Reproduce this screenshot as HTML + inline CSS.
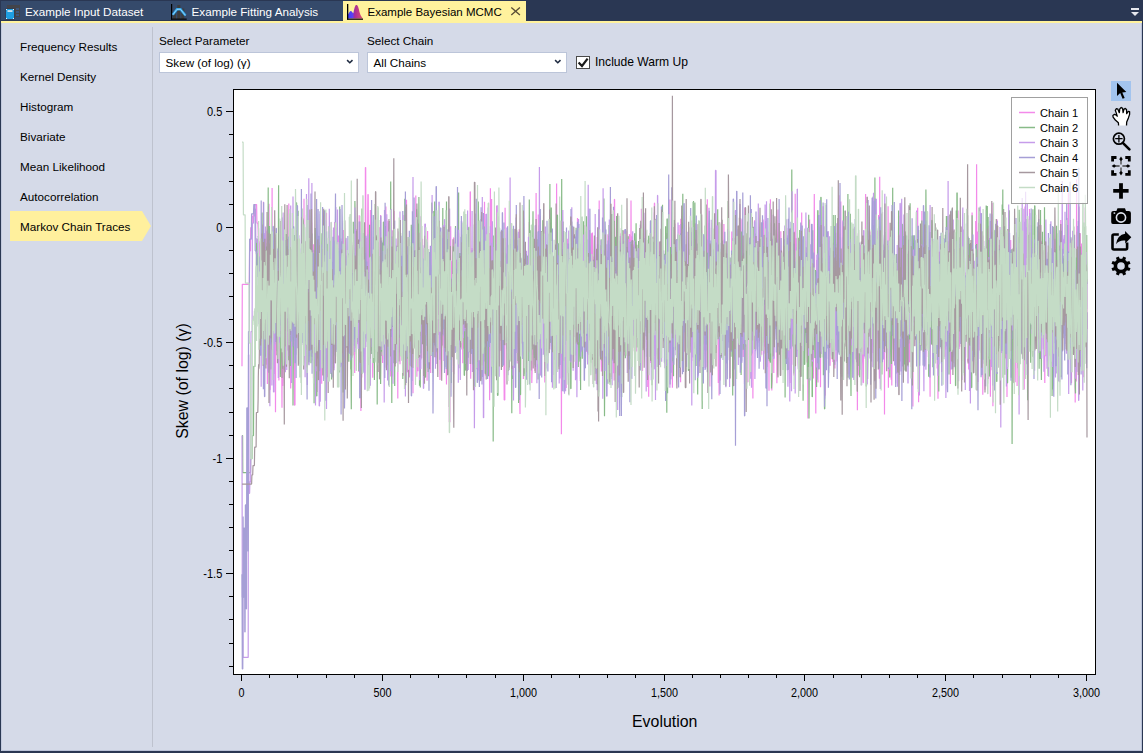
<!DOCTYPE html>
<html><head><meta charset="utf-8">
<style>
*{margin:0;padding:0;box-sizing:border-box}
html,body{width:1143px;height:753px;overflow:hidden}
body{background:#d5dae8;font-family:"Liberation Sans",sans-serif;font-size:11.5px;color:#111;position:relative}
.a{position:absolute}
.t{position:absolute;white-space:nowrap;line-height:1}
#tabbar{left:0;top:0;width:1143px;height:21px;background:#2a3753}
#tabs{left:1px;top:1px;width:342px;height:19px;background:#354a6b}
#atab{left:343px;top:1px;width:183px;height:21px;background:#fff29d}
#yl{left:1px;top:21px;width:1141px;height:2px;background:#fff29d}
.wt{color:#fff}
.nav{left:20px;color:#111}
#hl{left:10px;top:211px}
.combo{background:#fff;border:1px solid #bcc5d9;height:21px}
svg{position:absolute;left:0;top:0}
</style></head><body>
<div class="a" id="tabbar"></div>
<div class="a" id="tabs"></div>
<div class="a" id="atab"></div>
<div class="a" id="yl"></div>
<!-- window borders -->
<div class="a" style="left:0;top:0;width:1px;height:753px;background:#2a3753"></div>
<div class="a" style="left:1142px;top:0;width:1px;height:753px;background:#2a3753"></div>
<div class="a" style="left:0;top:751px;width:1143px;height:2px;background:#2a3753"></div>
<div class="a" style="left:1px;top:750px;width:1141px;height:1px;background:#b9c2d8"></div>
<div class="a" style="left:1141px;top:23px;width:1px;height:728px;background:#b9c2d8"></div>
<div class="a" style="left:1px;top:23px;width:1px;height:728px;background:#c3cade"></div>

<div class="a combo" style="left:159px;top:52px;width:200px"></div>
<div class="a combo" style="left:367px;top:52px;width:200px"></div>
<!-- tab texts -->

<svg width="1143" height="753" viewBox="0 0 1143 753">
 <!-- tab1 icon -->
 <rect x="7" y="5" width="13" height="12" fill="#43444a"/>
 <rect x="16" y="8" width="3" height="2" fill="#3d567c"/>
 <rect x="16" y="11" width="3" height="2" fill="#3d567c"/>
 <rect x="16" y="14" width="3" height="2" fill="#3d567c"/>
 <rect x="5.5" y="8.5" width="9" height="11" fill="#2a3753"/>
 <rect x="6" y="9" width="8" height="10" rx="0.8" fill="#1f9ee2"/>
 <rect x="7.5" y="10.3" width="5" height="1.5" fill="#f4f0f0"/>
 <rect x="6" y="9" width="1" height="1" fill="#e8f0f8"/><rect x="13" y="9" width="1" height="1" fill="#e8f0f8"/><rect x="6" y="18" width="1" height="1" fill="#e8f0f8"/><rect x="13" y="18" width="1" height="1" fill="#e8f0f8"/>
 <!-- tab2 icon -->
 <rect x="173" y="12" width="3" height="7" fill="#3c3c3c"/>
 <rect x="177.3" y="5" width="3" height="14" fill="#3c3c3c"/>
 <rect x="181.3" y="8.5" width="3" height="10.5" fill="#3c3c3c"/>
 <rect x="171" y="4" width="1.2" height="15.6" fill="#000"/>
 <rect x="171" y="18.6" width="15.7" height="1.1" fill="#000"/>
 <polyline points="172.8,14.8 177,9.3 180.5,9.3 185.5,15.5" fill="none" stroke="#2ba3ea" stroke-width="2.4"/>
 <polyline points="172.8,14.8 177,9.3 180.5,9.3 185.5,15.5" fill="none" stroke="#bfe4fa" stroke-width="0.7"/>
 <!-- tab3 icon -->
 <defs><linearGradient id="hg" x1="0" x2="1" y1="0" y2="0"><stop offset="0" stop-color="#3c3cff"/><stop offset="0.3" stop-color="#6040f0"/><stop offset="0.45" stop-color="#a82c98"/><stop offset="1" stop-color="#e0506a"/></linearGradient></defs>
 <path d="M348,18.6 L348,14.5 L349.5,12 L350.5,11 L351.5,11.3 L352.5,12.5 L353.3,13.2 L354,10 L354.8,7 L355.8,5 L357,5 L358,6.5 L358.8,9 L359.5,12 L360.5,15 L362,17.5 L363,18.6 Z" fill="url(#hg)"/>
 <rect x="347" y="4" width="1.3" height="15.5" fill="#000"/>
 <rect x="347" y="18.6" width="16" height="1.2" fill="#000"/>
 <!-- close X -->
 <path d="M511.3,7.4 L519.9,14.9 M519.9,7.4 L511.3,14.9" stroke="#5a4e36" stroke-width="1.35"/>
 <!-- overflow dropdown -->
 <rect x="1131" y="8" width="8" height="2" fill="#e6e8ee"/>
 <path d="M1131,12 L1139,12 L1135,16 Z" fill="#e6e8ee"/>

 <!-- nav separator -->
 <rect x="152" y="27" width="1" height="720" fill="#bec2ce"/>
 <!-- nav highlight -->
 <path d="M10,211 L142,211 L151,226 L142,241 L10,241 Z" fill="#fff09d"/>

 <!-- combo chevrons -->
 <path d="M347.1,60.1 L349.8,62.8 L352.5,60.1" fill="none" stroke="#1e2a40" stroke-width="1.5"/>
 <path d="M555.1,60.1 L557.8,62.8 L560.5,60.1" fill="none" stroke="#1e2a40" stroke-width="1.5"/>
 <!-- checkbox -->
 <rect x="576.5" y="56.5" width="13" height="12" fill="#fff" stroke="#4a4a4a" stroke-width="1"/>
 <path d="M578.6,62.4 L582,66 L587.6,58.7" fill="none" stroke="#1a1a1a" stroke-width="2.2"/>

 <!-- plot area -->
 <rect x="233.5" y="89.5" width="862" height="585" fill="#fff" stroke="none"/>
 <defs><clipPath id="pc"><rect x="234" y="90" width="861" height="584"/></clipPath></defs>
 <g fill="none" stroke-width="1.2" stroke-linejoin="bevel" clip-path="url(#pc)">
 <path d="M242.0 366.3L242.3 284.3L242.6 284.3L242.8 284.3L243.1 284.3L243.4 284.3L243.7 284.3L244.0 284.3L244.3 284.3L244.5 284.3L244.8 284.3L245.1 284.3L245.4 284.3L245.7 284.3L245.9 284.3L246.2 284.3L246.5 284.3L246.8 284.3L247.1 284.3L247.4 284.3L247.6 284.3L247.9 284.3L248.2 284.3L248.5 284.3L248.8 284.3L249.0 284.3L249.3 284.3L249.6 250.8L249.9 250.8L250.2 250.8L250.5 250.8L250.7 227.7L251.0 227.7L251.3 227.7L251.6 227.7L251.9 227.7L252.1 227.7L252.4 216.1L252.7 216.1L253.0 216.1L253.3 216.1L253.5 216.1L253.8 216.1L254.1 216.1L254.4 216.1L254.7 204.6L255.0 204.6L255.2 204.6L255.5 204.6L255.8 204.6L256.1 204.6L256.4 204.6L256.6 204.6L256.9 223.1L257.2 223.1L257.5 223.1L257.8 223.1L258.1 229.5L258.3 237.1L258.6 228.3L258.9 245.8L259.2 241.3L259.5 248.9L259.7 263.2L260.0 266.7L260.3 243.3L260.6 265.8L260.9 300.3L261.2 301.6L261.4 300.2L261.7 320.0L262.0 326.9L262.3 293.2L262.6 224.4L262.8 332.6L263.1 322.3L263.4 201.7L263.7 359.4L264.0 328.7L264.3 338.8L264.5 307.1L264.8 284.4L265.1 254.5L265.4 249.2L265.7 317.5L265.9 289.6L266.2 357.3L266.5 274.0L266.8 364.8L267.1 230.7L267.4 384.1L267.6 265.4L267.9 288.3L268.2 339.6L268.5 206.3L268.8 318.6L269.0 203.7L269.3 304.3L269.6 286.1L269.9 389.6L270.2 389.6L270.4 288.8L270.7 333.7L271.0 330.3L271.3 349.2L271.6 306.6L271.9 328.4L272.1 188.1L272.4 334.0L272.7 295.7L273.0 276.4L273.3 302.2L273.5 279.1L273.8 351.9L274.1 351.9L274.4 349.6L274.7 374.1L275.0 265.7L275.2 301.6L275.5 412.2L275.8 312.1L276.1 312.1L276.4 314.1L276.6 284.7L276.9 283.7L277.2 291.2L277.5 291.2L277.8 330.6L278.1 321.2L278.3 259.3L278.6 313.8L278.9 380.6L279.2 269.1L279.5 321.6L279.7 318.4L280.0 321.3L280.3 252.2L280.6 314.7L280.9 315.4L281.2 268.4L281.4 307.2L281.7 358.6L282.0 407.8L282.3 295.8L282.6 235.7L282.8 386.0L283.1 378.5L283.4 347.9L283.7 289.5L284.0 299.3L284.3 369.7L284.5 319.1L284.8 254.8L285.1 345.9L285.4 257.6L285.7 345.0L285.9 325.9L286.2 274.3L286.5 274.3L286.8 274.3L287.1 274.3L287.3 280.6L287.6 239.1L287.9 350.4L288.2 242.1L288.5 295.3L288.8 203.4L289.0 343.9L289.3 330.0L289.6 330.0L289.9 344.6L290.2 264.8L290.4 277.0L290.7 388.5L291.0 317.2L291.3 272.6L291.6 272.6L291.9 339.4L292.1 292.4L292.4 292.4L292.7 316.4L293.0 293.3L293.3 338.4L293.5 259.0L293.8 322.2L294.1 247.8L294.4 405.1L294.7 405.1L295.0 405.1L295.2 290.0L295.5 290.0L295.8 265.3L296.1 305.9L296.4 311.2L296.6 260.6L296.9 260.6L297.2 288.9L297.5 311.9L297.8 306.7L298.1 268.9L298.3 287.4L298.6 342.4L298.9 282.2L299.2 363.5L299.5 363.5L299.7 299.8L300.0 291.5L300.3 315.1L300.6 328.5L300.9 328.5L301.2 352.4L301.4 307.6L301.7 264.8L302.0 328.6L302.3 310.3L302.6 258.3L302.8 284.9L303.1 320.2L303.4 331.0L303.7 314.8L304.0 198.8L304.2 328.3L304.5 308.8L304.8 242.5L305.1 341.4L305.4 341.4L305.7 309.6L305.9 287.6L306.2 323.0L306.5 215.1L306.8 286.6L307.1 269.2L307.3 300.8L307.6 221.4L307.9 354.4L308.2 364.6L308.5 304.6L308.8 333.7L309.0 299.2L309.3 304.0L309.6 298.6L309.9 343.5L310.2 313.7L310.4 287.7L310.7 349.9L311.0 305.6L311.3 284.0L311.6 222.6L311.9 261.7L312.1 311.3L312.4 318.8L312.7 283.8L313.0 278.7L313.3 244.3L313.5 378.1L313.8 259.5L314.1 288.3L314.4 307.6L314.7 349.5L315.0 320.4L315.2 301.5L315.5 265.6L315.8 259.6L316.1 340.2L316.4 248.5L316.6 323.2L316.9 323.2L317.2 392.0L317.5 314.8L317.8 343.4L318.1 343.4L318.3 308.1L318.6 280.7L318.9 280.7L319.2 358.6L319.5 324.1L319.7 324.1L320.0 370.8L320.3 213.9L320.6 313.1L320.9 263.6L321.1 276.5L321.4 263.6L321.7 383.7L322.0 271.1L322.3 271.1L322.6 241.0L322.8 294.1L323.1 254.0L323.4 254.0L323.7 233.3L324.0 333.1L324.2 378.8L324.5 307.1L324.8 348.3L325.1 276.0L325.4 296.6L325.7 318.1L325.9 294.8L326.2 338.6L326.5 212.7L326.8 301.6L327.1 251.6L327.3 282.4L327.6 377.2L327.9 284.6L328.2 303.7L328.5 273.9L328.8 330.0L329.0 313.0L329.3 294.1L329.6 285.6L329.9 312.5L330.2 312.5L330.4 309.1L330.7 370.8L331.0 260.1L331.3 222.3L331.6 276.1L331.9 327.8L332.1 297.7L332.4 263.1L332.7 280.6L333.0 280.5L333.3 280.5L333.5 237.1L333.8 368.0L334.1 322.9L334.4 304.8L334.7 222.1L335.0 225.9L335.2 225.9L335.5 324.1L335.8 278.2L336.1 317.2L336.4 294.9L336.6 294.9L336.9 227.8L337.2 309.7L337.5 351.5L337.8 258.6L338.0 246.0L338.3 367.1L338.6 235.5L338.9 318.0L339.2 318.0L339.5 318.0L339.7 350.1L340.0 253.8L340.3 253.8L340.6 294.6L340.9 344.9L341.1 344.9L341.4 250.9L341.7 249.6L342.0 331.8L342.3 249.4L342.6 287.9L342.8 311.4L343.1 289.2L343.4 289.2L343.7 230.1L344.0 330.3L344.2 334.4L344.5 296.1L344.8 293.3L345.1 299.5L345.4 240.2L345.7 259.8L345.9 303.8L346.2 332.2L346.5 256.6L346.8 264.1L347.1 320.0L347.3 329.0L347.6 329.0L347.9 351.5L348.2 272.6L348.5 277.4L348.8 261.2L349.0 347.7L349.3 347.7L349.6 248.3L349.9 262.9L350.2 242.2L350.4 308.9L350.7 308.9L351.0 242.6L351.3 242.6L351.6 242.6L351.9 300.5L352.1 340.8L352.4 287.6L352.7 332.8L353.0 293.6L353.3 355.0L353.5 344.2L353.8 333.7L354.1 295.9L354.4 303.0L354.7 372.9L354.9 274.8L355.2 311.9L355.5 311.9L355.8 286.4L356.1 258.9L356.4 354.0L356.6 229.2L356.9 274.0L357.2 311.5L357.5 343.7L357.8 343.7L358.0 265.8L358.3 312.6L358.6 312.6L358.9 372.1L359.2 215.2L359.5 312.4L359.7 290.3L360.0 297.4L360.3 221.4L360.6 292.1L360.9 411.0L361.1 339.1L361.4 307.1L361.7 377.4L362.0 288.9L362.3 251.7L362.6 340.1L362.8 272.7L363.1 272.7L363.4 245.3L363.7 305.9L364.0 322.8L364.2 352.9L364.5 243.8L364.8 373.0L365.1 299.3L365.4 167.5L365.7 167.5L365.9 282.5L366.2 237.8L366.5 323.8L366.8 265.3L367.1 338.9L367.3 338.9L367.6 233.5L367.9 194.5L368.2 194.5L368.5 273.7L368.8 271.3L369.0 353.2L369.3 327.5L369.6 329.1L369.9 244.8L370.2 244.8L370.4 209.9L370.7 230.6L371.0 333.8L371.3 342.0L371.6 221.5L371.8 244.8L372.1 266.4L372.4 269.8L372.7 377.8L373.0 308.6L373.3 359.5L373.5 336.7L373.8 357.0L374.1 302.9L374.4 243.4L374.7 300.9L374.9 306.5L375.2 250.5L375.5 323.6L375.8 351.7L376.1 352.9L376.4 302.3L376.6 290.6L376.9 300.3L377.2 263.1L377.5 251.1L377.8 275.9L378.0 339.6L378.3 286.9L378.6 306.2L378.9 338.3L379.2 338.3L379.5 227.6L379.7 227.6L380.0 242.0L380.3 372.4L380.6 215.0L380.9 268.6L381.1 268.6L381.4 285.4L381.7 355.9L382.0 306.2L382.3 306.2L382.6 363.0L382.8 298.5L383.1 298.5L383.4 329.7L383.7 240.4L384.0 308.6L384.2 270.8L384.5 359.4L384.8 274.8L385.1 291.8L385.4 290.9L385.7 243.3L385.9 206.6L386.2 367.8L386.5 269.1L386.8 364.1L387.1 336.7L387.3 317.1L387.6 317.1L387.9 221.1L388.2 221.1L388.5 292.9L388.7 272.9L389.0 253.4L389.3 247.0L389.6 284.2L389.9 273.9L390.2 316.8L390.4 346.6L390.7 376.6L391.0 292.9L391.3 295.1L391.6 283.3L391.8 303.8L392.1 230.0L392.4 316.1L392.7 357.4L393.0 357.4L393.3 342.9L393.5 262.8L393.8 211.3L394.1 211.3L394.4 277.1L394.7 266.2L394.9 266.2L395.2 305.2L395.5 305.8L395.8 349.8L396.1 307.4L396.4 254.6L396.6 254.6L396.9 281.6L397.2 321.3L397.5 264.2L397.8 398.6L398.0 318.0L398.3 252.7L398.6 231.4L398.9 298.4L399.2 352.3L399.5 287.5L399.7 353.4L400.0 364.3L400.3 243.5L400.6 264.8L400.9 298.3L401.1 280.1L401.4 356.1L401.7 322.7L402.0 322.7L402.3 346.6L402.6 346.6L402.8 375.3L403.1 375.3L403.4 375.3L403.7 267.0L404.0 215.0L404.2 282.4L404.5 232.1L404.8 287.6L405.1 244.9L405.4 230.4L405.6 302.5L405.9 309.6L406.2 300.3L406.5 199.7L406.8 284.1L407.1 274.3L407.3 260.0L407.6 371.8L407.9 371.8L408.2 343.6L408.5 281.3L408.7 321.8L409.0 288.4L409.3 377.3L409.6 354.6L409.9 346.0L410.2 274.6L410.4 314.2L410.7 314.4L411.0 285.7L411.3 285.7L411.6 237.1L411.8 313.5L412.1 267.9L412.4 273.8L412.7 287.9L413.0 393.2L413.3 239.5L413.5 285.7L413.8 325.0L414.1 325.0L414.4 340.5L414.7 284.4L414.9 346.8L415.2 261.5L415.5 340.3L415.8 195.4L416.1 302.2L416.4 305.4L416.6 243.2L416.9 376.7L417.2 246.0L417.5 339.8L417.8 315.4L418.0 371.3L418.3 336.7L418.6 285.3L418.9 232.7L419.2 302.7L419.5 323.1L419.7 270.6L420.0 247.2L420.3 327.4L420.6 340.4L420.9 221.0L421.1 216.3L421.4 341.7L421.7 358.2L422.0 282.8L422.3 282.8L422.5 238.8L422.8 252.7L423.1 285.1L423.4 294.4L423.7 266.0L424.0 363.3L424.2 248.5L424.5 279.4L424.8 343.1L425.1 334.1L425.4 288.3L425.6 316.2L425.9 262.9L426.2 265.6L426.5 284.2L426.8 266.5L427.1 380.7L427.3 285.3L427.6 231.0L427.9 339.5L428.2 326.1L428.5 302.1L428.7 277.3L429.0 277.3L429.3 330.8L429.6 330.8L429.9 296.9L430.2 302.4L430.4 274.9L430.7 372.9L431.0 266.6L431.3 302.7L431.6 303.3L431.8 303.3L432.1 310.7L432.4 215.3L432.7 308.9L433.0 246.2L433.3 246.2L433.5 289.9L433.8 320.8L434.1 292.1L434.4 340.0L434.7 277.2L434.9 277.2L435.2 307.8L435.5 265.3L435.8 265.3L436.1 357.7L436.4 320.6L436.6 314.1L436.9 274.7L437.2 328.3L437.5 352.6L437.8 226.6L438.0 262.2L438.3 292.7L438.6 315.1L438.9 237.4L439.2 261.8L439.4 272.0L439.7 327.2L440.0 380.0L440.3 359.1L440.6 359.2L440.9 266.7L441.1 302.6L441.4 256.0L441.7 256.0L442.0 345.1L442.3 345.1L442.5 324.5L442.8 324.5L443.1 313.2L443.4 275.0L443.7 337.4L444.0 360.9L444.2 297.7L444.5 275.5L444.8 313.7L445.1 255.9L445.4 255.9L445.6 334.3L445.9 273.0L446.2 364.4L446.5 384.5L446.8 343.4L447.1 312.2L447.3 312.2L447.6 315.9L447.9 329.8L448.2 284.2L448.5 312.0L448.7 243.4L449.0 239.3L449.3 422.1L449.6 422.1L449.9 422.1L450.2 259.5L450.4 356.4L450.7 226.2L451.0 310.7L451.3 260.7L451.6 268.5L451.8 273.6L452.1 291.0L452.4 337.5L452.7 286.1L453.0 282.6L453.3 372.1L453.5 237.9L453.8 237.9L454.1 327.5L454.4 302.9L454.7 300.1L454.9 281.4L455.2 276.4L455.5 269.1L455.8 269.1L456.1 328.4L456.3 325.6L456.6 260.1L456.9 260.1L457.2 260.1L457.5 284.5L457.8 236.3L458.0 308.4L458.3 279.9L458.6 233.2L458.9 313.3L459.2 313.3L459.4 282.2L459.7 282.2L460.0 307.9L460.3 312.2L460.6 305.5L460.9 321.8L461.1 332.9L461.4 293.1L461.7 314.4L462.0 255.0L462.3 306.0L462.5 289.1L462.8 363.3L463.1 227.6L463.4 227.6L463.7 260.3L464.0 348.7L464.2 301.8L464.5 301.8L464.8 245.6L465.1 245.6L465.4 246.2L465.6 246.2L465.9 251.9L466.2 292.7L466.5 306.2L466.8 323.0L467.1 323.0L467.3 296.0L467.6 282.8L467.9 327.0L468.2 261.2L468.5 261.2L468.7 261.2L469.0 291.5L469.3 321.5L469.6 322.3L469.9 277.8L470.2 191.8L470.4 191.8L470.7 378.8L471.0 308.2L471.3 320.3L471.6 327.6L471.8 272.1L472.1 247.9L472.4 346.2L472.7 297.3L473.0 280.4L473.2 357.1L473.5 273.2L473.8 273.6L474.1 273.6L474.4 273.6L474.7 333.9L474.9 338.7L475.2 322.3L475.5 311.3L475.8 341.4L476.1 224.0L476.3 273.3L476.6 247.8L476.9 369.3L477.2 261.1L477.5 308.2L477.8 272.0L478.0 350.1L478.3 370.5L478.6 304.1L478.9 379.9L479.2 379.9L479.4 336.1L479.7 302.6L480.0 276.8L480.3 280.5L480.6 274.1L480.9 277.2L481.1 296.8L481.4 296.8L481.7 274.1L482.0 293.5L482.3 233.3L482.5 304.0L482.8 304.6L483.1 298.1L483.4 282.0L483.7 282.0L484.0 328.8L484.2 271.7L484.5 201.7L484.8 341.3L485.1 231.4L485.4 375.4L485.6 278.4L485.9 328.3L486.2 328.3L486.5 290.8L486.8 279.0L487.1 279.0L487.3 311.0L487.6 260.3L487.9 301.3L488.2 301.3L488.5 244.4L488.7 305.5L489.0 260.8L489.3 233.0L489.6 400.2L489.9 330.7L490.1 330.7L490.4 188.2L490.7 251.6L491.0 323.7L491.3 310.2L491.6 198.9L491.8 258.6L492.1 311.4L492.4 282.4L492.7 279.8L493.0 311.6L493.2 237.7L493.5 265.5L493.8 310.2L494.1 242.4L494.4 349.6L494.7 319.9L494.9 293.9L495.2 271.5L495.5 321.4L495.8 290.6L496.1 338.4L496.3 314.6L496.6 205.7L496.9 341.0L497.2 271.6L497.5 338.7L497.8 297.3L498.0 262.6L498.3 216.9L498.6 338.4L498.9 234.4L499.2 234.4L499.4 322.2L499.7 245.2L500.0 351.1L500.3 298.0L500.6 262.3L500.9 318.6L501.1 318.6L501.4 318.6L501.7 318.6L502.0 341.6L502.3 305.4L502.5 341.3L502.8 353.4L503.1 353.4L503.4 339.6L503.7 277.7L504.0 365.9L504.2 399.9L504.5 399.9L504.8 399.9L505.1 207.8L505.4 290.3L505.6 276.4L505.9 276.3L506.2 276.3L506.5 276.3L506.8 320.7L507.0 270.6L507.3 285.3L507.6 348.7L507.9 345.0L508.2 295.3L508.5 293.6L508.7 315.5L509.0 298.0L509.3 277.1L509.6 269.8L509.9 323.1L510.1 316.7L510.4 302.4L510.7 287.1L511.0 289.0L511.3 258.6L511.6 328.6L511.8 346.3L512.1 329.1L512.4 328.1L512.7 347.3L513.0 302.0L513.2 288.0L513.5 343.5L513.8 343.7L514.1 296.3L514.4 266.3L514.7 287.3L514.9 324.1L515.2 314.1L515.5 329.0L515.8 329.0L516.1 291.2L516.3 277.3L516.6 261.5L516.9 283.1L517.2 363.6L517.5 254.3L517.8 282.9L518.0 309.3L518.3 280.5L518.6 331.5L518.9 326.4L519.2 229.2L519.4 257.8L519.7 396.7L520.0 414.1L520.3 288.6L520.6 338.1L520.9 338.1L521.1 290.5L521.4 343.5L521.7 334.8L522.0 334.8L522.3 334.8L522.5 340.1L522.8 300.0L523.1 254.3L523.4 379.1L523.7 294.8L523.9 296.7L524.2 350.7L524.5 360.3L524.8 298.2L525.1 329.8L525.4 296.5L525.6 322.5L525.9 330.0L526.2 312.9L526.5 257.1L526.8 257.1L527.0 272.2L527.3 346.9L527.6 283.0L527.9 302.6L528.2 324.8L528.5 355.2L528.7 278.9L529.0 322.2L529.3 222.1L529.6 344.9L529.9 350.4L530.1 350.4L530.4 276.0L530.7 276.0L531.0 276.0L531.3 315.8L531.6 308.0L531.8 383.1L532.1 370.9L532.4 291.6L532.7 258.9L533.0 334.9L533.2 314.5L533.5 333.6L533.8 290.1L534.1 354.7L534.4 271.2L534.7 313.1L534.9 371.1L535.2 306.6L535.5 242.8L535.8 301.1L536.1 193.1L536.3 298.5L536.6 292.3L536.9 277.9L537.2 319.5L537.5 242.1L537.8 265.8L538.0 321.3L538.3 214.4L538.6 335.8L538.9 229.0L539.2 349.7L539.4 299.6L539.7 307.7L540.0 254.0L540.3 216.0L540.6 301.7L540.8 291.3L541.1 332.8L541.4 277.4L541.7 277.4L542.0 288.6L542.3 283.9L542.5 255.1L542.8 255.1L543.1 272.3L543.4 309.0L543.7 305.0L543.9 300.7L544.2 325.1L544.5 325.1L544.8 382.6L545.1 296.7L545.4 261.2L545.6 301.2L545.9 315.7L546.2 351.6L546.5 255.9L546.8 323.4L547.0 323.4L547.3 316.0L547.6 266.0L547.9 287.9L548.2 287.9L548.5 307.5L548.7 282.3L549.0 258.8L549.3 287.9L549.6 273.5L549.9 342.2L550.1 342.2L550.4 236.5L550.7 248.9L551.0 333.2L551.3 349.8L551.6 349.8L551.8 287.1L552.1 238.9L552.4 338.9L552.7 320.3L553.0 332.1L553.2 365.7L553.5 273.9L553.8 328.3L554.1 324.9L554.4 350.3L554.7 280.1L554.9 331.1L555.2 347.4L555.5 369.1L555.8 306.4L556.1 297.3L556.3 350.5L556.6 183.4L556.9 293.5L557.2 304.8L557.5 243.3L557.7 308.5L558.0 309.0L558.3 266.1L558.6 258.5L558.9 326.9L559.2 279.9L559.4 308.3L559.7 340.2L560.0 270.6L560.3 351.0L560.6 324.0L560.8 343.3L561.1 257.0L561.4 434.2L561.7 333.3L562.0 235.8L562.3 295.3L562.5 377.0L562.8 377.0L563.1 293.5L563.4 293.5L563.7 294.0L563.9 294.0L564.2 340.0L564.5 286.5L564.8 270.4L565.1 259.9L565.4 376.9L565.6 262.9L565.9 287.9L566.2 387.9L566.5 348.0L566.8 300.2L567.0 338.1L567.3 238.8L567.6 256.3L567.9 259.6L568.2 315.9L568.5 283.7L568.7 295.0L569.0 329.2L569.3 329.2L569.6 275.1L569.9 306.9L570.1 328.4L570.4 328.4L570.7 268.5L571.0 327.1L571.3 219.5L571.6 292.4L571.8 305.9L572.1 302.0L572.4 302.0L572.7 302.1L573.0 255.7L573.2 306.0L573.5 316.2L573.8 235.2L574.1 323.0L574.4 297.3L574.6 337.1L574.9 336.2L575.2 271.4L575.5 335.0L575.8 310.1L576.1 308.7L576.3 328.0L576.6 304.9L576.9 262.1L577.2 266.1L577.5 218.1L577.7 338.8L578.0 300.4L578.3 300.4L578.6 260.5L578.9 256.5L579.2 277.1L579.4 285.9L579.7 301.2L580.0 294.5L580.3 381.1L580.6 288.3L580.8 310.1L581.1 310.4L581.4 240.6L581.7 339.9L582.0 330.6L582.3 296.1L582.5 323.3L582.8 315.9L583.1 315.9L583.4 301.6L583.7 293.8L583.9 284.0L584.2 244.6L584.5 225.6L584.8 225.6L585.1 296.7L585.4 318.0L585.6 274.5L585.9 274.5L586.2 274.5L586.5 351.9L586.8 253.3L587.0 305.8L587.3 247.9L587.6 306.9L587.9 336.4L588.2 317.3L588.5 355.1L588.7 333.9L589.0 303.1L589.3 299.9L589.6 310.6L589.9 254.3L590.1 254.3L590.4 307.2L590.7 307.2L591.0 316.7L591.3 233.3L591.5 300.0L591.8 286.0L592.1 304.9L592.4 232.6L592.7 290.0L593.0 256.4L593.2 300.6L593.5 300.6L593.8 260.3L594.1 353.3L594.4 346.7L594.6 314.5L594.9 319.3L595.2 304.7L595.5 347.4L595.8 283.4L596.1 250.3L596.3 291.8L596.6 382.5L596.9 320.9L597.2 237.0L597.5 342.9L597.7 332.8L598.0 335.9L598.3 278.9L598.6 263.3L598.9 331.7L599.2 200.6L599.4 314.1L599.7 249.0L600.0 279.5L600.3 279.5L600.6 279.5L600.8 359.1L601.1 359.1L601.4 371.5L601.7 267.9L602.0 280.9L602.3 351.4L602.5 253.9L602.8 314.6L603.1 314.6L603.4 298.0L603.7 277.1L603.9 250.4L604.2 250.4L604.5 332.4L604.8 253.3L605.1 250.9L605.4 343.6L605.6 254.1L605.9 323.1L606.2 317.6L606.5 271.8L606.8 352.3L607.0 256.2L607.3 311.2L607.6 311.2L607.9 234.2L608.2 364.9L608.4 255.0L608.7 290.8L609.0 236.1L609.3 282.6L609.6 351.3L609.9 264.5L610.1 248.5L610.4 304.0L610.7 304.0L611.0 304.0L611.3 276.0L611.5 265.9L611.8 346.8L612.1 326.4L612.4 296.6L612.7 296.1L613.0 299.0L613.2 284.1L613.5 373.2L613.8 338.9L614.1 380.5L614.4 199.4L614.6 199.4L614.9 293.3L615.2 281.6L615.5 298.2L615.8 275.8L616.1 301.7L616.3 301.7L616.6 301.7L616.9 298.7L617.2 251.6L617.5 246.2L617.7 246.2L618.0 271.6L618.3 311.2L618.6 278.3L618.9 313.3L619.2 240.6L619.4 285.4L619.7 298.3L620.0 246.7L620.3 243.1L620.6 290.2L620.8 244.5L621.1 233.3L621.4 367.5L621.7 368.4L622.0 271.3L622.3 291.2L622.5 293.2L622.8 316.3L623.1 230.9L623.4 230.9L623.7 302.2L623.9 355.2L624.2 355.2L624.5 249.9L624.8 304.6L625.1 322.4L625.3 295.1L625.6 249.4L625.9 249.4L626.2 301.6L626.5 255.9L626.8 289.6L627.0 295.1L627.3 295.1L627.6 273.5L627.9 277.5L628.2 302.8L628.4 341.4L628.7 247.7L629.0 346.2L629.3 234.6L629.6 234.6L629.9 271.5L630.1 264.5L630.4 297.0L630.7 344.1L631.0 200.6L631.3 274.0L631.5 310.5L631.8 278.4L632.1 236.3L632.4 361.5L632.7 308.0L633.0 289.1L633.2 244.6L633.5 255.6L633.8 316.3L634.1 309.1L634.4 270.4L634.6 287.8L634.9 280.2L635.2 304.5L635.5 320.6L635.8 267.9L636.1 241.4L636.3 281.6L636.6 351.6L636.9 307.0L637.2 326.5L637.5 278.5L637.7 321.0L638.0 301.6L638.3 297.7L638.6 326.4L638.9 322.1L639.2 279.1L639.4 291.4L639.7 309.8L640.0 309.8L640.3 321.3L640.6 310.7L640.8 310.7L641.1 310.7L641.4 208.7L641.7 217.0L642.0 264.2L642.2 250.6L642.5 370.9L642.8 273.1L643.1 272.9L643.4 348.5L643.7 241.9L643.9 309.3L644.2 293.3L644.5 261.2L644.8 248.8L645.1 248.8L645.3 290.6L645.6 276.1L645.9 230.9L646.2 266.8L646.5 295.9L646.8 259.6L647.0 295.5L647.3 386.9L647.6 283.7L647.9 323.8L648.2 310.3L648.4 267.3L648.7 396.8L649.0 278.6L649.3 278.6L649.6 327.0L649.9 341.4L650.1 313.4L650.4 316.9L650.7 363.0L651.0 302.8L651.3 268.6L651.5 302.0L651.8 302.0L652.1 244.1L652.4 291.1L652.7 302.7L653.0 263.7L653.2 305.3L653.5 305.3L653.8 326.4L654.1 325.9L654.4 203.2L654.6 203.2L654.9 259.6L655.2 309.2L655.5 258.0L655.8 356.1L656.1 351.1L656.3 339.2L656.6 349.4L656.9 349.4L657.2 310.8L657.5 298.5L657.7 333.2L658.0 333.2L658.3 333.2L658.6 298.3L658.9 321.6L659.1 288.9L659.4 242.1L659.7 291.9L660.0 288.5L660.3 295.6L660.6 339.1L660.8 292.6L661.1 260.1L661.4 258.5L661.7 339.1L662.0 316.3L662.2 324.3L662.5 316.8L662.8 326.6L663.1 314.5L663.4 314.5L663.7 306.9L663.9 306.9L664.2 342.2L664.5 314.0L664.8 281.1L665.1 281.1L665.3 269.7L665.6 297.7L665.9 240.4L666.2 240.4L666.5 233.6L666.8 233.6L667.0 261.9L667.3 266.1L667.6 279.3L667.9 273.6L668.2 299.3L668.4 270.3L668.7 282.0L669.0 311.9L669.3 351.9L669.6 351.9L669.9 199.4L670.1 299.5L670.4 299.5L670.7 294.1L671.0 294.1L671.3 272.8L671.5 272.8L671.8 313.4L672.1 318.9L672.4 387.8L672.7 334.6L673.0 276.2L673.2 331.8L673.5 265.1L673.8 277.4L674.1 254.9L674.4 275.7L674.6 277.7L674.9 223.6L675.2 318.0L675.5 276.0L675.8 276.0L676.0 302.6L676.3 317.9L676.6 259.8L676.9 259.8L677.2 309.7L677.5 315.6L677.7 298.2L678.0 293.0L678.3 293.0L678.6 309.4L678.9 271.3L679.1 225.0L679.4 363.0L679.7 328.6L680.0 238.8L680.3 281.8L680.6 382.2L680.8 218.8L681.1 255.3L681.4 347.6L681.7 276.4L682.0 276.4L682.2 288.4L682.5 259.0L682.8 313.8L683.1 313.8L683.4 284.7L683.7 351.7L683.9 351.7L684.2 351.7L684.5 235.8L684.8 276.9L685.1 316.0L685.3 273.9L685.6 323.3L685.9 299.6L686.2 303.3L686.5 294.3L686.8 325.1L687.0 325.1L687.3 289.7L687.6 336.6L687.9 332.8L688.2 307.5L688.4 289.3L688.7 308.8L689.0 327.0L689.3 326.5L689.6 278.8L689.9 304.5L690.1 333.8L690.4 226.5L690.7 314.2L691.0 328.3L691.3 346.6L691.5 300.3L691.8 361.0L692.1 241.2L692.4 284.2L692.7 287.0L692.9 282.5L693.2 316.9L693.5 224.0L693.8 328.5L694.1 250.7L694.4 227.7L694.6 270.1L694.9 223.8L695.2 223.8L695.5 223.8L695.8 307.6L696.0 307.6L696.3 262.8L696.6 302.5L696.9 302.5L697.2 326.3L697.5 340.1L697.7 332.3L698.0 325.8L698.3 295.7L698.6 350.1L698.9 350.1L699.1 366.4L699.4 289.5L699.7 248.8L700.0 299.0L700.3 299.0L700.6 326.3L700.8 305.0L701.1 332.7L701.4 305.5L701.7 249.2L702.0 336.6L702.2 308.0L702.5 285.8L702.8 312.5L703.1 235.0L703.4 343.3L703.7 311.7L703.9 368.1L704.2 350.1L704.5 350.1L704.8 290.1L705.1 309.4L705.3 309.4L705.6 249.4L705.9 339.9L706.2 301.7L706.5 265.5L706.8 339.7L707.0 367.2L707.3 199.3L707.6 328.4L707.9 251.3L708.2 241.1L708.4 241.1L708.7 306.6L709.0 331.1L709.3 337.5L709.6 345.6L709.8 386.5L710.1 352.9L710.4 273.3L710.7 269.4L711.0 281.1L711.3 319.9L711.5 227.3L711.8 223.1L712.1 236.9L712.4 275.0L712.7 315.8L712.9 304.4L713.2 304.4L713.5 304.4L713.8 304.4L714.1 304.4L714.4 268.3L714.6 268.3L714.9 323.1L715.2 269.9L715.5 296.0L715.8 309.2L716.0 330.3L716.3 313.7L716.6 311.6L716.9 336.8L717.2 318.6L717.5 318.6L717.7 318.6L718.0 318.6L718.3 383.0L718.6 361.5L718.9 321.8L719.1 395.5L719.4 327.1L719.7 299.6L720.0 327.6L720.3 380.5L720.6 320.1L720.8 329.0L721.1 329.0L721.4 222.1L721.7 309.4L722.0 288.5L722.2 299.0L722.5 250.7L722.8 333.3L723.1 281.4L723.4 303.0L723.7 303.0L723.9 224.1L724.2 253.1L724.5 343.0L724.8 288.2L725.1 310.0L725.3 342.4L725.6 304.3L725.9 304.3L726.2 304.3L726.5 287.7L726.7 310.8L727.0 320.6L727.3 268.1L727.6 268.1L727.9 261.1L728.2 291.8L728.4 266.0L728.7 279.1L729.0 307.8L729.3 322.8L729.6 288.3L729.8 290.1L730.1 299.8L730.4 323.1L730.7 281.6L731.0 309.4L731.3 309.4L731.5 265.1L731.8 231.5L732.1 321.3L732.4 256.2L732.7 277.1L732.9 296.4L733.2 297.5L733.5 331.5L733.8 296.5L734.1 285.4L734.4 308.0L734.6 321.5L734.9 251.1L735.2 276.2L735.5 281.2L735.8 290.2L736.0 265.8L736.3 313.2L736.6 286.5L736.9 335.9L737.2 254.5L737.5 254.5L737.7 313.6L738.0 313.6L738.3 261.6L738.6 261.6L738.9 264.7L739.1 339.7L739.4 250.3L739.7 301.8L740.0 254.8L740.3 238.3L740.6 292.5L740.8 292.5L741.1 304.4L741.4 304.4L741.7 290.1L742.0 219.2L742.2 298.2L742.5 271.9L742.8 328.4L743.1 356.9L743.4 289.7L743.6 306.6L743.9 278.6L744.2 284.2L744.5 383.9L744.8 207.4L745.1 315.1L745.3 267.4L745.6 311.0L745.9 311.0L746.2 254.9L746.5 344.8L746.7 274.4L747.0 303.0L747.3 381.2L747.6 381.9L747.9 381.9L748.2 253.9L748.4 301.7L748.7 237.0L749.0 278.9L749.3 310.5L749.6 311.0L749.8 338.0L750.1 293.9L750.4 344.7L750.7 297.0L751.0 317.7L751.3 292.5L751.5 288.3L751.8 295.3L752.1 251.6L752.4 300.9L752.7 272.2L752.9 398.4L753.2 289.9L753.5 250.9L753.8 267.5L754.1 267.5L754.4 301.4L754.6 220.2L754.9 309.5L755.2 324.2L755.5 340.2L755.8 309.7L756.0 334.1L756.3 291.9L756.6 333.5L756.9 283.7L757.2 259.7L757.5 277.7L757.7 341.3L758.0 342.7L758.3 313.5L758.6 313.5L758.9 326.4L759.1 317.4L759.4 283.1L759.7 332.9L760.0 341.8L760.3 277.7L760.5 334.6L760.8 310.2L761.1 291.8L761.4 329.4L761.7 354.7L762.0 279.3L762.2 343.8L762.5 219.9L762.8 219.9L763.1 219.9L763.4 223.8L763.6 353.5L763.9 353.5L764.2 344.5L764.5 273.7L764.8 346.8L765.1 280.5L765.3 235.3L765.6 261.0L765.9 269.7L766.2 229.1L766.5 266.9L766.7 285.0L767.0 367.0L767.3 261.6L767.6 335.0L767.9 338.0L768.2 347.1L768.4 347.1L768.7 301.7L769.0 390.7L769.3 231.6L769.6 236.8L769.8 236.8L770.1 343.0L770.4 199.2L770.7 335.2L771.0 347.7L771.3 315.6L771.5 315.6L771.8 390.4L772.1 378.4L772.4 310.0L772.7 287.3L772.9 287.3L773.2 352.5L773.5 341.8L773.8 373.0L774.1 324.2L774.4 325.8L774.6 290.6L774.9 290.6L775.2 271.8L775.5 312.2L775.8 281.1L776.0 302.0L776.3 229.8L776.6 296.3L776.9 383.2L777.2 234.4L777.4 234.4L777.7 234.4L778.0 209.6L778.3 346.8L778.6 307.9L778.9 255.3L779.1 255.3L779.4 292.7L779.7 317.5L780.0 295.7L780.3 339.8L780.5 339.8L780.8 231.2L781.1 313.8L781.4 331.5L781.7 264.0L782.0 270.5L782.2 337.7L782.5 347.9L782.8 258.2L783.1 348.9L783.4 250.8L783.6 273.1L783.9 269.5L784.2 297.5L784.5 305.9L784.8 267.1L785.1 291.2L785.3 291.2L785.6 288.3L785.9 293.2L786.2 288.7L786.5 305.4L786.7 362.1L787.0 313.0L787.3 257.8L787.6 300.0L787.9 302.5L788.2 228.1L788.4 230.6L788.7 262.2L789.0 296.2L789.3 283.6L789.6 290.2L789.8 290.2L790.1 383.1L790.4 263.2L790.7 308.5L791.0 308.5L791.3 248.9L791.5 249.1L791.8 364.8L792.1 260.8L792.4 264.4L792.7 317.9L792.9 317.9L793.2 323.7L793.5 257.6L793.8 375.4L794.1 312.6L794.3 268.9L794.6 231.5L794.9 305.5L795.2 193.8L795.5 331.1L795.8 283.6L796.0 320.5L796.3 238.3L796.6 357.0L796.9 338.3L797.2 350.7L797.4 243.5L797.7 296.3L798.0 302.3L798.3 350.1L798.6 272.4L798.9 272.4L799.1 366.1L799.4 282.1L799.7 282.1L800.0 323.7L800.3 300.7L800.5 305.4L800.8 319.5L801.1 326.7L801.4 287.0L801.7 212.4L802.0 338.1L802.2 263.4L802.5 263.4L802.8 289.4L803.1 289.1L803.4 295.6L803.6 295.6L803.9 338.6L804.2 284.9L804.5 337.2L804.8 281.2L805.1 277.6L805.3 304.9L805.6 304.9L805.9 318.1L806.2 318.1L806.5 284.0L806.7 292.7L807.0 331.7L807.3 287.9L807.6 324.1L807.9 418.5L808.2 357.6L808.4 321.4L808.7 321.4L809.0 296.0L809.3 296.0L809.6 219.5L809.8 314.3L810.1 314.3L810.4 314.3L810.7 366.6L811.0 365.8L811.2 290.8L811.5 271.6L811.8 238.9L812.1 326.7L812.4 327.6L812.7 323.0L812.9 276.7L813.2 286.4L813.5 378.5L813.8 292.0L814.1 233.8L814.3 194.0L814.6 268.0L814.9 340.7L815.2 304.8L815.5 344.7L815.8 413.5L816.0 302.2L816.3 311.5L816.6 259.9L816.9 313.4L817.2 292.7L817.4 292.7L817.7 319.6L818.0 382.6L818.3 297.3L818.6 345.0L818.9 256.2L819.1 335.8L819.4 338.0L819.7 242.7L820.0 274.8L820.3 325.2L820.5 387.2L820.8 289.5L821.1 272.2L821.4 272.2L821.7 290.6L822.0 331.8L822.2 274.7L822.5 303.4L822.8 314.2L823.1 206.2L823.4 291.1L823.6 233.7L823.9 285.1L824.2 293.2L824.5 293.2L824.8 318.6L825.1 395.2L825.3 395.2L825.6 292.4L825.9 278.1L826.2 289.9L826.5 272.8L826.7 336.3L827.0 238.3L827.3 288.5L827.6 287.6L827.9 256.3L828.1 232.3L828.4 358.9L828.7 304.4L829.0 304.4L829.3 268.6L829.6 332.7L829.8 365.4L830.1 365.4L830.4 327.9L830.7 340.2L831.0 304.2L831.2 330.9L831.5 347.0L831.8 243.7L832.1 243.7L832.4 304.5L832.7 304.5L832.9 362.0L833.2 263.8L833.5 263.8L833.8 259.9L834.1 242.5L834.3 315.6L834.6 252.6L834.9 368.6L835.2 316.8L835.5 292.9L835.8 232.7L836.0 284.0L836.3 307.2L836.6 288.1L836.9 361.6L837.2 317.9L837.4 339.9L837.7 221.7L838.0 269.8L838.3 282.2L838.6 283.9L838.9 283.9L839.1 195.3L839.4 264.5L839.7 352.4L840.0 234.4L840.3 234.4L840.5 351.7L840.8 201.5L841.1 278.2L841.4 301.0L841.7 332.8L842.0 349.7L842.2 349.7L842.5 296.2L842.8 222.3L843.1 289.4L843.4 379.1L843.6 248.4L843.9 251.0L844.2 313.3L844.5 313.3L844.8 242.5L845.0 297.8L845.3 300.3L845.6 288.8L845.9 267.6L846.2 290.4L846.5 270.9L846.7 359.5L847.0 307.3L847.3 356.8L847.6 324.9L847.9 313.7L848.1 374.0L848.4 242.7L848.7 242.7L849.0 212.5L849.3 236.6L849.6 278.5L849.8 298.6L850.1 359.4L850.4 315.2L850.7 277.2L851.0 301.8L851.2 304.1L851.5 304.1L851.8 317.6L852.1 244.7L852.4 300.9L852.7 300.9L852.9 363.6L853.2 271.0L853.5 253.2L853.8 269.4L854.1 297.6L854.3 297.6L854.6 350.9L854.9 303.3L855.2 320.1L855.5 359.6L855.8 243.8L856.0 272.3L856.3 286.4L856.6 262.2L856.9 352.4L857.2 323.8L857.4 410.3L857.7 278.3L858.0 319.6L858.3 233.3L858.6 290.8L858.9 375.6L859.1 336.7L859.4 279.0L859.7 314.6L860.0 314.6L860.3 258.0L860.5 284.5L860.8 244.8L861.1 263.1L861.4 270.3L861.7 332.9L861.9 259.9L862.2 306.8L862.5 360.0L862.8 363.9L863.1 382.6L863.4 382.6L863.6 350.1L863.9 279.8L864.2 304.0L864.5 294.8L864.8 326.1L865.0 326.1L865.3 252.3L865.6 194.1L865.9 279.5L866.2 351.8L866.5 340.9L866.7 318.3L867.0 288.7L867.3 306.1L867.6 315.3L867.9 304.9L868.1 304.9L868.4 266.9L868.7 317.3L869.0 308.7L869.3 266.6L869.6 319.7L869.8 319.7L870.1 231.6L870.4 250.8L870.7 245.0L871.0 295.5L871.2 295.5L871.5 274.7L871.8 303.0L872.1 303.0L872.4 304.0L872.7 345.8L872.9 353.0L873.2 277.6L873.5 265.1L873.8 288.4L874.1 304.2L874.3 306.9L874.6 347.8L874.9 344.0L875.2 265.9L875.5 317.5L875.8 330.9L876.0 286.9L876.3 287.3L876.6 287.3L876.9 278.6L877.2 298.8L877.4 307.3L877.7 307.3L878.0 230.5L878.3 297.2L878.6 215.0L878.8 310.6L879.1 362.9L879.4 378.8L879.7 176.8L880.0 290.2L880.3 299.1L880.5 259.5L880.8 332.7L881.1 332.7L881.4 281.3L881.7 341.3L881.9 327.7L882.2 256.4L882.5 333.8L882.8 322.1L883.1 322.1L883.4 292.0L883.6 285.1L883.9 260.2L884.2 259.3L884.5 414.5L884.8 261.0L885.0 327.1L885.3 340.4L885.6 302.0L885.9 302.5L886.2 281.3L886.5 285.6L886.7 306.1L887.0 298.0L887.3 307.3L887.6 308.4L887.9 275.9L888.1 206.3L888.4 387.7L888.7 288.7L889.0 347.1L889.3 281.5L889.6 309.3L889.8 268.8L890.1 308.9L890.4 277.5L890.7 302.4L891.0 348.9L891.2 379.8L891.5 274.7L891.8 385.4L892.1 323.0L892.4 280.2L892.7 270.5L892.9 335.4L893.2 304.1L893.5 303.5L893.8 303.5L894.1 335.7L894.3 259.9L894.6 270.8L894.9 326.3L895.2 345.6L895.5 358.7L895.7 383.5L896.0 297.0L896.3 339.2L896.6 277.3L896.9 336.3L897.2 314.6L897.4 346.8L897.7 303.8L898.0 335.2L898.3 314.0L898.6 295.6L898.8 271.0L899.1 261.6L899.4 261.6L899.7 322.5L900.0 322.5L900.3 215.8L900.5 320.4L900.8 285.7L901.1 254.4L901.4 229.0L901.7 288.3L901.9 294.1L902.2 267.4L902.5 342.3L902.8 319.0L903.1 262.1L903.4 289.6L903.6 294.8L903.9 271.6L904.2 346.1L904.5 289.6L904.8 248.6L905.0 338.2L905.3 256.0L905.6 261.5L905.9 284.2L906.2 276.4L906.5 315.9L906.7 316.1L907.0 316.1L907.3 267.2L907.6 284.4L907.9 288.6L908.1 252.8L908.4 258.5L908.7 250.9L909.0 337.1L909.3 263.1L909.6 362.0L909.8 362.0L910.1 292.2L910.4 292.2L910.7 324.3L911.0 246.9L911.2 367.0L911.5 296.0L911.8 265.5L912.1 329.1L912.4 287.7L912.6 287.7L912.9 406.5L913.2 269.9L913.5 312.4L913.8 292.8L914.1 346.0L914.3 275.8L914.6 283.7L914.9 290.4L915.2 280.3L915.5 256.3L915.7 256.3L916.0 328.7L916.3 249.5L916.6 352.0L916.9 333.0L917.2 346.3L917.4 219.0L917.7 207.7L918.0 314.0L918.3 328.7L918.6 402.2L918.8 258.0L919.1 300.0L919.4 300.0L919.7 277.9L920.0 350.9L920.3 306.6L920.5 272.1L920.8 283.9L921.1 345.8L921.4 309.3L921.7 297.7L921.9 210.9L922.2 330.7L922.5 311.0L922.8 310.2L923.1 275.8L923.4 315.6L923.6 218.1L923.9 268.8L924.2 256.7L924.5 256.7L924.8 291.8L925.0 350.6L925.3 339.7L925.6 328.7L925.9 280.0L926.2 335.3L926.5 335.3L926.7 335.3L927.0 311.2L927.3 313.5L927.6 313.5L927.9 289.7L928.1 289.7L928.4 357.0L928.7 313.3L929.0 313.3L929.3 295.8L929.5 295.8L929.8 350.3L930.1 396.8L930.4 262.5L930.7 259.6L931.0 259.6L931.2 261.8L931.5 261.8L931.8 250.7L932.1 250.7L932.4 323.9L932.6 289.0L932.9 265.7L933.2 265.7L933.5 358.9L933.8 320.3L934.1 355.1L934.3 266.0L934.6 277.8L934.9 298.9L935.2 227.7L935.5 341.2L935.7 280.3L936.0 282.4L936.3 342.8L936.6 342.8L936.9 323.8L937.2 368.5L937.4 249.4L937.7 286.1L938.0 398.8L938.3 349.0L938.6 345.3L938.8 345.3L939.1 252.0L939.4 252.0L939.7 308.8L940.0 274.1L940.3 318.8L940.5 283.2L940.8 251.9L941.1 251.9L941.4 273.4L941.7 371.7L941.9 371.7L942.2 248.1L942.5 297.6L942.8 281.8L943.1 310.1L943.4 298.0L943.6 334.7L943.9 334.7L944.2 280.4L944.5 356.6L944.8 356.6L945.0 281.9L945.3 325.3L945.6 349.5L945.9 336.9L946.2 294.8L946.4 294.8L946.7 314.7L947.0 287.0L947.3 304.6L947.6 329.3L947.9 274.1L948.1 316.3L948.4 269.6L948.7 312.2L949.0 321.0L949.3 289.9L949.5 306.0L949.8 330.1L950.1 330.1L950.4 384.1L950.7 266.5L951.0 305.6L951.2 237.3L951.5 289.2L951.8 343.7L952.1 242.8L952.4 258.2L952.6 292.2L952.9 324.9L953.2 314.9L953.5 276.8L953.8 295.5L954.1 289.3L954.3 252.3L954.6 328.0L954.9 312.4L955.2 311.9L955.5 369.4L955.7 261.9L956.0 254.2L956.3 302.3L956.6 302.3L956.9 302.3L957.2 302.3L957.4 213.6L957.7 308.9L958.0 210.5L958.3 317.0L958.6 291.4L958.8 262.9L959.1 349.1L959.4 307.5L959.7 346.7L960.0 255.2L960.3 255.2L960.5 256.1L960.8 256.1L961.1 324.9L961.4 299.8L961.7 274.4L961.9 306.2L962.2 315.8L962.5 246.6L962.8 258.1L963.1 306.8L963.3 309.7L963.6 332.9L963.9 293.5L964.2 311.8L964.5 338.2L964.8 292.6L965.0 317.2L965.3 280.9L965.6 357.4L965.9 272.4L966.2 283.2L966.4 284.8L966.7 295.3L967.0 322.3L967.3 290.9L967.6 261.7L967.9 361.8L968.1 358.5L968.4 334.1L968.7 369.6L969.0 284.4L969.3 299.7L969.5 303.0L969.8 280.1L970.1 308.4L970.4 298.2L970.7 279.2L971.0 374.9L971.2 244.6L971.5 310.7L971.8 283.9L972.1 212.4L972.4 361.5L972.6 300.7L972.9 300.7L973.2 300.7L973.5 304.8L973.8 304.8L974.1 278.4L974.3 277.2L974.6 295.5L974.9 296.0L975.2 275.7L975.5 275.7L975.7 220.9L976.0 259.7L976.3 342.1L976.6 164.3L976.9 330.0L977.2 299.3L977.4 359.8L977.7 231.6L978.0 381.9L978.3 256.6L978.6 223.1L978.8 229.2L979.1 337.9L979.4 321.5L979.7 350.6L980.0 321.8L980.2 295.8L980.5 227.7L980.8 227.7L981.1 331.6L981.4 239.4L981.7 304.6L981.9 304.6L982.2 305.2L982.5 305.9L982.8 394.7L983.1 235.9L983.3 235.9L983.6 292.6L983.9 315.7L984.2 280.3L984.5 280.3L984.8 256.2L985.0 389.7L985.3 278.3L985.6 335.5L985.9 226.7L986.2 344.5L986.4 306.1L986.7 344.8L987.0 292.2L987.3 290.0L987.6 339.9L987.9 225.8L988.1 318.7L988.4 379.1L988.7 354.0L989.0 287.7L989.3 286.0L989.5 238.1L989.8 272.5L990.1 340.1L990.4 396.7L990.7 293.8L991.0 370.3L991.2 257.6L991.5 257.6L991.8 279.1L992.1 202.9L992.4 310.7L992.6 293.4L992.9 406.2L993.2 285.3L993.5 228.4L993.8 362.3L994.1 254.9L994.3 251.8L994.6 270.9L994.9 273.1L995.2 275.1L995.5 275.9L995.7 290.8L996.0 286.2L996.3 253.7L996.6 312.5L996.9 320.8L997.1 219.6L997.4 300.1L997.7 299.2L998.0 334.4L998.3 270.0L998.6 340.2L998.8 326.3L999.1 313.5L999.4 244.9L999.7 345.7L1000.0 324.9L1000.2 280.6L1000.5 280.6L1000.8 267.6L1001.1 263.3L1001.4 270.7L1001.7 320.4L1001.9 320.4L1002.2 238.2L1002.5 238.2L1002.8 238.2L1003.1 332.5L1003.3 253.9L1003.6 246.9L1003.9 246.9L1004.2 327.9L1004.5 329.3L1004.8 339.7L1005.0 301.4L1005.3 301.4L1005.6 358.6L1005.9 233.4L1006.2 281.7L1006.4 345.6L1006.7 302.1L1007.0 396.9L1007.3 315.5L1007.6 282.5L1007.9 311.6L1008.1 359.0L1008.4 308.5L1008.7 212.8L1009.0 242.9L1009.3 291.3L1009.5 257.9L1009.8 298.0L1010.1 336.3L1010.4 281.5L1010.7 239.9L1011.0 278.1L1011.2 312.8L1011.5 320.0L1011.8 269.5L1012.1 335.7L1012.4 305.7L1012.6 280.5L1012.9 350.2L1013.2 309.8L1013.5 309.8L1013.8 290.9L1014.0 296.8L1014.3 287.0L1014.6 272.5L1014.9 303.6L1015.2 382.2L1015.5 337.9L1015.7 260.5L1016.0 260.5L1016.3 276.1L1016.6 349.7L1016.9 326.8L1017.1 385.9L1017.4 317.2L1017.7 300.3L1018.0 327.5L1018.3 306.1L1018.6 271.9L1018.8 274.6L1019.1 274.6L1019.4 274.6L1019.7 273.0L1020.0 273.0L1020.2 269.8L1020.5 269.8L1020.8 304.0L1021.1 305.2L1021.4 326.5L1021.7 259.8L1021.9 352.5L1022.2 341.4L1022.5 342.9L1022.8 342.9L1023.1 342.9L1023.3 342.8L1023.6 316.5L1023.9 345.7L1024.2 389.4L1024.5 292.4L1024.8 298.7L1025.0 206.5L1025.3 251.2L1025.6 239.1L1025.9 298.2L1026.2 265.7L1026.4 254.2L1026.7 295.0L1027.0 231.9L1027.3 231.9L1027.6 242.4L1027.9 316.7L1028.1 299.6L1028.4 238.3L1028.7 294.7L1029.0 218.7L1029.3 259.7L1029.5 209.0L1029.8 311.7L1030.1 282.5L1030.4 247.8L1030.7 225.1L1030.9 274.3L1031.2 324.3L1031.5 324.3L1031.8 326.9L1032.1 295.0L1032.4 295.3L1032.6 329.4L1032.9 353.0L1033.2 300.0L1033.5 259.1L1033.8 292.1L1034.0 283.1L1034.3 317.3L1034.6 341.8L1034.9 322.0L1035.2 304.9L1035.5 304.9L1035.7 304.9L1036.0 255.8L1036.3 312.4L1036.6 323.5L1036.9 336.0L1037.1 305.1L1037.4 342.1L1037.7 342.1L1038.0 341.0L1038.3 329.9L1038.6 312.0L1038.8 329.8L1039.1 325.0L1039.4 284.3L1039.7 232.7L1040.0 232.7L1040.2 341.4L1040.5 281.3L1040.8 261.6L1041.1 281.2L1041.4 241.2L1041.7 274.6L1041.9 274.6L1042.2 307.7L1042.5 307.7L1042.8 331.4L1043.1 330.8L1043.3 349.3L1043.6 328.6L1043.9 252.5L1044.2 250.1L1044.5 342.9L1044.8 382.9L1045.0 303.5L1045.3 252.9L1045.6 273.4L1045.9 356.3L1046.2 321.2L1046.4 306.1L1046.7 324.5L1047.0 307.9L1047.3 272.7L1047.6 272.7L1047.8 284.4L1048.1 311.9L1048.4 311.9L1048.7 257.1L1049.0 320.2L1049.3 354.9L1049.5 354.9L1049.8 328.3L1050.1 340.6L1050.4 307.5L1050.7 277.4L1050.9 258.6L1051.2 287.0L1051.5 282.2L1051.8 276.0L1052.1 275.3L1052.4 284.7L1052.6 296.7L1052.9 296.7L1053.2 326.3L1053.5 319.9L1053.8 266.7L1054.0 316.6L1054.3 302.3L1054.6 332.8L1054.9 238.7L1055.2 334.2L1055.5 334.2L1055.7 281.6L1056.0 269.4L1056.3 281.5L1056.6 281.5L1056.9 284.1L1057.1 271.4L1057.4 313.7L1057.7 281.9L1058.0 281.9L1058.3 312.4L1058.6 314.5L1058.8 271.7L1059.1 271.7L1059.4 269.3L1059.7 362.2L1060.0 307.6L1060.2 261.9L1060.5 261.9L1060.8 219.9L1061.1 292.5L1061.4 338.9L1061.7 340.5L1061.9 339.6L1062.2 284.1L1062.5 285.7L1062.8 285.7L1063.1 309.9L1063.3 309.9L1063.6 279.2L1063.9 271.7L1064.2 285.5L1064.5 301.9L1064.7 334.7L1065.0 343.9L1065.3 275.7L1065.6 316.8L1065.9 224.2L1066.2 309.5L1066.4 309.5L1066.7 251.4L1067.0 264.4L1067.3 270.8L1067.6 284.3L1067.8 315.4L1068.1 288.9L1068.4 192.5L1068.7 284.8L1069.0 316.6L1069.3 326.1L1069.5 295.8L1069.8 319.6L1070.1 272.7L1070.4 297.2L1070.7 315.3L1070.9 238.5L1071.2 300.9L1071.5 383.3L1071.8 318.2L1072.1 308.6L1072.4 261.7L1072.6 314.6L1072.9 337.7L1073.2 337.7L1073.5 233.2L1073.8 318.5L1074.0 301.4L1074.3 292.1L1074.6 348.7L1074.9 337.3L1075.2 402.5L1075.5 334.5L1075.7 282.7L1076.0 354.1L1076.3 381.6L1076.6 179.3L1076.9 261.2L1077.1 301.1L1077.4 285.6L1077.7 275.2L1078.0 346.9L1078.3 251.9L1078.6 251.9L1078.8 257.2L1079.1 206.5L1079.4 298.0L1079.7 294.4L1080.0 294.4L1080.2 233.2L1080.5 308.1L1080.8 306.3L1081.1 306.3L1081.4 306.3L1081.6 243.6L1081.9 300.5L1082.2 320.3L1082.5 322.0L1082.8 363.7L1083.1 341.0L1083.3 325.6L1083.6 377.3L1083.9 289.8L1084.2 313.1L1084.5 242.3L1084.7 275.5L1085.0 292.8L1085.3 207.5L1085.6 289.4L1085.9 335.0L1086.2 347.9L1086.4 262.0L1086.7 307.6L1087.0 328.9" stroke="#f38aea" />
<path d="M242.0 435.6L242.3 435.6L242.6 435.6L242.8 472.6L243.1 472.6L243.4 472.6L243.7 472.6L244.0 472.6L244.3 472.6L244.5 472.6L244.8 472.6L245.1 472.6L245.4 472.6L245.7 472.6L245.9 472.6L246.2 472.6L246.5 472.6L246.8 472.6L247.1 472.6L247.4 472.6L247.6 472.6L247.9 472.6L248.2 472.6L248.5 472.6L248.8 472.6L249.0 472.6L249.3 472.6L249.6 472.6L249.9 472.6L250.2 472.6L250.5 472.6L250.7 458.7L251.0 458.7L251.3 458.7L251.6 458.7L251.9 458.7L252.1 458.7L252.4 435.6L252.7 435.6L253.0 435.6L253.3 435.6L253.5 435.6L253.8 366.3L254.1 366.3L254.4 366.3L254.7 366.3L255.0 366.3L255.2 308.5L255.5 308.5L255.8 308.5L256.1 308.5L256.4 239.2L256.6 239.2L256.9 239.2L257.2 239.2L257.5 273.9L257.8 273.9L258.1 273.9L258.3 273.9L258.6 274.1L258.9 268.5L259.2 279.2L259.5 271.5L259.7 260.3L260.0 275.6L260.3 262.0L260.6 340.2L260.9 268.8L261.2 268.7L261.4 268.1L261.7 253.3L262.0 212.5L262.3 264.7L262.6 255.0L262.8 308.1L263.1 316.8L263.4 291.9L263.7 291.9L264.0 297.0L264.3 256.9L264.5 301.4L264.8 307.1L265.1 328.9L265.4 246.0L265.7 291.0L265.9 288.3L266.2 274.3L266.5 246.5L266.8 334.1L267.1 310.9L267.4 243.1L267.6 314.0L267.9 314.0L268.2 187.4L268.5 349.0L268.8 283.5L269.0 263.7L269.3 226.1L269.6 295.2L269.9 351.4L270.2 343.5L270.4 303.9L270.7 369.1L271.0 369.1L271.3 341.3L271.6 246.1L271.9 274.5L272.1 274.5L272.4 285.2L272.7 364.7L273.0 318.5L273.3 280.2L273.5 280.2L273.8 284.3L274.1 288.5L274.4 247.3L274.7 332.4L275.0 287.9L275.2 287.9L275.5 308.9L275.8 322.6L276.1 261.6L276.4 260.0L276.6 327.7L276.9 327.7L277.2 280.2L277.5 256.3L277.8 329.0L278.1 333.3L278.3 273.4L278.6 185.2L278.9 307.4L279.2 318.4L279.5 338.4L279.7 250.5L280.0 250.5L280.3 377.0L280.6 364.8L280.9 360.2L281.2 325.8L281.4 325.8L281.7 275.1L282.0 350.3L282.3 283.0L282.6 368.7L282.8 283.5L283.1 303.8L283.4 289.3L283.7 289.3L284.0 339.5L284.3 309.5L284.5 241.0L284.8 285.8L285.1 285.8L285.4 285.8L285.7 254.8L285.9 300.6L286.2 234.1L286.5 284.7L286.8 305.2L287.1 305.2L287.3 246.3L287.6 303.7L287.9 246.2L288.2 331.4L288.5 263.2L288.8 360.3L289.0 260.2L289.3 338.4L289.6 282.8L289.9 276.9L290.2 296.4L290.4 366.1L290.7 320.1L291.0 307.7L291.3 283.4L291.6 315.4L291.9 322.5L292.1 249.3L292.4 309.0L292.7 272.8L293.0 405.4L293.3 359.0L293.5 326.2L293.8 340.9L294.1 336.1L294.4 268.2L294.7 235.1L295.0 290.5L295.2 290.5L295.5 354.5L295.8 354.5L296.1 202.8L296.4 202.8L296.6 202.8L296.9 294.5L297.2 220.8L297.5 295.0L297.8 211.1L298.1 211.1L298.3 317.1L298.6 309.5L298.9 311.2L299.2 311.2L299.5 353.5L299.7 282.4L300.0 264.9L300.3 296.6L300.6 332.0L300.9 273.7L301.2 295.7L301.4 295.7L301.7 267.4L302.0 239.6L302.3 324.2L302.6 339.7L302.8 251.4L303.1 297.2L303.4 220.2L303.7 271.6L304.0 289.3L304.2 332.1L304.5 348.6L304.8 256.3L305.1 287.7L305.4 320.6L305.7 326.0L305.9 312.8L306.2 339.4L306.5 309.1L306.8 330.6L307.1 257.5L307.3 288.5L307.6 288.5L307.9 333.0L308.2 249.3L308.5 270.0L308.8 278.4L309.0 362.3L309.3 305.3L309.6 320.2L309.9 281.9L310.2 281.9L310.4 256.0L310.7 250.3L311.0 363.2L311.3 248.3L311.6 335.1L311.9 335.1L312.1 233.4L312.4 356.8L312.7 287.5L313.0 299.2L313.3 305.3L313.5 279.5L313.8 292.3L314.1 403.3L314.4 314.2L314.7 317.3L315.0 282.6L315.2 228.0L315.5 242.0L315.8 279.2L316.1 281.8L316.4 281.8L316.6 395.9L316.9 395.9L317.2 250.1L317.5 257.5L317.8 255.3L318.1 277.5L318.3 277.5L318.6 275.9L318.9 266.5L319.2 335.6L319.5 327.9L319.7 298.2L320.0 326.9L320.3 326.9L320.6 262.7L320.9 262.7L321.1 233.2L321.4 250.6L321.7 250.6L322.0 280.9L322.3 270.1L322.6 270.1L322.8 255.4L323.1 335.1L323.4 313.4L323.7 302.5L324.0 227.4L324.2 233.9L324.5 233.3L324.8 210.6L325.1 341.3L325.4 371.0L325.7 288.5L325.9 308.8L326.2 251.7L326.5 231.4L326.8 282.1L327.1 282.1L327.3 282.1L327.6 247.3L327.9 243.9L328.2 265.7L328.5 352.4L328.8 226.5L329.0 315.3L329.3 261.6L329.6 365.7L329.9 257.1L330.2 240.8L330.4 306.9L330.7 282.8L331.0 294.4L331.3 277.9L331.6 379.6L331.9 347.9L332.1 267.0L332.4 268.3L332.7 266.2L333.0 266.2L333.3 331.1L333.5 311.9L333.8 310.3L334.1 258.1L334.4 333.7L334.7 316.8L335.0 295.1L335.2 352.0L335.5 311.5L335.8 308.5L336.1 300.3L336.4 325.5L336.6 260.3L336.9 317.6L337.2 317.6L337.5 356.8L337.8 310.1L338.0 306.6L338.3 291.9L338.6 327.3L338.9 327.3L339.2 362.1L339.5 372.4L339.7 206.6L340.0 280.6L340.3 305.8L340.6 334.1L340.9 276.5L341.1 324.7L341.4 324.7L341.7 241.3L342.0 293.9L342.3 344.3L342.6 362.2L342.8 362.2L343.1 392.5L343.4 282.5L343.7 282.5L344.0 271.0L344.2 300.4L344.5 287.6L344.8 287.6L345.1 315.3L345.4 284.4L345.7 255.5L345.9 273.8L346.2 280.2L346.5 269.7L346.8 324.7L347.1 347.7L347.3 324.4L347.6 315.0L347.9 269.9L348.2 253.4L348.5 310.5L348.8 361.7L349.0 334.0L349.3 271.4L349.6 346.5L349.9 251.4L350.2 336.9L350.4 274.1L350.7 369.3L351.0 369.3L351.3 409.2L351.6 308.6L351.9 293.1L352.1 310.1L352.4 313.0L352.7 319.9L353.0 317.0L353.3 221.7L353.5 342.3L353.8 249.7L354.1 247.7L354.4 341.8L354.7 318.3L354.9 200.9L355.2 218.9L355.5 250.5L355.8 304.7L356.1 347.9L356.4 346.8L356.6 255.1L356.9 327.7L357.2 327.7L357.5 266.4L357.8 342.2L358.0 246.1L358.3 285.5L358.6 276.4L358.9 371.1L359.2 320.1L359.5 314.8L359.7 314.9L360.0 287.0L360.3 287.0L360.6 323.6L360.9 249.3L361.1 276.0L361.4 290.5L361.7 302.9L362.0 208.4L362.3 359.8L362.6 318.4L362.8 318.4L363.1 268.4L363.4 232.9L363.7 311.0L364.0 252.4L364.2 356.9L364.5 352.6L364.8 285.0L365.1 346.5L365.4 306.0L365.7 298.8L365.9 298.8L366.2 287.0L366.5 278.4L366.8 309.5L367.1 340.4L367.3 342.3L367.6 316.1L367.9 292.3L368.2 315.0L368.5 272.0L368.8 349.7L369.0 348.3L369.3 275.3L369.6 224.8L369.9 267.0L370.2 269.3L370.4 346.2L370.7 318.7L371.0 333.4L371.3 353.9L371.6 328.7L371.8 350.9L372.1 272.3L372.4 267.9L372.7 293.2L373.0 362.5L373.3 362.5L373.5 311.0L373.8 267.4L374.1 330.6L374.4 379.9L374.7 267.3L374.9 360.7L375.2 203.9L375.5 307.9L375.8 273.3L376.1 273.3L376.4 248.8L376.6 333.5L376.9 235.3L377.2 404.6L377.5 310.3L377.8 297.5L378.0 314.9L378.3 264.6L378.6 264.6L378.9 362.8L379.2 287.7L379.5 298.2L379.7 327.1L380.0 255.9L380.3 331.5L380.6 383.9L380.9 352.2L381.1 352.2L381.4 276.5L381.7 351.6L382.0 309.2L382.3 242.6L382.6 288.9L382.8 257.6L383.1 257.6L383.4 222.0L383.7 222.0L384.0 308.0L384.2 347.6L384.5 272.3L384.8 344.2L385.1 274.2L385.4 226.1L385.7 267.4L385.9 311.0L386.2 311.0L386.5 311.0L386.8 245.5L387.1 356.8L387.3 248.2L387.6 264.0L387.9 374.4L388.2 374.4L388.5 275.6L388.7 275.6L389.0 294.1L389.3 295.3L389.6 220.9L389.9 323.4L390.2 318.7L390.4 314.3L390.7 181.5L391.0 277.8L391.3 277.8L391.6 236.6L391.8 403.0L392.1 260.6L392.4 334.0L392.7 350.0L393.0 275.2L393.3 231.1L393.5 363.2L393.8 326.6L394.1 260.7L394.4 260.7L394.7 385.9L394.9 313.9L395.2 313.9L395.5 364.0L395.8 296.8L396.1 336.7L396.4 298.7L396.6 246.0L396.9 246.0L397.2 312.2L397.5 249.9L397.8 279.3L398.0 302.3L398.3 335.3L398.6 284.6L398.9 292.7L399.2 337.7L399.5 252.0L399.7 316.1L400.0 255.6L400.3 326.8L400.6 233.0L400.9 288.4L401.1 296.2L401.4 290.4L401.7 290.4L402.0 343.2L402.3 274.1L402.6 299.8L402.8 378.9L403.1 306.1L403.4 311.3L403.7 247.4L404.0 247.4L404.2 311.3L404.5 287.9L404.8 198.7L405.1 365.3L405.4 296.3L405.6 275.5L405.9 245.3L406.2 256.1L406.5 286.4L406.8 305.2L407.1 255.8L407.3 358.7L407.6 332.5L407.9 305.6L408.2 236.9L408.5 300.0L408.7 308.3L409.0 270.7L409.3 296.3L409.6 283.3L409.9 365.4L410.2 307.3L410.4 319.4L410.7 269.2L411.0 320.1L411.3 224.8L411.6 278.7L411.8 329.9L412.1 330.5L412.4 226.8L412.7 367.9L413.0 343.9L413.3 343.9L413.5 343.9L413.8 256.2L414.1 283.0L414.4 316.7L414.7 324.4L414.9 317.0L415.2 328.7L415.5 308.9L415.8 321.0L416.1 306.3L416.4 328.1L416.6 209.3L416.9 284.5L417.2 284.5L417.5 281.6L417.8 223.4L418.0 304.7L418.3 238.7L418.6 285.8L418.9 197.0L419.2 299.5L419.5 385.8L419.7 269.6L420.0 313.0L420.3 387.6L420.6 335.7L420.9 359.6L421.1 243.3L421.4 302.7L421.7 308.1L422.0 309.6L422.3 278.2L422.5 342.9L422.8 313.9L423.1 313.9L423.4 284.6L423.7 284.6L424.0 276.4L424.2 345.5L424.5 345.5L424.8 296.7L425.1 314.7L425.4 377.2L425.6 377.2L425.9 301.8L426.2 301.8L426.5 291.6L426.8 276.6L427.1 277.5L427.3 298.0L427.6 276.2L427.9 338.7L428.2 371.9L428.5 318.5L428.7 303.6L429.0 293.8L429.3 293.8L429.6 268.1L429.9 321.1L430.2 263.7L430.4 263.3L430.7 347.4L431.0 347.4L431.3 330.6L431.6 277.9L431.8 202.5L432.1 210.0L432.4 306.8L432.7 373.1L433.0 348.8L433.3 348.8L433.5 270.4L433.8 211.1L434.1 319.5L434.4 339.6L434.7 201.5L434.9 293.0L435.2 249.3L435.5 282.3L435.8 257.1L436.1 257.9L436.4 351.8L436.6 351.8L436.9 335.7L437.2 299.6L437.5 299.6L437.8 293.0L438.0 297.1L438.3 295.7L438.6 295.7L438.9 288.6L439.2 302.8L439.4 309.6L439.7 231.8L440.0 327.3L440.3 330.1L440.6 330.1L440.9 339.7L441.1 320.6L441.4 348.4L441.7 345.5L442.0 278.5L442.3 327.2L442.5 309.7L442.8 208.1L443.1 301.5L443.4 294.3L443.7 329.0L444.0 271.3L444.2 295.8L444.5 329.7L444.8 306.7L445.1 234.1L445.4 334.7L445.6 309.2L445.9 281.4L446.2 367.0L446.5 201.6L446.8 256.8L447.1 272.7L447.3 239.0L447.6 254.3L447.9 361.9L448.2 339.5L448.5 308.4L448.7 325.9L449.0 292.6L449.3 311.1L449.6 245.9L449.9 245.9L450.2 346.6L450.4 346.0L450.7 302.6L451.0 350.9L451.3 382.9L451.6 347.5L451.8 280.0L452.1 355.2L452.4 338.5L452.7 353.0L453.0 299.5L453.3 246.8L453.5 246.8L453.8 260.2L454.1 332.0L454.4 326.7L454.7 300.2L454.9 288.3L455.2 243.5L455.5 226.1L455.8 336.2L456.1 268.5L456.3 327.4L456.6 327.4L456.9 276.5L457.2 298.5L457.5 295.6L457.8 319.8L458.0 313.2L458.3 286.0L458.6 192.4L458.9 368.3L459.2 262.8L459.4 282.9L459.7 273.8L460.0 252.9L460.3 290.2L460.6 326.4L460.9 349.4L461.1 237.1L461.4 237.1L461.7 322.9L462.0 310.6L462.3 310.6L462.5 252.7L462.8 273.8L463.1 325.6L463.4 239.2L463.7 332.4L464.0 332.4L464.2 375.3L464.5 375.3L464.8 246.0L465.1 268.9L465.4 296.7L465.6 370.1L465.9 370.1L466.2 260.7L466.5 244.1L466.8 337.9L467.1 337.9L467.3 337.9L467.6 337.9L467.9 265.8L468.2 358.1L468.5 249.1L468.7 227.4L469.0 227.4L469.3 271.2L469.6 302.0L469.9 349.0L470.2 259.9L470.4 259.9L470.7 350.5L471.0 290.1L471.3 332.1L471.6 267.9L471.8 267.1L472.1 250.1L472.4 262.1L472.7 335.2L473.0 315.9L473.2 276.7L473.5 309.9L473.8 259.4L474.1 302.5L474.4 224.4L474.7 298.2L474.9 357.2L475.2 322.6L475.5 271.3L475.8 321.3L476.1 312.8L476.3 271.6L476.6 346.0L476.9 310.4L477.2 295.1L477.5 323.8L477.8 306.3L478.0 352.6L478.3 201.5L478.6 220.5L478.9 220.5L479.2 347.8L479.4 325.0L479.7 325.0L480.0 372.8L480.3 284.3L480.6 364.3L480.9 364.3L481.1 218.9L481.4 303.3L481.7 299.8L482.0 359.1L482.3 239.0L482.5 261.6L482.8 308.0L483.1 276.2L483.4 276.2L483.7 361.4L484.0 226.4L484.2 295.8L484.5 240.5L484.8 318.6L485.1 373.4L485.4 373.4L485.6 311.1L485.9 311.1L486.2 288.4L486.5 289.9L486.8 260.0L487.1 304.4L487.3 270.7L487.6 337.6L487.9 329.1L488.2 270.8L488.5 376.3L488.7 274.6L489.0 285.8L489.3 279.8L489.6 289.7L489.9 312.7L490.1 312.7L490.4 302.1L490.7 250.2L491.0 283.4L491.3 283.4L491.6 319.6L491.8 275.8L492.1 288.6L492.4 264.0L492.7 244.5L493.0 314.5L493.2 441.5L493.5 235.6L493.8 263.4L494.1 252.2L494.4 284.2L494.7 257.5L494.9 311.7L495.2 285.1L495.5 264.8L495.8 372.9L496.1 271.4L496.3 285.4L496.6 380.3L496.9 279.8L497.2 287.5L497.5 395.3L497.8 395.3L498.0 395.3L498.3 263.3L498.6 263.3L498.9 307.1L499.2 320.3L499.4 320.3L499.7 277.2L500.0 277.2L500.3 250.3L500.6 257.9L500.9 248.9L501.1 292.0L501.4 292.0L501.7 287.7L502.0 294.6L502.3 366.9L502.5 255.0L502.8 303.8L503.1 270.3L503.4 239.2L503.7 307.5L504.0 266.4L504.2 269.7L504.5 272.3L504.8 237.9L505.1 300.1L505.4 255.8L505.6 329.2L505.9 329.2L506.2 253.6L506.5 305.8L506.8 340.7L507.0 341.4L507.3 285.1L507.6 276.7L507.9 365.1L508.2 305.3L508.5 307.1L508.7 306.9L509.0 282.2L509.3 271.2L509.6 311.7L509.9 239.4L510.1 239.4L510.4 248.9L510.7 248.9L511.0 335.3L511.3 307.4L511.6 330.8L511.8 413.2L512.1 307.1L512.4 315.2L512.7 378.3L513.0 378.3L513.2 323.2L513.5 240.1L513.8 315.6L514.1 316.1L514.4 351.7L514.7 351.7L514.9 351.7L515.2 272.2L515.5 325.3L515.8 252.1L516.1 310.3L516.3 315.7L516.6 229.9L516.9 234.1L517.2 269.4L517.5 279.2L517.8 288.2L518.0 361.1L518.3 335.0L518.6 403.1L518.9 302.9L519.2 297.5L519.4 251.7L519.7 270.5L520.0 252.9L520.3 394.6L520.6 394.6L520.9 295.1L521.1 322.4L521.4 322.4L521.7 327.1L522.0 275.5L522.3 275.5L522.5 256.9L522.8 256.9L523.1 256.9L523.4 256.9L523.7 273.0L523.9 375.7L524.2 375.7L524.5 293.0L524.8 330.5L525.1 295.2L525.4 373.8L525.6 365.8L525.9 362.4L526.2 268.8L526.5 277.3L526.8 296.9L527.0 255.7L527.3 269.3L527.6 384.6L527.9 255.4L528.2 304.5L528.5 361.0L528.7 280.6L529.0 302.3L529.3 199.6L529.6 277.9L529.9 253.6L530.1 253.6L530.4 285.6L530.7 230.7L531.0 230.7L531.3 330.9L531.6 310.1L531.8 326.7L532.1 349.4L532.4 272.0L532.7 246.0L533.0 211.3L533.2 268.5L533.5 284.5L533.8 312.2L534.1 307.4L534.4 358.0L534.7 300.5L534.9 299.5L535.2 365.2L535.5 353.8L535.8 305.8L536.1 310.0L536.3 286.0L536.6 314.2L536.9 321.4L537.2 239.3L537.5 309.2L537.8 294.7L538.0 379.5L538.3 300.7L538.6 354.2L538.9 277.5L539.2 314.1L539.4 225.5L539.7 295.1L540.0 265.4L540.3 332.1L540.6 324.0L540.8 320.2L541.1 320.2L541.4 320.2L541.7 303.5L542.0 247.1L542.3 282.2L542.5 276.9L542.8 220.6L543.1 220.6L543.4 265.0L543.7 275.9L543.9 292.0L544.2 343.6L544.5 255.3L544.8 255.3L545.1 356.1L545.4 311.9L545.6 312.6L545.9 306.0L546.2 258.1L546.5 244.2L546.8 333.2L547.0 270.8L547.3 350.2L547.6 304.9L547.9 339.2L548.2 322.1L548.5 252.6L548.7 252.6L549.0 252.6L549.3 343.8L549.6 288.3L549.9 184.0L550.1 342.5L550.4 342.5L550.7 302.4L551.0 243.4L551.3 207.5L551.6 282.4L551.8 282.4L552.1 290.3L552.4 270.5L552.7 270.5L553.0 270.5L553.2 334.3L553.5 286.3L553.8 348.8L554.1 348.8L554.4 266.6L554.7 266.6L554.9 260.5L555.2 294.3L555.5 255.1L555.8 342.5L556.1 342.5L556.3 296.6L556.6 215.2L556.9 215.2L557.2 215.2L557.5 215.2L557.7 260.9L558.0 332.7L558.3 243.2L558.6 344.0L558.9 268.9L559.2 279.6L559.4 266.4L559.7 333.4L560.0 316.2L560.3 290.1L560.6 339.1L560.8 339.1L561.1 285.4L561.4 285.4L561.7 178.9L562.0 341.4L562.3 299.2L562.5 269.2L562.8 266.2L563.1 221.5L563.4 279.8L563.7 231.0L563.9 332.9L564.2 332.9L564.5 285.4L564.8 285.4L565.1 266.6L565.4 346.8L565.6 265.7L565.9 270.8L566.2 270.8L566.5 260.4L566.8 260.4L567.0 333.1L567.3 285.2L567.6 285.2L567.9 316.4L568.2 279.8L568.5 292.7L568.7 292.7L569.0 292.7L569.3 292.1L569.6 292.1L569.9 298.6L570.1 360.1L570.4 252.4L570.7 388.6L571.0 388.6L571.3 270.8L571.6 221.7L571.8 221.7L572.1 272.4L572.4 295.5L572.7 312.9L573.0 285.8L573.2 241.3L573.5 308.0L573.8 323.7L574.1 328.5L574.4 235.9L574.6 301.8L574.9 328.7L575.2 328.7L575.5 303.9L575.8 303.9L576.1 227.8L576.3 288.5L576.6 346.4L576.9 245.7L577.2 329.5L577.5 285.9L577.7 255.4L578.0 282.5L578.3 366.9L578.6 267.4L578.9 344.7L579.2 332.6L579.4 292.3L579.7 356.0L580.0 361.6L580.3 246.5L580.6 390.0L580.8 253.1L581.1 279.4L581.4 311.8L581.7 281.1L582.0 248.0L582.3 358.8L582.5 304.9L582.8 318.2L583.1 249.8L583.4 221.2L583.7 265.3L583.9 333.5L584.2 296.7L584.5 242.3L584.8 271.9L585.1 326.7L585.4 281.5L585.6 262.5L585.9 292.4L586.2 350.7L586.5 216.2L586.8 311.3L587.0 306.3L587.3 335.4L587.6 326.6L587.9 328.6L588.2 251.5L588.5 251.5L588.7 251.5L589.0 286.4L589.3 323.5L589.6 230.1L589.9 253.1L590.1 253.1L590.4 358.2L590.7 362.5L591.0 362.5L591.3 303.8L591.5 264.6L591.8 295.6L592.1 273.5L592.4 297.8L592.7 297.8L593.0 299.3L593.2 335.6L593.5 259.8L593.8 270.9L594.1 270.3L594.4 276.7L594.6 366.6L594.9 292.3L595.2 269.9L595.5 351.1L595.8 287.7L596.1 368.9L596.3 352.0L596.6 285.1L596.9 285.1L597.2 372.6L597.5 333.5L597.7 293.5L598.0 299.4L598.3 279.5L598.6 392.3L598.9 267.5L599.2 348.6L599.4 288.7L599.7 288.7L600.0 309.7L600.3 296.9L600.6 262.1L600.8 267.4L601.1 239.3L601.4 309.4L601.7 353.4L602.0 360.1L602.3 360.1L602.5 279.8L602.8 304.4L603.1 304.4L603.4 304.4L603.7 286.6L603.9 198.6L604.2 324.2L604.5 416.3L604.8 367.6L605.1 283.7L605.4 271.4L605.6 290.0L605.9 289.5L606.2 300.7L606.5 300.7L606.8 338.2L607.0 335.5L607.3 328.5L607.6 319.4L607.9 383.8L608.2 316.5L608.4 324.8L608.7 306.0L609.0 225.1L609.3 342.1L609.6 259.9L609.9 259.9L610.1 384.8L610.4 237.6L610.7 253.5L611.0 253.5L611.3 292.3L611.5 246.3L611.8 213.9L612.1 301.3L612.4 282.9L612.7 312.0L613.0 332.0L613.2 307.8L613.5 313.0L613.8 292.0L614.1 321.9L614.4 249.9L614.6 298.5L614.9 295.2L615.2 295.2L615.5 236.7L615.8 304.9L616.1 272.5L616.3 305.2L616.6 215.9L616.9 308.4L617.2 260.6L617.5 263.2L617.7 299.1L618.0 299.1L618.3 292.9L618.6 317.1L618.9 387.7L619.2 343.5L619.4 343.5L619.7 324.6L620.0 324.6L620.3 320.7L620.6 282.4L620.8 253.1L621.1 303.4L621.4 396.9L621.7 396.9L622.0 303.6L622.3 316.0L622.5 316.0L622.8 229.9L623.1 266.9L623.4 266.9L623.7 351.9L623.9 309.2L624.2 305.8L624.5 257.7L624.8 251.1L625.1 251.1L625.3 358.2L625.6 333.6L625.9 333.6L626.2 325.0L626.5 253.2L626.8 247.1L627.0 307.6L627.3 296.5L627.6 262.1L627.9 266.3L628.2 236.2L628.4 270.0L628.7 312.4L629.0 294.9L629.3 369.4L629.6 248.4L629.9 270.6L630.1 334.9L630.4 242.0L630.7 328.5L631.0 317.0L631.3 317.0L631.5 317.0L631.8 306.3L632.1 308.2L632.4 287.1L632.7 347.7L633.0 314.2L633.2 314.2L633.5 314.2L633.8 315.5L634.1 330.4L634.4 330.4L634.6 233.2L634.9 338.1L635.2 242.1L635.5 265.5L635.8 256.6L636.1 223.3L636.3 306.4L636.6 302.6L636.9 244.8L637.2 347.5L637.5 275.7L637.7 275.3L638.0 275.3L638.3 309.8L638.6 241.1L638.9 303.5L639.2 303.6L639.4 253.8L639.7 306.7L640.0 278.1L640.3 319.5L640.6 319.5L640.8 306.8L641.1 304.8L641.4 330.7L641.7 233.4L642.0 233.4L642.2 347.5L642.5 347.5L642.8 240.9L643.1 302.7L643.4 291.2L643.7 310.5L643.9 304.8L644.2 275.6L644.5 289.3L644.8 330.7L645.1 300.6L645.3 300.6L645.6 300.6L645.9 263.1L646.2 263.1L646.5 356.7L646.8 273.4L647.0 252.4L647.3 297.2L647.6 297.2L647.9 297.2L648.2 265.1L648.4 278.4L648.7 236.0L649.0 236.0L649.3 278.8L649.6 282.2L649.9 282.5L650.1 308.7L650.4 312.0L650.7 230.8L651.0 305.2L651.3 299.8L651.5 347.4L651.8 276.3L652.1 385.2L652.4 317.3L652.7 272.4L653.0 335.0L653.2 241.7L653.5 269.4L653.8 356.1L654.1 236.6L654.4 315.7L654.6 268.0L654.9 268.0L655.2 299.5L655.5 259.5L655.8 336.4L656.1 339.7L656.3 340.4L656.6 314.9L656.9 349.2L657.2 311.4L657.5 317.8L657.7 287.9L658.0 302.2L658.3 297.8L658.6 297.8L658.9 339.5L659.1 263.7L659.4 272.4L659.7 304.0L660.0 312.9L660.3 260.9L660.6 352.2L660.8 299.1L661.1 281.0L661.4 332.0L661.7 251.9L662.0 251.9L662.2 280.9L662.5 204.8L662.8 326.1L663.1 297.8L663.4 305.2L663.7 263.3L663.9 340.8L664.2 253.7L664.5 363.2L664.8 363.2L665.1 318.9L665.3 327.7L665.6 226.3L665.9 278.3L666.2 257.2L666.5 273.9L666.8 412.7L667.0 218.9L667.3 218.9L667.6 393.2L667.9 287.2L668.2 287.2L668.4 251.1L668.7 306.5L669.0 296.9L669.3 318.1L669.6 347.6L669.9 347.6L670.1 347.6L670.4 247.1L670.7 311.8L671.0 303.0L671.3 280.2L671.5 309.3L671.8 362.8L672.1 352.4L672.4 361.1L672.7 338.0L673.0 321.7L673.2 307.5L673.5 376.3L673.8 328.5L674.1 282.8L674.4 220.1L674.6 338.3L674.9 295.5L675.2 283.2L675.5 331.6L675.8 350.2L676.0 274.4L676.3 341.3L676.6 341.3L676.9 239.1L677.2 334.5L677.5 295.1L677.7 295.1L678.0 234.5L678.3 349.6L678.6 297.9L678.9 301.1L679.1 235.0L679.4 368.1L679.7 307.5L680.0 307.5L680.3 273.4L680.6 280.8L680.8 284.0L681.1 301.3L681.4 303.0L681.7 319.4L682.0 319.4L682.2 222.4L682.5 267.7L682.8 193.8L683.1 254.2L683.4 254.2L683.7 258.2L683.9 264.2L684.2 264.2L684.5 295.6L684.8 295.6L685.1 295.6L685.3 350.9L685.6 294.6L685.9 371.7L686.2 274.4L686.5 268.6L686.8 298.7L687.0 284.3L687.3 325.3L687.6 297.9L687.9 320.4L688.2 319.2L688.4 370.5L688.7 370.5L689.0 262.0L689.3 352.9L689.6 352.5L689.9 314.5L690.1 320.2L690.4 227.6L690.7 227.6L691.0 267.1L691.3 256.3L691.5 265.3L691.8 265.3L692.1 294.5L692.4 336.8L692.7 336.3L692.9 309.0L693.2 334.3L693.5 201.1L693.8 294.4L694.1 323.9L694.4 323.9L694.6 326.0L694.9 202.4L695.2 307.1L695.5 331.4L695.8 331.4L696.0 366.0L696.3 272.5L696.6 260.1L696.9 243.4L697.2 326.0L697.5 355.3L697.7 394.4L698.0 268.5L698.3 320.9L698.6 270.9L698.9 261.6L699.1 221.0L699.4 286.1L699.7 253.2L700.0 289.5L700.3 302.7L700.6 290.3L700.8 290.3L701.1 336.9L701.4 278.7L701.7 331.0L702.0 286.3L702.2 408.9L702.5 286.1L702.8 308.3L703.1 285.7L703.4 252.4L703.7 252.4L703.9 291.9L704.2 330.1L704.5 303.9L704.8 303.9L705.1 225.8L705.3 225.8L705.6 288.0L705.9 270.7L706.2 266.1L706.5 268.0L706.8 337.5L707.0 287.0L707.3 253.2L707.6 253.2L707.9 303.0L708.2 320.2L708.4 259.3L708.7 307.7L709.0 293.9L709.3 223.1L709.6 269.0L709.8 281.4L710.1 311.8L710.4 307.1L710.7 266.8L711.0 257.2L711.3 285.9L711.5 227.8L711.8 352.8L712.1 288.4L712.4 271.2L712.7 228.5L712.9 261.7L713.2 322.0L713.5 289.2L713.8 298.9L714.1 354.9L714.4 278.9L714.6 278.9L714.9 281.3L715.2 278.1L715.5 301.0L715.8 352.9L716.0 295.9L716.3 288.2L716.6 328.1L716.9 292.0L717.2 294.9L717.5 270.5L717.7 209.3L718.0 339.2L718.3 319.1L718.6 268.4L718.9 297.2L719.1 300.6L719.4 280.3L719.7 267.0L720.0 294.8L720.3 342.2L720.6 342.2L720.8 357.8L721.1 357.8L721.4 293.1L721.7 288.9L722.0 245.3L722.2 241.2L722.5 241.2L722.8 318.2L723.1 248.0L723.4 248.0L723.7 286.7L723.9 309.2L724.2 329.2L724.5 355.4L724.8 302.7L725.1 340.9L725.3 340.9L725.6 386.0L725.9 386.0L726.2 264.2L726.5 318.8L726.7 307.3L727.0 291.3L727.3 307.7L727.6 360.3L727.9 280.8L728.2 201.0L728.4 231.9L728.7 297.1L729.0 300.6L729.3 266.0L729.6 336.6L729.8 349.9L730.1 257.6L730.4 305.5L730.7 292.6L731.0 356.7L731.3 317.3L731.5 338.4L731.8 270.1L732.1 265.5L732.4 277.4L732.7 395.6L732.9 317.4L733.2 238.2L733.5 238.2L733.8 341.6L734.1 309.0L734.4 309.0L734.6 286.7L734.9 315.4L735.2 284.6L735.5 244.0L735.8 300.4L736.0 300.4L736.3 238.5L736.6 238.5L736.9 306.1L737.2 269.4L737.5 251.9L737.7 322.7L738.0 277.6L738.3 264.9L738.6 337.6L738.9 271.8L739.1 281.3L739.4 322.4L739.7 261.0L740.0 278.9L740.3 286.0L740.6 241.0L740.8 291.9L741.1 375.1L741.4 231.4L741.7 333.6L742.0 337.3L742.2 324.4L742.5 327.6L742.8 290.3L743.1 349.7L743.4 330.8L743.6 282.9L743.9 286.4L744.2 323.7L744.5 295.3L744.8 271.8L745.1 286.0L745.3 300.7L745.6 274.0L745.9 233.3L746.2 255.6L746.5 250.8L746.7 305.6L747.0 283.9L747.3 330.9L747.6 275.9L747.9 271.0L748.2 234.4L748.4 266.9L748.7 238.5L749.0 336.6L749.3 272.2L749.6 278.5L749.8 243.6L750.1 335.7L750.4 278.0L750.7 275.8L751.0 292.4L751.3 310.2L751.5 301.8L751.8 301.8L752.1 278.6L752.4 274.3L752.7 348.3L752.9 265.8L753.2 265.8L753.5 226.7L753.8 252.8L754.1 252.8L754.4 282.6L754.6 266.3L754.9 233.6L755.2 323.9L755.5 323.9L755.8 272.6L756.0 272.6L756.3 272.6L756.6 270.1L756.9 272.1L757.2 315.3L757.5 281.1L757.7 304.4L758.0 314.3L758.3 312.6L758.6 313.3L758.9 280.2L759.1 280.2L759.4 251.7L759.7 263.1L760.0 303.6L760.3 327.6L760.5 239.1L760.8 314.4L761.1 321.9L761.4 321.9L761.7 234.8L762.0 343.0L762.2 326.9L762.5 258.6L762.8 261.7L763.1 320.8L763.4 319.4L763.6 301.6L763.9 321.1L764.2 246.3L764.5 246.3L764.8 307.3L765.1 307.3L765.3 307.3L765.6 221.3L765.9 221.3L766.2 326.2L766.5 296.1L766.7 276.4L767.0 296.2L767.3 296.2L767.6 327.6L767.9 293.0L768.2 293.0L768.4 293.0L768.7 345.0L769.0 345.0L769.3 360.8L769.6 297.9L769.8 305.7L770.1 362.2L770.4 362.2L770.7 293.0L771.0 293.0L771.3 336.9L771.5 388.5L771.8 381.5L772.1 311.3L772.4 282.8L772.7 282.8L772.9 328.2L773.2 261.6L773.5 273.6L773.8 294.9L774.1 266.4L774.4 223.2L774.6 324.9L774.9 237.7L775.2 253.6L775.5 253.6L775.8 328.9L776.0 307.1L776.3 316.5L776.6 316.5L776.9 343.2L777.2 322.5L777.4 261.5L777.7 324.4L778.0 324.4L778.3 290.9L778.6 292.6L778.9 320.8L779.1 285.6L779.4 354.7L779.7 287.9L780.0 319.7L780.3 309.2L780.5 293.4L780.8 317.6L781.1 272.7L781.4 307.7L781.7 296.5L782.0 323.9L782.2 329.1L782.5 307.8L782.8 301.0L783.1 370.0L783.4 314.7L783.6 308.3L783.9 318.9L784.2 283.0L784.5 317.4L784.8 273.4L785.1 397.6L785.3 306.4L785.6 294.5L785.9 268.4L786.2 306.6L786.5 275.6L786.7 281.1L787.0 281.1L787.3 301.2L787.6 282.1L787.9 329.2L788.2 250.3L788.4 369.3L788.7 369.3L789.0 369.3L789.3 286.1L789.6 277.3L789.8 277.3L790.1 310.1L790.4 331.5L790.7 274.0L791.0 304.4L791.3 327.9L791.5 243.3L791.8 169.5L792.1 319.6L792.4 268.3L792.7 318.8L792.9 346.5L793.2 291.2L793.5 322.7L793.8 271.5L794.1 371.0L794.3 320.4L794.6 257.4L794.9 280.9L795.2 266.2L795.5 290.5L795.8 290.5L796.0 305.5L796.3 263.8L796.6 269.5L796.9 347.1L797.2 340.9L797.4 347.0L797.7 291.1L798.0 291.1L798.3 264.8L798.6 259.5L798.9 290.3L799.1 308.3L799.4 354.4L799.7 229.9L800.0 322.1L800.3 322.1L800.5 322.1L800.8 274.4L801.1 274.4L801.4 274.4L801.7 267.2L802.0 376.5L802.2 322.0L802.5 299.2L802.8 331.2L803.1 400.8L803.4 334.3L803.6 312.4L803.9 256.3L804.2 300.7L804.5 364.4L804.8 364.4L805.1 339.7L805.3 330.7L805.6 270.9L805.9 333.0L806.2 247.2L806.5 316.3L806.7 341.2L807.0 256.4L807.3 379.3L807.6 228.0L807.9 319.2L808.2 366.4L808.4 366.4L808.7 214.8L809.0 418.5L809.3 364.5L809.6 367.6L809.8 367.6L810.1 349.4L810.4 350.3L810.7 279.7L811.0 279.7L811.2 338.5L811.5 324.0L811.8 290.3L812.1 396.7L812.4 396.7L812.7 230.3L812.9 292.2L813.2 319.9L813.5 269.3L813.8 331.8L814.1 285.3L814.3 322.4L814.6 335.8L814.9 357.7L815.2 357.7L815.5 270.0L815.8 289.9L816.0 316.4L816.3 362.8L816.6 387.0L816.9 290.9L817.2 326.9L817.4 268.3L817.7 210.6L818.0 210.6L818.3 286.6L818.6 286.6L818.9 369.5L819.1 286.7L819.4 286.7L819.7 286.7L820.0 322.2L820.3 357.4L820.5 357.4L820.8 197.3L821.1 197.3L821.4 297.2L821.7 276.9L822.0 258.0L822.2 330.7L822.5 330.7L822.8 349.8L823.1 300.6L823.4 375.3L823.6 328.5L823.9 342.5L824.2 276.8L824.5 408.8L824.8 408.8L825.1 304.3L825.3 310.8L825.6 331.9L825.9 237.7L826.2 204.8L826.5 307.1L826.7 255.7L827.0 296.4L827.3 297.7L827.6 318.4L827.9 250.6L828.1 280.8L828.4 265.3L828.7 372.7L829.0 277.4L829.3 296.0L829.6 321.9L829.8 280.7L830.1 301.7L830.4 300.8L830.7 281.1L831.0 295.4L831.2 249.1L831.5 253.7L831.8 330.1L832.1 266.8L832.4 294.6L832.7 311.8L832.9 281.9L833.2 215.0L833.5 346.2L833.8 310.2L834.1 266.9L834.3 251.4L834.6 251.4L834.9 332.8L835.2 215.1L835.5 294.2L835.8 294.2L836.0 286.6L836.3 312.3L836.6 305.8L836.9 244.2L837.2 244.2L837.4 295.4L837.7 256.3L838.0 333.7L838.3 352.5L838.6 308.9L838.9 294.8L839.1 308.5L839.4 309.2L839.7 290.3L840.0 333.1L840.3 261.7L840.5 281.8L840.8 262.9L841.1 303.5L841.4 303.5L841.7 376.8L842.0 316.9L842.2 314.8L842.5 280.4L842.8 237.2L843.1 329.0L843.4 205.4L843.6 270.9L843.9 241.1L844.2 333.6L844.5 349.0L844.8 324.2L845.0 324.2L845.3 339.7L845.6 339.7L845.9 237.1L846.2 336.7L846.5 363.1L846.7 347.8L847.0 269.1L847.3 288.1L847.6 354.4L847.9 194.1L848.1 377.7L848.4 306.7L848.7 298.5L849.0 269.9L849.3 300.4L849.6 343.8L849.8 341.2L850.1 354.7L850.4 213.8L850.7 364.1L851.0 396.0L851.2 333.7L851.5 333.7L851.8 338.3L852.1 328.9L852.4 285.1L852.7 251.0L852.9 357.1L853.2 267.8L853.5 354.9L853.8 353.5L854.1 295.6L854.3 319.6L854.6 296.3L854.9 296.3L855.2 328.8L855.5 271.2L855.8 271.2L856.0 305.5L856.3 290.7L856.6 278.8L856.9 335.0L857.2 290.6L857.4 357.1L857.7 281.6L858.0 279.3L858.3 288.9L858.6 288.9L858.9 288.9L859.1 287.3L859.4 291.6L859.7 377.3L860.0 336.5L860.3 336.5L860.5 270.8L860.8 309.3L861.1 267.8L861.4 326.5L861.7 326.5L861.9 318.9L862.2 306.2L862.5 299.6L862.8 319.0L863.1 319.0L863.4 267.3L863.6 309.3L863.9 304.8L864.2 286.4L864.5 301.9L864.8 245.8L865.0 245.8L865.3 266.4L865.6 316.8L865.9 326.5L866.2 386.2L866.5 386.2L866.7 336.7L867.0 271.5L867.3 271.5L867.6 379.0L867.9 360.7L868.1 246.7L868.4 307.0L868.7 307.0L869.0 302.9L869.3 317.1L869.6 317.1L869.8 239.7L870.1 293.3L870.4 288.9L870.7 333.5L871.0 294.0L871.2 235.4L871.5 235.4L871.8 290.0L872.1 280.2L872.4 280.2L872.7 326.8L872.9 326.8L873.2 196.4L873.5 308.6L873.8 346.7L874.1 271.4L874.3 254.0L874.6 360.2L874.9 177.4L875.2 256.2L875.5 256.2L875.8 256.3L876.0 268.2L876.3 268.2L876.6 268.2L876.9 259.1L877.2 260.1L877.4 271.0L877.7 279.7L878.0 300.6L878.3 266.5L878.6 359.5L878.8 296.9L879.1 272.1L879.4 278.0L879.7 295.2L880.0 288.3L880.3 280.7L880.5 312.2L880.8 312.2L881.1 255.0L881.4 267.5L881.7 267.5L881.9 374.6L882.2 323.9L882.5 323.9L882.8 323.9L883.1 328.8L883.4 272.1L883.6 281.8L883.9 244.5L884.2 244.5L884.5 234.8L884.8 278.2L885.0 269.9L885.3 332.8L885.6 332.8L885.9 265.2L886.2 232.0L886.5 267.9L886.7 267.9L887.0 297.9L887.3 297.9L887.6 275.5L887.9 275.5L888.1 292.9L888.4 295.3L888.7 320.3L889.0 319.7L889.3 339.7L889.6 336.1L889.8 377.6L890.1 344.6L890.4 344.6L890.7 344.6L891.0 240.5L891.2 348.7L891.5 364.1L891.8 278.1L892.1 278.1L892.4 300.2L892.7 187.7L892.9 322.1L893.2 309.1L893.5 283.6L893.8 299.0L894.1 334.5L894.3 262.4L894.6 268.2L894.9 311.1L895.2 341.0L895.5 277.5L895.7 360.6L896.0 280.6L896.3 254.0L896.6 330.0L896.9 253.9L897.2 305.0L897.4 306.3L897.7 306.3L898.0 306.3L898.3 326.9L898.6 210.4L898.8 254.2L899.1 371.3L899.4 284.9L899.7 316.4L900.0 341.6L900.3 361.4L900.5 288.3L900.8 313.1L901.1 284.5L901.4 313.4L901.7 304.9L901.9 226.2L902.2 224.4L902.5 224.4L902.8 239.7L903.1 357.0L903.4 266.9L903.6 281.7L903.9 364.5L904.2 257.0L904.5 328.4L904.8 255.6L905.0 370.6L905.3 324.9L905.6 234.4L905.9 371.1L906.2 350.9L906.5 308.0L906.7 235.5L907.0 331.8L907.3 254.0L907.6 339.9L907.9 339.9L908.1 366.8L908.4 335.8L908.7 343.6L909.0 306.9L909.3 321.8L909.6 276.9L909.8 339.4L910.1 203.2L910.4 302.2L910.7 258.4L911.0 281.1L911.2 302.4L911.5 286.9L911.8 271.0L912.1 235.8L912.4 235.8L912.6 315.3L912.9 371.9L913.2 235.3L913.5 249.2L913.8 257.5L914.1 269.4L914.3 289.1L914.6 294.0L914.9 335.6L915.2 272.2L915.5 339.8L915.7 330.1L916.0 281.6L916.3 294.4L916.6 236.1L916.9 282.6L917.2 282.6L917.4 244.0L917.7 262.2L918.0 262.2L918.3 330.8L918.6 230.0L918.8 284.8L919.1 326.9L919.4 326.9L919.7 333.3L920.0 323.7L920.3 280.3L920.5 245.5L920.8 341.2L921.1 350.6L921.4 259.9L921.7 296.2L921.9 220.6L922.2 252.4L922.5 327.8L922.8 263.3L923.1 261.1L923.4 329.8L923.6 315.4L923.9 316.2L924.2 360.0L924.5 360.0L924.8 330.2L925.0 365.5L925.3 305.5L925.6 305.5L925.9 189.4L926.2 234.5L926.5 297.0L926.7 312.2L927.0 278.2L927.3 267.9L927.6 308.1L927.9 256.1L928.1 281.8L928.4 315.5L928.7 376.8L929.0 339.9L929.3 355.5L929.5 284.5L929.8 299.0L930.1 232.1L930.4 308.2L930.7 301.6L931.0 279.9L931.2 250.3L931.5 344.5L931.8 220.4L932.1 220.4L932.4 293.4L932.6 293.4L932.9 367.3L933.2 332.2L933.5 285.0L933.8 242.6L934.1 314.4L934.3 314.4L934.6 298.6L934.9 316.0L935.2 266.5L935.5 319.8L935.7 353.5L936.0 353.5L936.3 353.5L936.6 339.5L936.9 339.5L937.2 310.5L937.4 351.4L937.7 315.1L938.0 353.6L938.3 364.1L938.6 364.1L938.8 391.6L939.1 286.9L939.4 261.2L939.7 280.4L940.0 268.8L940.3 268.8L940.5 347.3L940.8 267.3L941.1 289.7L941.4 344.1L941.7 336.5L941.9 264.7L942.2 279.6L942.5 279.6L942.8 294.9L943.1 327.9L943.4 327.9L943.6 241.9L943.9 300.4L944.2 269.4L944.5 333.5L944.8 344.2L945.0 267.9L945.3 234.7L945.6 269.8L945.9 231.7L946.2 250.5L946.4 216.1L946.7 279.1L947.0 289.1L947.3 288.7L947.6 248.4L947.9 215.9L948.1 292.2L948.4 317.9L948.7 306.8L949.0 374.6L949.3 287.6L949.5 318.1L949.8 351.8L950.1 280.7L950.4 241.5L950.7 348.9L951.0 278.3L951.2 310.8L951.5 326.0L951.8 325.3L952.1 208.5L952.4 345.8L952.6 237.9L952.9 363.3L953.2 277.9L953.5 355.0L953.8 285.5L954.1 264.6L954.3 270.3L954.6 298.1L954.9 311.6L955.2 260.1L955.5 385.6L955.7 385.6L956.0 331.5L956.3 210.5L956.6 347.5L956.9 192.9L957.2 192.9L957.4 339.4L957.7 339.2L958.0 308.1L958.3 351.9L958.6 340.5L958.8 301.9L959.1 237.3L959.4 319.0L959.7 296.7L960.0 296.7L960.3 259.4L960.5 250.0L960.8 326.2L961.1 280.6L961.4 289.6L961.7 289.6L961.9 289.6L962.2 360.5L962.5 360.5L962.8 360.5L963.1 250.1L963.3 341.4L963.6 281.9L963.9 281.9L964.2 281.9L964.5 287.5L964.8 376.6L965.0 320.7L965.3 320.9L965.6 322.1L965.9 293.5L966.2 327.6L966.4 279.0L966.7 279.0L967.0 308.3L967.3 233.3L967.6 215.3L967.9 324.1L968.1 324.1L968.4 324.1L968.7 343.3L969.0 238.0L969.3 284.5L969.5 361.3L969.8 299.6L970.1 244.1L970.4 283.2L970.7 272.0L971.0 357.4L971.2 300.6L971.5 387.6L971.8 387.6L972.1 215.3L972.4 267.1L972.6 323.9L972.9 288.4L973.2 319.3L973.5 306.6L973.8 280.5L974.1 271.6L974.3 291.5L974.6 329.2L974.9 349.7L975.2 322.0L975.5 312.6L975.7 276.5L976.0 312.0L976.3 294.4L976.6 244.0L976.9 296.6L977.2 296.6L977.4 292.7L977.7 311.3L978.0 317.7L978.3 249.5L978.6 278.2L978.8 249.2L979.1 207.5L979.4 218.2L979.7 285.3L980.0 285.3L980.2 280.8L980.5 283.7L980.8 247.2L981.1 336.4L981.4 309.8L981.7 313.8L981.9 290.7L982.2 240.0L982.5 267.0L982.8 304.5L983.1 304.5L983.3 278.1L983.6 348.5L983.9 348.5L984.2 278.9L984.5 255.0L984.8 323.0L985.0 323.6L985.3 314.6L985.6 314.6L985.9 299.8L986.2 205.4L986.4 308.5L986.7 281.0L987.0 309.0L987.3 205.9L987.6 383.8L987.9 320.5L988.1 217.1L988.4 358.4L988.7 296.0L989.0 240.0L989.3 314.4L989.5 376.4L989.8 321.2L990.1 358.4L990.4 255.8L990.7 288.0L991.0 296.5L991.2 264.2L991.5 336.1L991.8 310.6L992.1 248.1L992.4 302.3L992.6 324.9L992.9 294.3L993.2 292.1L993.5 259.3L993.8 330.3L994.1 262.3L994.3 292.7L994.6 302.0L994.9 230.4L995.2 230.4L995.5 269.2L995.7 292.7L996.0 262.7L996.3 262.7L996.6 381.4L996.9 381.4L997.1 255.9L997.4 306.3L997.7 310.8L998.0 303.6L998.3 351.4L998.6 281.3L998.8 262.9L999.1 302.4L999.4 282.9L999.7 310.4L1000.0 266.9L1000.2 348.6L1000.5 340.4L1000.8 340.4L1001.1 340.4L1001.4 233.5L1001.7 238.9L1001.9 293.9L1002.2 204.5L1002.5 276.6L1002.8 189.5L1003.1 377.8L1003.3 302.1L1003.6 209.0L1003.9 297.3L1004.2 280.5L1004.5 319.3L1004.8 374.7L1005.0 226.3L1005.3 318.1L1005.6 285.8L1005.9 285.8L1006.2 285.8L1006.4 281.7L1006.7 341.5L1007.0 277.0L1007.3 382.8L1007.6 382.8L1007.9 346.9L1008.1 319.1L1008.4 323.7L1008.7 295.6L1009.0 210.7L1009.3 210.7L1009.5 337.2L1009.8 281.4L1010.1 293.0L1010.4 288.3L1010.7 298.2L1011.0 339.7L1011.2 377.8L1011.5 312.1L1011.8 249.3L1012.1 444.0L1012.4 313.3L1012.6 318.7L1012.9 318.7L1013.2 339.8L1013.5 328.1L1013.8 328.1L1014.0 278.2L1014.3 287.8L1014.6 246.7L1014.9 330.5L1015.2 254.2L1015.5 263.9L1015.7 232.4L1016.0 285.0L1016.3 271.9L1016.6 300.9L1016.9 303.7L1017.1 307.6L1017.4 304.3L1017.7 304.3L1018.0 317.2L1018.3 368.2L1018.6 336.7L1018.8 256.5L1019.1 209.7L1019.4 234.5L1019.7 234.5L1020.0 300.5L1020.2 306.6L1020.5 288.9L1020.8 282.0L1021.1 263.2L1021.4 313.9L1021.7 294.4L1021.9 307.3L1022.2 307.3L1022.5 301.6L1022.8 302.9L1023.1 265.5L1023.3 279.0L1023.6 259.6L1023.9 331.9L1024.2 300.2L1024.5 306.0L1024.8 307.1L1025.0 297.2L1025.3 297.2L1025.6 297.2L1025.9 219.1L1026.2 292.4L1026.4 291.8L1026.7 288.7L1027.0 306.1L1027.3 308.3L1027.6 400.2L1027.9 267.5L1028.1 338.7L1028.4 320.4L1028.7 281.4L1029.0 263.6L1029.3 324.9L1029.5 321.9L1029.8 304.1L1030.1 254.9L1030.4 275.4L1030.7 362.7L1030.9 268.5L1031.2 310.5L1031.5 328.1L1031.8 293.4L1032.1 285.5L1032.4 350.0L1032.6 356.7L1032.9 209.3L1033.2 345.4L1033.5 285.2L1033.8 357.7L1034.0 342.9L1034.3 342.9L1034.6 205.8L1034.9 205.8L1035.2 225.6L1035.5 264.2L1035.7 302.0L1036.0 329.1L1036.3 311.0L1036.6 288.3L1036.9 293.2L1037.1 347.4L1037.4 226.5L1037.7 288.8L1038.0 277.1L1038.3 275.8L1038.6 293.8L1038.8 293.8L1039.1 368.7L1039.4 272.9L1039.7 354.2L1040.0 358.9L1040.2 346.3L1040.5 209.9L1040.8 308.2L1041.1 349.9L1041.4 380.0L1041.7 281.9L1041.9 330.5L1042.2 313.1L1042.5 231.8L1042.8 314.3L1043.1 314.3L1043.3 314.3L1043.6 333.3L1043.9 316.4L1044.2 313.2L1044.5 207.3L1044.8 291.9L1045.0 300.5L1045.3 278.7L1045.6 241.8L1045.9 241.8L1046.2 279.4L1046.4 271.5L1046.7 259.7L1047.0 310.3L1047.3 310.3L1047.6 298.6L1047.8 333.0L1048.1 376.1L1048.4 252.2L1048.7 297.3L1049.0 289.7L1049.3 265.7L1049.5 253.4L1049.8 253.4L1050.1 315.0L1050.4 342.1L1050.7 264.8L1050.9 317.0L1051.2 248.3L1051.5 329.5L1051.8 259.6L1052.1 395.9L1052.4 316.5L1052.6 389.6L1052.9 307.1L1053.2 226.8L1053.5 376.5L1053.8 312.2L1054.0 276.4L1054.3 262.7L1054.6 317.5L1054.9 289.6L1055.2 283.0L1055.5 281.0L1055.7 302.6L1056.0 249.2L1056.3 313.1L1056.6 225.8L1056.9 273.6L1057.1 330.0L1057.4 270.0L1057.7 304.2L1058.0 348.3L1058.3 233.2L1058.6 307.1L1058.8 272.0L1059.1 272.4L1059.4 364.1L1059.7 336.5L1060.0 339.1L1060.2 310.0L1060.5 251.7L1060.8 344.4L1061.1 377.2L1061.4 275.2L1061.7 334.3L1061.9 334.3L1062.2 292.3L1062.5 330.9L1062.8 331.8L1063.1 255.8L1063.3 281.1L1063.6 281.1L1063.9 258.3L1064.2 315.3L1064.5 272.6L1064.7 285.0L1065.0 310.2L1065.3 336.1L1065.6 290.6L1065.9 297.3L1066.2 297.3L1066.4 346.2L1066.7 346.2L1067.0 260.0L1067.3 238.2L1067.6 309.1L1067.8 318.0L1068.1 323.9L1068.4 317.6L1068.7 270.2L1069.0 265.1L1069.3 307.8L1069.5 288.2L1069.8 296.6L1070.1 289.9L1070.4 289.8L1070.7 255.6L1070.9 237.2L1071.2 348.2L1071.5 300.1L1071.8 279.8L1072.1 291.3L1072.4 308.9L1072.6 308.9L1072.9 353.9L1073.2 353.9L1073.5 238.5L1073.8 282.9L1074.0 284.0L1074.3 285.6L1074.6 305.8L1074.9 336.2L1075.2 386.7L1075.5 393.4L1075.7 273.9L1076.0 316.3L1076.3 257.5L1076.6 358.6L1076.9 249.0L1077.1 350.8L1077.4 231.4L1077.7 337.9L1078.0 300.0L1078.3 288.8L1078.6 351.3L1078.8 337.6L1079.1 269.5L1079.4 304.4L1079.7 273.7L1080.0 333.6L1080.2 274.0L1080.5 274.0L1080.8 275.1L1081.1 323.9L1081.4 280.3L1081.6 268.6L1081.9 272.7L1082.2 317.0L1082.5 270.3L1082.8 337.5L1083.1 333.8L1083.3 225.2L1083.6 234.4L1083.9 257.4L1084.2 292.9L1084.5 272.2L1084.7 226.8L1085.0 285.7L1085.3 311.4L1085.6 299.2L1085.9 314.9L1086.2 346.6L1086.4 295.2L1086.7 235.1L1087.0 284.1" stroke="#88bb88" />
<path d="M242.0 435.6L242.3 597.3L242.6 597.3L242.8 597.3L243.1 657.4L243.4 657.4L243.7 657.4L244.0 657.4L244.3 657.4L244.5 657.4L244.8 657.4L245.1 657.4L245.4 657.4L245.7 657.4L245.9 657.4L246.2 657.4L246.5 657.4L246.8 657.4L247.1 657.4L247.4 657.4L247.6 657.4L247.9 657.4L248.2 657.4L248.5 354.8L248.8 354.8L249.0 493.3L249.3 493.3L249.6 493.3L249.9 481.8L250.2 481.8L250.5 481.8L250.7 481.8L251.0 331.6L251.3 331.6L251.6 331.6L251.9 331.6L252.1 331.6L252.4 223.1L252.7 223.1L253.0 223.1L253.3 223.1L253.5 223.1L253.8 209.2L254.1 209.2L254.4 209.2L254.7 209.2L255.0 209.2L255.2 209.2L255.5 209.2L255.8 239.2L256.1 239.2L256.4 239.2L256.6 239.2L256.9 242.6L257.2 242.5L257.5 242.1L257.8 253.3L258.1 235.9L258.3 240.5L258.6 279.2L258.9 324.2L259.2 302.0L259.5 275.8L259.7 276.6L260.0 295.5L260.3 304.9L260.6 267.3L260.9 322.1L261.2 386.8L261.4 310.3L261.7 253.5L262.0 333.4L262.3 269.7L262.6 272.4L262.8 297.7L263.1 279.5L263.4 336.2L263.7 294.4L264.0 232.9L264.3 300.3L264.5 344.1L264.8 234.4L265.1 355.2L265.4 226.4L265.7 292.9L265.9 270.6L266.2 281.9L266.5 296.1L266.8 250.9L267.1 300.3L267.4 331.9L267.6 331.9L267.9 371.6L268.2 303.1L268.5 372.7L268.8 296.0L269.0 265.8L269.3 269.4L269.6 302.9L269.9 406.2L270.2 317.0L270.4 242.1L270.7 323.1L271.0 273.3L271.3 324.7L271.6 228.7L271.9 385.4L272.1 318.4L272.4 312.5L272.7 274.5L273.0 295.0L273.3 289.6L273.5 391.9L273.8 391.9L274.1 391.9L274.4 323.7L274.7 237.5L275.0 344.4L275.2 281.8L275.5 253.8L275.8 253.8L276.1 286.0L276.4 300.2L276.6 339.4L276.9 281.9L277.2 351.1L277.5 250.9L277.8 259.3L278.1 295.4L278.3 377.9L278.6 268.3L278.9 268.6L279.2 342.1L279.5 342.1L279.7 289.4L280.0 265.7L280.3 311.6L280.6 331.1L280.9 317.8L281.2 337.5L281.4 220.4L281.7 217.8L282.0 217.8L282.3 313.0L282.6 313.0L282.8 236.5L283.1 212.5L283.4 242.7L283.7 276.6L284.0 283.3L284.3 236.9L284.5 277.1L284.8 366.5L285.1 289.9L285.4 372.2L285.7 261.2L285.9 282.0L286.2 282.0L286.5 284.7L286.8 369.9L287.1 318.2L287.3 321.9L287.6 292.4L287.9 305.6L288.2 289.0L288.5 287.0L288.8 355.9L289.0 349.2L289.3 248.6L289.6 332.9L289.9 303.9L290.2 303.9L290.4 311.0L290.7 205.6L291.0 336.0L291.3 336.0L291.6 383.0L291.9 261.0L292.1 313.5L292.4 270.6L292.7 275.0L293.0 196.4L293.3 273.3L293.5 314.5L293.8 316.3L294.1 262.9L294.4 262.9L294.7 318.3L295.0 362.5L295.2 338.2L295.5 245.7L295.8 335.8L296.1 316.2L296.4 261.1L296.6 261.1L296.9 292.0L297.2 348.2L297.5 288.5L297.8 316.2L298.1 253.8L298.3 300.5L298.6 276.9L298.9 235.3L299.2 300.2L299.5 239.7L299.7 266.2L300.0 257.1L300.3 327.4L300.6 287.4L300.9 290.1L301.2 264.7L301.4 248.3L301.7 253.2L302.0 269.4L302.3 318.9L302.6 316.2L302.8 274.8L303.1 345.1L303.4 310.5L303.7 310.5L304.0 276.5L304.2 271.7L304.5 271.7L304.8 268.1L305.1 377.3L305.4 323.7L305.7 257.0L305.9 309.0L306.2 278.2L306.5 194.0L306.8 305.4L307.1 305.4L307.3 385.1L307.6 282.2L307.9 235.7L308.2 235.7L308.5 292.9L308.8 178.2L309.0 289.4L309.3 289.5L309.6 291.6L309.9 339.6L310.2 264.0L310.4 241.1L310.7 249.6L311.0 260.2L311.3 327.8L311.6 316.3L311.9 182.9L312.1 349.0L312.4 355.6L312.7 298.0L313.0 360.6L313.3 349.2L313.5 359.4L313.8 346.9L314.1 346.9L314.4 265.8L314.7 291.3L315.0 264.2L315.2 314.2L315.5 405.6L315.8 330.7L316.1 371.3L316.4 287.6L316.6 275.4L316.9 323.7L317.2 304.2L317.5 271.8L317.8 247.4L318.1 329.8L318.3 258.5L318.6 319.2L318.9 319.2L319.2 405.9L319.5 405.9L319.7 282.6L320.0 352.1L320.3 401.7L320.6 350.3L320.9 310.3L321.1 280.0L321.4 272.5L321.7 299.5L322.0 363.7L322.3 345.9L322.6 276.9L322.8 259.1L323.1 293.7L323.4 293.7L323.7 324.6L324.0 298.9L324.2 289.5L324.5 307.5L324.8 355.2L325.1 356.3L325.4 296.1L325.7 296.1L325.9 220.3L326.2 294.9L326.5 409.1L326.8 358.2L327.1 368.6L327.3 338.1L327.6 276.9L327.9 284.5L328.2 284.6L328.5 358.7L328.8 358.7L329.0 299.0L329.3 208.7L329.6 240.2L329.9 305.2L330.2 259.6L330.4 259.6L330.7 309.8L331.0 312.0L331.3 372.8L331.6 230.1L331.9 291.5L332.1 347.9L332.4 316.6L332.7 322.1L333.0 304.7L333.3 304.7L333.5 227.5L333.8 370.0L334.1 370.0L334.4 302.9L334.7 255.8L335.0 319.7L335.2 339.3L335.5 339.3L335.8 207.1L336.1 349.4L336.4 349.4L336.6 235.4L336.9 275.4L337.2 301.3L337.5 209.4L337.8 293.9L338.0 261.2L338.3 285.8L338.6 285.8L338.9 317.4L339.2 327.9L339.5 242.6L339.7 293.5L340.0 271.1L340.3 344.5L340.6 255.2L340.9 238.5L341.1 288.5L341.4 364.4L341.7 262.7L342.0 366.5L342.3 271.4L342.6 260.1L342.8 351.3L343.1 326.5L343.4 356.6L343.7 334.6L344.0 358.7L344.2 370.0L344.5 372.5L344.8 372.5L345.1 289.3L345.4 250.2L345.7 311.9L345.9 238.4L346.2 238.4L346.5 301.5L346.8 309.5L347.1 347.9L347.3 337.0L347.6 354.3L347.9 297.2L348.2 330.8L348.5 281.9L348.8 285.2L349.0 307.4L349.3 330.0L349.6 313.4L349.9 313.4L350.2 290.1L350.4 314.6L350.7 310.5L351.0 221.5L351.3 314.5L351.6 308.4L351.9 269.4L352.1 316.7L352.4 357.7L352.7 331.7L353.0 314.8L353.3 300.3L353.5 300.3L353.8 339.2L354.1 294.2L354.4 268.5L354.7 352.1L354.9 207.4L355.2 343.1L355.5 229.6L355.8 237.3L356.1 243.8L356.4 255.3L356.6 255.3L356.9 324.5L357.2 269.5L357.5 335.9L357.8 263.8L358.0 342.3L358.3 349.0L358.6 292.4L358.9 317.9L359.2 280.8L359.5 321.4L359.7 321.4L360.0 277.0L360.3 349.8L360.6 312.9L360.9 244.7L361.1 232.8L361.4 318.9L361.7 310.7L362.0 295.2L362.3 258.1L362.6 238.5L362.8 238.5L363.1 320.0L363.4 330.0L363.7 317.1L364.0 257.1L364.2 371.4L364.5 361.1L364.8 389.5L365.1 389.5L365.4 264.3L365.7 312.1L365.9 347.1L366.2 303.0L366.5 296.6L366.8 269.1L367.1 296.1L367.3 341.2L367.6 341.2L367.9 234.2L368.2 334.0L368.5 289.4L368.8 294.8L369.0 294.8L369.3 294.8L369.6 257.7L369.9 336.7L370.2 308.5L370.4 385.8L370.7 347.0L371.0 347.0L371.3 309.6L371.6 275.2L371.8 295.8L372.1 291.7L372.4 286.8L372.7 263.8L373.0 289.7L373.3 274.0L373.5 337.8L373.8 274.7L374.1 328.9L374.4 328.9L374.7 328.9L374.9 319.5L375.2 273.5L375.5 307.1L375.8 307.1L376.1 264.4L376.4 357.4L376.6 309.3L376.9 305.2L377.2 316.2L377.5 254.4L377.8 341.7L378.0 241.6L378.3 245.3L378.6 284.2L378.9 278.3L379.2 328.4L379.5 330.8L379.7 274.6L380.0 283.7L380.3 247.0L380.6 309.4L380.9 269.1L381.1 350.1L381.4 267.5L381.7 267.9L382.0 261.0L382.3 331.9L382.6 346.4L382.8 311.0L383.1 294.4L383.4 250.9L383.7 258.1L384.0 258.1L384.2 402.6L384.5 209.9L384.8 230.2L385.1 272.3L385.4 262.1L385.7 288.5L385.9 288.4L386.2 294.6L386.5 318.5L386.8 214.2L387.1 349.6L387.3 282.1L387.6 380.4L387.9 273.1L388.2 273.7L388.5 349.5L388.7 222.6L389.0 286.3L389.3 229.2L389.6 262.4L389.9 340.7L390.2 327.0L390.4 327.0L390.7 371.3L391.0 209.0L391.3 253.6L391.6 297.9L391.8 314.1L392.1 314.1L392.4 376.4L392.7 262.7L393.0 383.7L393.3 262.2L393.5 269.4L393.8 306.6L394.1 326.3L394.4 326.3L394.7 278.4L394.9 284.8L395.2 318.3L395.5 288.1L395.8 284.8L396.1 238.6L396.4 329.0L396.6 290.4L396.9 362.9L397.2 260.9L397.5 351.9L397.8 351.9L398.0 351.9L398.3 351.9L398.6 351.9L398.9 338.6L399.2 261.5L399.5 260.9L399.7 334.7L400.0 211.6L400.3 324.6L400.6 302.6L400.9 276.3L401.1 281.1L401.4 289.2L401.7 338.3L402.0 274.6L402.3 342.3L402.6 342.3L402.8 342.3L403.1 342.3L403.4 303.1L403.7 298.1L404.0 320.1L404.2 270.3L404.5 277.0L404.8 286.5L405.1 302.0L405.4 396.4L405.6 267.3L405.9 337.7L406.2 317.0L406.5 298.1L406.8 286.4L407.1 309.9L407.3 287.2L407.6 311.2L407.9 356.6L408.2 356.6L408.5 345.2L408.7 377.7L409.0 303.0L409.3 278.2L409.6 304.5L409.9 352.7L410.2 319.2L410.4 281.0L410.7 366.2L411.0 339.7L411.3 320.1L411.6 320.1L411.8 321.7L412.1 380.9L412.4 345.6L412.7 266.9L413.0 176.9L413.3 315.6L413.5 258.7L413.8 258.7L414.1 310.0L414.4 302.0L414.7 318.2L414.9 318.2L415.2 268.5L415.5 300.0L415.8 337.7L416.1 337.7L416.4 303.5L416.6 324.0L416.9 295.7L417.2 299.7L417.5 288.8L417.8 311.1L418.0 274.0L418.3 274.0L418.6 325.5L418.9 264.2L419.2 331.9L419.5 299.0L419.7 380.3L420.0 293.1L420.3 357.7L420.6 368.8L420.9 368.8L421.1 216.5L421.4 216.5L421.7 341.9L422.0 341.9L422.3 269.4L422.5 269.4L422.8 245.2L423.1 339.1L423.4 388.3L423.7 388.3L424.0 280.4L424.2 280.4L424.5 300.7L424.8 224.0L425.1 224.0L425.4 224.0L425.6 261.2L425.9 319.4L426.2 327.0L426.5 329.1L426.8 329.1L427.1 332.5L427.3 332.5L427.6 365.8L427.9 253.8L428.2 271.4L428.5 346.4L428.7 296.7L429.0 313.5L429.3 313.5L429.6 302.1L429.9 313.1L430.2 257.5L430.4 328.0L430.7 302.2L431.0 246.1L431.3 352.0L431.6 327.1L431.8 312.0L432.1 195.0L432.4 267.2L432.7 240.1L433.0 292.4L433.3 292.4L433.5 265.1L433.8 247.6L434.1 316.2L434.4 278.2L434.7 243.2L434.9 284.0L435.2 305.5L435.5 368.7L435.8 270.0L436.1 276.1L436.4 316.2L436.6 305.9L436.9 364.1L437.2 266.7L437.5 286.6L437.8 335.0L438.0 242.3L438.3 279.4L438.6 306.1L438.9 202.0L439.2 202.0L439.4 258.4L439.7 359.4L440.0 359.4L440.3 312.4L440.6 333.4L440.9 295.2L441.1 284.5L441.4 278.6L441.7 272.5L442.0 272.5L442.3 285.2L442.5 331.2L442.8 289.6L443.1 225.0L443.4 244.0L443.7 310.6L444.0 296.5L444.2 296.5L444.5 219.5L444.8 219.5L445.1 252.1L445.4 283.5L445.6 268.4L445.9 309.9L446.2 268.6L446.5 268.6L446.8 268.6L447.1 354.1L447.3 315.7L447.6 296.6L447.9 296.6L448.2 296.6L448.5 312.1L448.7 293.4L449.0 328.3L449.3 243.7L449.6 208.6L449.9 249.0L450.2 300.5L450.4 300.5L450.7 320.0L451.0 326.3L451.3 278.0L451.6 278.0L451.8 293.6L452.1 311.6L452.4 311.6L452.7 311.6L453.0 280.4L453.3 267.6L453.5 357.6L453.8 374.3L454.1 328.9L454.4 291.3L454.7 331.9L454.9 242.4L455.2 340.8L455.5 299.8L455.8 280.5L456.1 351.9L456.3 337.4L456.6 334.7L456.9 334.7L457.2 274.2L457.5 351.6L457.8 295.2L458.0 252.6L458.3 382.8L458.6 229.7L458.9 341.3L459.2 286.8L459.4 340.0L459.7 311.5L460.0 349.4L460.3 380.1L460.6 315.9L460.9 275.1L461.1 275.1L461.4 221.1L461.7 221.1L462.0 275.6L462.3 248.9L462.5 262.9L462.8 324.6L463.1 297.0L463.4 338.0L463.7 275.1L464.0 321.7L464.2 331.3L464.5 264.9L464.8 328.9L465.1 257.6L465.4 315.9L465.6 315.9L465.9 292.2L466.2 363.9L466.5 340.2L466.8 278.0L467.1 305.0L467.3 254.5L467.6 210.4L467.9 295.9L468.2 369.9L468.5 281.9L468.7 254.5L469.0 274.8L469.3 274.5L469.6 285.6L469.9 328.7L470.2 287.4L470.4 310.3L470.7 293.6L471.0 308.3L471.3 278.3L471.6 348.7L471.8 261.5L472.1 211.1L472.4 372.1L472.7 345.9L473.0 255.2L473.2 329.9L473.5 300.1L473.8 300.1L474.1 294.7L474.4 428.3L474.7 354.7L474.9 299.7L475.2 213.6L475.5 252.1L475.8 242.8L476.1 242.8L476.3 303.0L476.6 309.2L476.9 222.2L477.2 283.7L477.5 284.5L477.8 294.8L478.0 280.3L478.3 358.5L478.6 288.9L478.9 323.4L479.2 283.8L479.4 242.9L479.7 309.6L480.0 359.2L480.3 269.4L480.6 348.9L480.9 378.6L481.1 378.6L481.4 215.5L481.7 341.3L482.0 303.5L482.3 197.0L482.5 356.7L482.8 334.6L483.1 283.3L483.4 417.7L483.7 417.7L484.0 250.1L484.2 263.2L484.5 314.2L484.8 303.7L485.1 256.6L485.4 256.6L485.6 241.7L485.9 214.0L486.2 295.5L486.5 213.7L486.8 262.5L487.1 314.6L487.3 273.0L487.6 327.3L487.9 271.2L488.2 274.0L488.5 291.2L488.7 291.2L489.0 340.7L489.3 265.0L489.6 307.5L489.9 307.5L490.1 264.6L490.4 226.3L490.7 283.4L491.0 243.5L491.3 253.6L491.6 243.2L491.8 243.2L492.1 335.5L492.4 221.3L492.7 271.5L493.0 247.1L493.2 306.4L493.5 306.7L493.8 280.3L494.1 280.3L494.4 280.3L494.7 257.5L494.9 266.3L495.2 244.7L495.5 359.9L495.8 359.9L496.1 297.2L496.3 255.6L496.6 244.3L496.9 276.0L497.2 205.3L497.5 337.6L497.8 263.2L498.0 309.7L498.3 309.7L498.6 309.9L498.9 328.4L499.2 376.8L499.4 317.6L499.7 295.4L500.0 309.6L500.3 232.0L500.6 232.0L500.9 232.0L501.1 232.0L501.4 350.1L501.7 314.5L502.0 314.5L502.3 269.1L502.5 269.1L502.8 290.8L503.1 283.4L503.4 241.7L503.7 241.7L504.0 331.2L504.2 265.0L504.5 239.8L504.8 296.5L505.1 341.7L505.4 280.2L505.6 280.2L505.9 271.0L506.2 327.5L506.5 306.8L506.8 227.5L507.0 270.8L507.3 349.1L507.6 349.1L507.9 374.8L508.2 374.8L508.5 318.3L508.7 313.6L509.0 313.6L509.3 324.8L509.6 324.8L509.9 265.2L510.1 177.6L510.4 288.1L510.7 259.6L511.0 259.6L511.3 350.8L511.6 276.8L511.8 293.1L512.1 314.1L512.4 258.4L512.7 298.7L513.0 375.4L513.2 296.9L513.5 400.6L513.8 333.6L514.1 331.5L514.4 329.3L514.7 368.0L514.9 267.9L515.2 239.6L515.5 264.1L515.8 264.5L516.1 217.5L516.3 350.5L516.6 265.2L516.9 352.9L517.2 314.9L517.5 308.4L517.8 308.4L518.0 314.9L518.3 231.7L518.6 311.6L518.9 291.4L519.2 308.9L519.4 330.3L519.7 319.4L520.0 317.3L520.3 263.6L520.6 280.3L520.9 334.6L521.1 277.9L521.4 310.0L521.7 305.7L522.0 263.4L522.3 305.0L522.5 256.9L522.8 330.8L523.1 325.5L523.4 279.1L523.7 326.4L523.9 271.9L524.2 271.9L524.5 295.2L524.8 313.1L525.1 338.3L525.4 267.2L525.6 283.4L525.9 341.9L526.2 342.8L526.5 250.7L526.8 323.0L527.0 330.5L527.3 274.4L527.6 274.4L527.9 274.4L528.2 274.4L528.5 236.7L528.7 333.4L529.0 247.3L529.3 298.3L529.6 311.6L529.9 282.9L530.1 282.3L530.4 292.7L530.7 334.8L531.0 325.8L531.3 354.9L531.6 336.2L531.8 334.5L532.1 328.2L532.4 328.2L532.7 311.5L533.0 309.7L533.2 309.7L533.5 339.8L533.8 258.6L534.1 344.8L534.4 344.8L534.7 281.0L534.9 248.8L535.2 225.6L535.5 225.6L535.8 225.6L536.1 335.8L536.3 288.4L536.6 289.6L536.9 383.2L537.2 289.3L537.5 369.3L537.8 306.4L538.0 344.9L538.3 275.7L538.6 357.9L538.9 357.9L539.2 294.0L539.4 167.1L539.7 281.5L540.0 293.9L540.3 293.9L540.6 375.2L540.8 375.2L541.1 281.2L541.4 265.9L541.7 355.0L542.0 238.6L542.3 238.6L542.5 281.2L542.8 274.5L543.1 274.5L543.4 257.8L543.7 354.8L543.9 319.9L544.2 319.9L544.5 278.7L544.8 292.8L545.1 275.6L545.4 226.4L545.6 303.2L545.9 303.2L546.2 269.4L546.5 265.0L546.8 319.1L547.0 295.8L547.3 264.7L547.6 330.3L547.9 244.6L548.2 325.0L548.5 311.0L548.7 249.6L549.0 249.6L549.3 273.0L549.6 346.4L549.9 336.9L550.1 339.1L550.4 291.0L550.7 270.6L551.0 327.3L551.3 265.8L551.6 278.9L551.8 296.2L552.1 304.5L552.4 387.7L552.7 317.6L553.0 271.1L553.2 345.4L553.5 375.1L553.8 265.8L554.1 334.0L554.4 307.2L554.7 346.1L554.9 284.6L555.2 276.4L555.5 248.9L555.8 323.3L556.1 323.3L556.3 388.1L556.6 278.5L556.9 293.1L557.2 351.0L557.5 262.7L557.7 349.3L558.0 283.3L558.3 280.0L558.6 262.6L558.9 267.7L559.2 383.6L559.4 340.1L559.7 288.9L560.0 378.5L560.3 249.6L560.6 275.9L560.8 248.9L561.1 277.3L561.4 224.2L561.7 323.5L562.0 257.0L562.3 244.5L562.5 244.5L562.8 210.0L563.1 259.6L563.4 301.4L563.7 313.9L563.9 313.9L564.2 267.2L564.5 393.7L564.8 277.7L565.1 312.7L565.4 308.7L565.6 391.2L565.9 279.0L566.2 262.2L566.5 262.2L566.8 277.0L567.0 329.3L567.3 275.9L567.6 323.1L567.9 281.4L568.2 276.7L568.5 290.2L568.7 230.4L569.0 337.9L569.3 337.9L569.6 258.0L569.9 326.8L570.1 349.3L570.4 274.3L570.7 274.3L571.0 362.6L571.3 310.4L571.6 257.3L571.8 207.2L572.1 315.7L572.4 228.6L572.7 270.2L573.0 311.0L573.2 370.8L573.5 309.5L573.8 304.8L574.1 269.9L574.4 320.6L574.6 293.5L574.9 245.5L575.2 245.5L575.5 380.3L575.8 376.5L576.1 326.9L576.3 294.4L576.6 236.1L576.9 397.3L577.2 345.3L577.5 289.2L577.7 321.6L578.0 272.2L578.3 282.9L578.6 218.9L578.9 318.9L579.2 310.8L579.4 279.8L579.7 308.4L580.0 276.3L580.3 276.3L580.6 243.4L580.8 274.1L581.1 287.2L581.4 287.2L581.7 351.6L582.0 284.2L582.3 296.0L582.5 333.7L582.8 269.6L583.1 295.2L583.4 234.4L583.7 262.2L583.9 332.5L584.2 332.5L584.5 332.5L584.8 291.0L585.1 284.9L585.4 231.6L585.6 351.2L585.9 340.4L586.2 274.6L586.5 295.3L586.8 295.3L587.0 339.9L587.3 341.7L587.6 364.6L587.9 271.2L588.2 184.7L588.5 265.3L588.7 208.5L589.0 305.9L589.3 337.0L589.6 337.0L589.9 289.2L590.1 288.6L590.4 266.4L590.7 260.1L591.0 295.3L591.3 270.4L591.5 308.3L591.8 348.2L592.1 275.7L592.4 326.5L592.7 274.6L593.0 353.5L593.2 335.0L593.5 346.9L593.8 260.4L594.1 260.4L594.4 329.6L594.6 303.1L594.9 297.7L595.2 213.9L595.5 319.7L595.8 347.1L596.1 278.0L596.3 384.0L596.6 286.5L596.9 302.9L597.2 390.3L597.5 351.7L597.7 255.3L598.0 257.1L598.3 257.1L598.6 342.1L598.9 303.4L599.2 356.4L599.4 257.1L599.7 354.5L600.0 293.1L600.3 267.4L600.6 240.3L600.8 280.7L601.1 249.1L601.4 255.6L601.7 255.6L602.0 344.2L602.3 342.6L602.5 291.6L602.8 398.8L603.1 188.3L603.4 268.9L603.7 276.7L603.9 307.9L604.2 291.2L604.5 257.8L604.8 302.2L605.1 336.4L605.4 235.3L605.6 315.1L605.9 266.9L606.2 295.9L606.5 322.4L606.8 396.7L607.0 244.2L607.3 345.9L607.6 279.4L607.9 326.1L608.2 250.7L608.4 284.7L608.7 352.8L609.0 308.7L609.3 219.5L609.6 276.5L609.9 231.0L610.1 231.0L610.4 231.0L610.7 337.5L611.0 337.5L611.3 289.4L611.5 303.4L611.8 303.4L612.1 385.2L612.4 281.5L612.7 284.0L613.0 361.0L613.2 316.5L613.5 295.8L613.8 278.3L614.1 278.3L614.4 316.4L614.6 283.6L614.9 296.6L615.2 350.0L615.5 271.2L615.8 317.3L616.1 317.3L616.3 279.0L616.6 270.5L616.9 327.1L617.2 302.9L617.5 302.9L617.7 410.0L618.0 327.5L618.3 382.1L618.6 309.4L618.9 308.3L619.2 271.4L619.4 241.3L619.7 309.8L620.0 236.1L620.3 342.0L620.6 342.0L620.8 264.1L621.1 247.0L621.4 392.6L621.7 235.7L622.0 235.7L622.3 332.2L622.5 322.1L622.8 342.9L623.1 346.7L623.4 252.5L623.7 343.8L623.9 343.8L624.2 278.3L624.5 278.3L624.8 229.9L625.1 229.9L625.3 261.8L625.6 261.8L625.9 230.7L626.2 273.4L626.5 247.4L626.8 300.8L627.0 310.0L627.3 373.0L627.6 258.2L627.9 320.3L628.2 297.6L628.4 238.9L628.7 313.4L629.0 321.3L629.3 340.7L629.6 242.5L629.9 242.5L630.1 242.3L630.4 310.5L630.7 327.2L631.0 255.7L631.3 310.6L631.5 378.1L631.8 271.6L632.1 296.8L632.4 284.5L632.7 231.3L633.0 289.5L633.2 335.8L633.5 328.7L633.8 334.2L634.1 282.7L634.4 240.4L634.6 276.9L634.9 359.3L635.2 321.7L635.5 338.3L635.8 300.5L636.1 322.2L636.3 304.4L636.6 304.1L636.9 304.1L637.2 304.1L637.5 274.7L637.7 296.7L638.0 296.7L638.3 248.2L638.6 295.2L638.9 349.3L639.2 296.3L639.4 332.8L639.7 298.5L640.0 328.1L640.3 224.5L640.6 311.9L640.8 271.1L641.1 271.1L641.4 291.4L641.7 238.0L642.0 238.0L642.2 238.0L642.5 267.6L642.8 288.0L643.1 256.3L643.4 246.6L643.7 308.2L643.9 212.8L644.2 234.2L644.5 270.1L644.8 270.1L645.1 248.1L645.3 302.2L645.6 281.2L645.9 301.1L646.2 391.4L646.5 262.8L646.8 348.0L647.0 309.5L647.3 312.3L647.6 271.4L647.9 324.9L648.2 309.7L648.4 266.2L648.7 298.1L649.0 340.1L649.3 356.5L649.6 356.5L649.9 269.1L650.1 312.8L650.4 341.0L650.7 326.1L651.0 253.8L651.3 380.3L651.5 341.9L651.8 365.8L652.1 321.4L652.4 297.5L652.7 313.7L653.0 314.2L653.2 369.0L653.5 369.0L653.8 369.0L654.1 369.0L654.4 212.5L654.6 293.5L654.9 287.4L655.2 259.6L655.5 400.1L655.8 270.4L656.1 265.3L656.3 354.2L656.6 259.4L656.9 250.6L657.2 317.4L657.5 195.4L657.7 195.4L658.0 274.2L658.3 329.2L658.6 283.0L658.9 273.0L659.1 278.3L659.4 364.9L659.7 314.1L660.0 282.2L660.3 323.9L660.6 306.6L660.8 279.8L661.1 303.7L661.4 336.0L661.7 361.7L662.0 228.3L662.2 268.3L662.5 261.3L662.8 261.3L663.1 294.6L663.4 251.8L663.7 250.5L663.9 316.9L664.2 336.1L664.5 260.5L664.8 368.2L665.1 265.0L665.3 336.9L665.6 343.2L665.9 298.9L666.2 366.0L666.5 314.8L666.8 314.8L667.0 262.6L667.3 286.7L667.6 339.8L667.9 339.8L668.2 290.3L668.4 339.7L668.7 327.1L669.0 282.9L669.3 307.4L669.6 278.1L669.9 387.8L670.1 348.3L670.4 291.0L670.7 294.8L671.0 379.5L671.3 287.8L671.5 367.6L671.8 372.8L672.1 266.5L672.4 266.5L672.7 271.0L673.0 312.5L673.2 312.5L673.5 264.8L673.8 329.6L674.1 280.3L674.4 280.3L674.6 265.4L674.9 346.4L675.2 318.7L675.5 239.9L675.8 272.6L676.0 355.3L676.3 249.5L676.6 249.5L676.9 265.6L677.2 240.5L677.5 284.5L677.7 305.7L678.0 222.4L678.3 273.0L678.6 273.0L678.9 341.7L679.1 353.1L679.4 313.4L679.7 329.0L680.0 297.2L680.3 297.2L680.6 262.2L680.8 224.0L681.1 297.8L681.4 346.6L681.7 260.4L682.0 233.2L682.2 300.4L682.5 321.7L682.8 328.8L683.1 358.5L683.4 296.9L683.7 246.3L683.9 296.6L684.2 331.1L684.5 322.3L684.8 285.4L685.1 295.2L685.3 299.8L685.6 336.3L685.9 312.3L686.2 324.4L686.5 346.9L686.8 277.1L687.0 304.8L687.3 295.6L687.6 313.9L687.9 231.8L688.2 348.2L688.4 348.2L688.7 291.1L689.0 291.1L689.3 264.6L689.6 271.4L689.9 271.4L690.1 299.4L690.4 243.4L690.7 243.4L691.0 270.9L691.3 350.3L691.5 330.1L691.8 405.4L692.1 232.0L692.4 288.9L692.7 274.4L692.9 226.9L693.2 357.5L693.5 298.4L693.8 288.0L694.1 317.6L694.4 268.3L694.6 348.6L694.9 292.5L695.2 307.4L695.5 278.1L695.8 348.3L696.0 310.5L696.3 307.7L696.6 276.7L696.9 325.2L697.2 307.8L697.5 277.9L697.7 275.1L698.0 375.8L698.3 375.8L698.6 315.6L698.9 313.1L699.1 313.9L699.4 355.3L699.7 296.9L700.0 259.2L700.3 324.0L700.6 359.8L700.8 245.9L701.1 245.9L701.4 300.6L701.7 314.6L702.0 273.7L702.2 310.5L702.5 304.2L702.8 290.6L703.1 290.6L703.4 329.3L703.7 344.4L703.9 276.9L704.2 307.2L704.5 300.0L704.8 289.9L705.1 302.9L705.3 236.7L705.6 368.8L705.9 313.9L706.2 350.4L706.5 299.2L706.8 294.1L707.0 309.1L707.3 297.3L707.6 366.6L707.9 304.8L708.2 289.2L708.4 290.6L708.7 235.2L709.0 207.7L709.3 270.1L709.6 312.6L709.8 312.6L710.1 297.4L710.4 274.7L710.7 259.4L711.0 335.2L711.3 219.7L711.5 330.8L711.8 271.4L712.1 329.5L712.4 333.1L712.7 307.1L712.9 285.4L713.2 315.5L713.5 351.7L713.8 358.3L714.1 262.7L714.4 319.5L714.6 319.5L714.9 215.6L715.2 265.9L715.5 170.4L715.8 170.4L716.0 170.4L716.3 316.7L716.6 313.4L716.9 313.4L717.2 225.8L717.5 225.8L717.7 305.6L718.0 305.6L718.3 249.2L718.6 272.7L718.9 288.4L719.1 306.6L719.4 297.5L719.7 359.4L720.0 359.4L720.3 295.0L720.6 295.8L720.8 243.3L721.1 243.3L721.4 296.2L721.7 251.4L722.0 245.7L722.2 274.4L722.5 340.9L722.8 268.3L723.1 292.2L723.4 292.8L723.7 352.3L723.9 307.3L724.2 239.8L724.5 296.6L724.8 272.7L725.1 314.6L725.3 260.6L725.6 260.6L725.9 387.2L726.2 283.7L726.5 307.2L726.7 307.2L727.0 362.3L727.3 349.5L727.6 270.4L727.9 229.3L728.2 342.3L728.4 308.6L728.7 326.9L729.0 259.9L729.3 267.4L729.6 387.1L729.8 332.6L730.1 264.6L730.4 309.7L730.7 297.2L731.0 261.8L731.3 310.9L731.5 254.7L731.8 309.1L732.1 277.0L732.4 260.8L732.7 271.6L732.9 294.3L733.2 288.1L733.5 312.5L733.8 270.1L734.1 323.0L734.4 237.8L734.6 359.7L734.9 311.8L735.2 210.7L735.5 210.7L735.8 210.7L736.0 210.7L736.3 328.8L736.6 298.0L736.9 316.6L737.2 317.0L737.5 317.0L737.7 328.8L738.0 229.3L738.3 365.0L738.6 295.0L738.9 274.9L739.1 315.1L739.4 303.3L739.7 279.5L740.0 204.0L740.3 332.1L740.6 218.1L740.8 356.4L741.1 356.4L741.4 285.1L741.7 350.6L742.0 301.6L742.2 332.9L742.5 301.3L742.8 301.3L743.1 280.9L743.4 280.9L743.6 344.1L743.9 284.3L744.2 312.2L744.5 230.5L744.8 249.0L745.1 329.4L745.3 321.4L745.6 293.2L745.9 271.7L746.2 271.7L746.5 308.0L746.7 302.3L747.0 368.3L747.3 328.8L747.6 269.0L747.9 222.1L748.2 272.0L748.4 272.0L748.7 324.0L749.0 298.2L749.3 274.0L749.6 246.1L749.8 246.1L750.1 277.0L750.4 378.8L750.7 228.6L751.0 327.5L751.3 327.5L751.5 387.8L751.8 311.5L752.1 297.3L752.4 353.4L752.7 258.0L752.9 317.3L753.2 269.3L753.5 237.7L753.8 287.9L754.1 260.2L754.4 221.8L754.6 221.4L754.9 378.9L755.2 351.0L755.5 351.0L755.8 239.9L756.0 340.4L756.3 340.4L756.6 248.1L756.9 284.5L757.2 300.1L757.5 313.5L757.7 346.7L758.0 268.5L758.3 203.6L758.6 310.4L758.9 310.4L759.1 263.5L759.4 272.8L759.7 308.4L760.0 253.1L760.3 361.7L760.5 356.2L760.8 324.3L761.1 324.3L761.4 277.5L761.7 315.8L762.0 315.8L762.2 308.0L762.5 295.9L762.8 321.4L763.1 307.6L763.4 307.6L763.6 369.5L763.9 312.0L764.2 338.1L764.5 269.8L764.8 269.8L765.1 204.6L765.3 264.0L765.6 314.3L765.9 263.0L766.2 334.9L766.5 201.2L766.7 251.5L767.0 279.1L767.3 279.1L767.6 254.3L767.9 315.3L768.2 281.2L768.4 289.8L768.7 260.1L769.0 319.4L769.3 304.5L769.6 204.1L769.8 255.3L770.1 244.0L770.4 305.9L770.7 248.1L771.0 294.8L771.3 301.4L771.5 301.4L771.8 317.9L772.1 290.8L772.4 239.2L772.7 239.2L772.9 358.9L773.2 214.9L773.5 214.9L773.8 358.3L774.1 358.3L774.4 265.8L774.6 247.4L774.9 271.0L775.2 242.5L775.5 294.7L775.8 288.6L776.0 265.3L776.3 289.6L776.6 220.0L776.9 306.2L777.2 252.7L777.4 239.4L777.7 264.9L778.0 264.9L778.3 330.9L778.6 311.0L778.9 300.5L779.1 335.4L779.4 257.8L779.7 319.9L780.0 319.9L780.3 309.5L780.5 352.2L780.8 271.6L781.1 301.1L781.4 274.3L781.7 317.5L782.0 299.7L782.2 292.7L782.5 292.7L782.8 299.3L783.1 297.5L783.4 313.3L783.6 313.3L783.9 272.5L784.2 332.7L784.5 275.7L784.8 225.6L785.1 277.5L785.3 229.7L785.6 344.7L785.9 241.2L786.2 312.2L786.5 314.7L786.7 219.3L787.0 345.8L787.3 235.2L787.6 331.7L787.9 386.8L788.2 357.5L788.4 357.5L788.7 288.1L789.0 306.1L789.3 346.3L789.6 346.3L789.8 401.5L790.1 306.0L790.4 305.6L790.7 321.5L791.0 228.5L791.3 254.8L791.5 391.2L791.8 231.1L792.1 191.2L792.4 295.2L792.7 295.2L792.9 334.5L793.2 265.2L793.5 293.4L793.8 332.6L794.1 285.9L794.3 353.8L794.6 274.0L794.9 267.8L795.2 393.6L795.5 302.9L795.8 313.7L796.0 271.9L796.3 264.1L796.6 247.0L796.9 348.6L797.2 189.2L797.4 189.2L797.7 309.9L798.0 363.2L798.3 369.1L798.6 262.6L798.9 319.0L799.1 319.0L799.4 371.7L799.7 249.3L800.0 257.3L800.3 281.1L800.5 281.1L800.8 244.3L801.1 244.3L801.4 277.4L801.7 311.6L802.0 348.3L802.2 366.0L802.5 366.0L802.8 272.9L803.1 272.9L803.4 350.9L803.6 347.1L803.9 309.5L804.2 261.8L804.5 249.5L804.8 287.5L805.1 307.3L805.3 307.3L805.6 301.6L805.9 212.4L806.2 248.9L806.5 267.8L806.7 267.8L807.0 336.4L807.3 336.3L807.6 287.4L807.9 300.1L808.2 341.7L808.4 355.8L808.7 316.1L809.0 277.0L809.3 293.2L809.6 293.2L809.8 277.8L810.1 380.4L810.4 316.9L810.7 244.3L811.0 318.9L811.2 350.1L811.5 350.1L811.8 325.1L812.1 325.1L812.4 361.1L812.7 361.1L812.9 361.1L813.2 308.5L813.5 269.3L813.8 269.3L814.1 337.0L814.3 294.5L814.6 276.4L814.9 326.1L815.2 309.2L815.5 313.9L815.8 301.9L816.0 284.3L816.3 367.6L816.6 338.1L816.9 254.7L817.2 306.2L817.4 379.7L817.7 331.7L818.0 253.6L818.3 253.6L818.6 314.7L818.9 295.6L819.1 327.0L819.4 256.3L819.7 227.4L820.0 227.4L820.3 351.2L820.5 351.2L820.8 296.6L821.1 319.8L821.4 354.1L821.7 287.6L822.0 274.8L822.2 266.5L822.5 322.3L822.8 322.3L823.1 257.4L823.4 306.1L823.6 266.2L823.9 328.5L824.2 279.3L824.5 226.2L824.8 398.4L825.1 311.1L825.3 322.1L825.6 253.6L825.9 305.4L826.2 312.8L826.5 271.2L826.7 299.3L827.0 310.2L827.3 268.8L827.6 268.8L827.9 298.0L828.1 231.1L828.4 296.3L828.7 331.6L829.0 255.5L829.3 291.8L829.6 291.8L829.8 289.2L830.1 287.4L830.4 338.4L830.7 271.6L831.0 292.7L831.2 289.1L831.5 257.9L831.8 284.0L832.1 336.2L832.4 297.5L832.7 316.4L832.9 291.3L833.2 308.9L833.5 346.4L833.8 279.2L834.1 313.6L834.3 244.8L834.6 364.6L834.9 364.6L835.2 255.1L835.5 331.5L835.8 284.8L836.0 340.5L836.3 350.5L836.6 278.2L836.9 223.2L837.2 262.4L837.4 262.4L837.7 295.3L838.0 280.2L838.3 278.0L838.6 275.9L838.9 249.3L839.1 249.3L839.4 317.3L839.7 257.0L840.0 257.0L840.3 350.6L840.5 237.5L840.8 273.2L841.1 273.2L841.4 315.2L841.7 325.2L842.0 275.7L842.2 275.7L842.5 340.4L842.8 220.5L843.1 281.2L843.4 359.7L843.6 264.0L843.9 264.0L844.2 272.3L844.5 320.4L844.8 283.8L845.0 266.9L845.3 232.8L845.6 289.1L845.9 335.0L846.2 276.2L846.5 275.2L846.7 299.8L847.0 315.8L847.3 331.8L847.6 349.3L847.9 347.6L848.1 216.6L848.4 283.7L848.7 273.7L849.0 376.3L849.3 290.3L849.6 336.1L849.8 336.1L850.1 248.2L850.4 337.8L850.7 242.5L851.0 333.0L851.2 342.4L851.5 345.4L851.8 265.1L852.1 265.1L852.4 335.6L852.7 298.2L852.9 288.8L853.2 346.9L853.5 346.9L853.8 379.9L854.1 280.8L854.3 280.8L854.6 330.9L854.9 226.8L855.2 257.1L855.5 358.2L855.8 275.6L856.0 253.6L856.3 324.4L856.6 362.2L856.9 241.1L857.2 352.0L857.4 237.9L857.7 345.3L858.0 278.4L858.3 265.4L858.6 325.7L858.9 325.7L859.1 335.8L859.4 285.7L859.7 315.2L860.0 292.4L860.3 292.4L860.5 369.8L860.8 271.2L861.1 295.2L861.4 385.0L861.7 385.0L861.9 245.3L862.2 301.6L862.5 255.8L862.8 281.1L863.1 278.8L863.4 276.8L863.6 230.6L863.9 230.6L864.2 355.8L864.5 355.8L864.8 355.8L865.0 355.8L865.3 358.7L865.6 306.9L865.9 287.4L866.2 275.3L866.5 303.5L866.7 335.9L867.0 379.4L867.3 384.4L867.6 253.6L867.9 292.2L868.1 254.5L868.4 314.0L868.7 257.3L869.0 230.7L869.3 282.5L869.6 287.1L869.8 307.7L870.1 358.5L870.4 299.6L870.7 316.1L871.0 246.3L871.2 300.1L871.5 263.8L871.8 293.6L872.1 280.5L872.4 280.5L872.7 315.6L872.9 367.3L873.2 248.1L873.5 192.7L873.8 291.9L874.1 302.3L874.3 314.9L874.6 381.0L874.9 381.0L875.2 343.1L875.5 343.1L875.8 304.0L876.0 304.0L876.3 198.7L876.6 298.7L876.9 313.6L877.2 314.3L877.4 314.3L877.7 314.3L878.0 361.6L878.3 252.9L878.6 252.9L878.8 316.6L879.1 253.7L879.4 281.1L879.7 252.4L880.0 363.3L880.3 389.1L880.5 334.0L880.8 334.0L881.1 352.5L881.4 330.5L881.7 314.0L881.9 304.0L882.2 287.2L882.5 212.0L882.8 286.0L883.1 336.1L883.4 276.0L883.6 359.6L883.9 326.6L884.2 248.0L884.5 233.0L884.8 193.8L885.0 281.3L885.3 278.5L885.6 313.1L885.9 265.1L886.2 352.4L886.5 352.4L886.7 268.2L887.0 346.4L887.3 346.4L887.6 345.0L887.9 307.5L888.1 245.5L888.4 279.2L888.7 282.4L889.0 312.9L889.3 326.8L889.6 369.8L889.8 288.0L890.1 261.5L890.4 261.5L890.7 239.8L891.0 256.2L891.2 235.4L891.5 235.4L891.8 295.7L892.1 305.1L892.4 260.3L892.7 291.6L892.9 266.9L893.2 262.8L893.5 322.3L893.8 270.2L894.1 310.6L894.3 293.2L894.6 365.6L894.9 296.2L895.2 290.2L895.5 279.4L895.7 302.6L896.0 302.6L896.3 311.2L896.6 373.5L896.9 355.5L897.2 244.9L897.4 386.8L897.7 318.7L898.0 318.7L898.3 350.7L898.6 251.6L898.8 342.1L899.1 315.3L899.4 331.2L899.7 374.9L900.0 203.4L900.3 203.4L900.5 235.2L900.8 307.1L901.1 371.5L901.4 215.4L901.7 198.8L901.9 333.9L902.2 314.7L902.5 249.4L902.8 249.4L903.1 315.4L903.4 249.6L903.6 275.6L903.9 214.5L904.2 265.5L904.5 235.8L904.8 301.8L905.0 301.8L905.3 272.1L905.6 249.9L905.9 249.9L906.2 325.1L906.5 316.6L906.7 307.9L907.0 284.7L907.3 284.7L907.6 304.7L907.9 383.1L908.1 383.1L908.4 335.4L908.7 302.0L909.0 282.7L909.3 334.8L909.6 329.8L909.8 261.2L910.1 241.2L910.4 311.7L910.7 284.5L911.0 282.7L911.2 335.2L911.5 293.2L911.8 293.2L912.1 349.0L912.4 349.0L912.6 297.8L912.9 297.8L913.2 325.7L913.5 249.9L913.8 249.9L914.1 320.4L914.3 320.4L914.6 307.3L914.9 305.6L915.2 298.0L915.5 320.8L915.7 320.6L916.0 287.7L916.3 225.3L916.6 210.6L916.9 292.2L917.2 276.3L917.4 276.3L917.7 274.2L918.0 296.9L918.3 388.9L918.6 321.5L918.8 272.3L919.1 292.6L919.4 395.5L919.7 345.0L920.0 304.0L920.3 307.8L920.5 339.8L920.8 252.4L921.1 304.9L921.4 301.6L921.7 244.8L921.9 244.8L922.2 316.8L922.5 306.8L922.8 305.8L923.1 310.9L923.4 268.3L923.6 351.8L923.9 391.3L924.2 311.9L924.5 294.8L924.8 299.8L925.0 256.4L925.3 311.8L925.6 355.6L925.9 369.8L926.2 344.1L926.5 227.9L926.7 289.4L927.0 304.7L927.3 232.5L927.6 278.7L927.9 292.9L928.1 297.8L928.4 344.9L928.7 285.2L929.0 250.8L929.3 327.0L929.5 287.1L929.8 244.7L930.1 204.9L930.4 305.1L930.7 305.1L931.0 303.2L931.2 251.4L931.5 251.4L931.8 271.9L932.1 307.9L932.4 307.9L932.6 307.9L932.9 357.6L933.2 357.6L933.5 303.3L933.8 316.1L934.1 332.7L934.3 323.1L934.6 301.0L934.9 329.5L935.2 259.7L935.5 242.3L935.7 302.8L936.0 353.2L936.3 250.8L936.6 272.3L936.9 338.8L937.2 340.0L937.4 320.0L937.7 273.0L938.0 375.8L938.3 323.3L938.6 288.1L938.8 364.5L939.1 312.5L939.4 335.3L939.7 348.9L940.0 313.7L940.3 254.9L940.5 260.3L940.8 319.7L941.1 319.7L941.4 259.3L941.7 332.2L941.9 304.9L942.2 278.8L942.5 262.4L942.8 295.4L943.1 295.4L943.4 249.5L943.6 265.5L943.9 282.3L944.2 331.2L944.5 309.7L944.8 296.8L945.0 346.9L945.3 271.5L945.6 275.4L945.9 398.1L946.2 299.5L946.4 239.0L946.7 285.6L947.0 316.2L947.3 346.3L947.6 346.3L947.9 333.0L948.1 181.0L948.4 334.9L948.7 280.1L949.0 308.5L949.3 332.0L949.5 307.1L949.8 332.9L950.1 309.5L950.4 347.5L950.7 328.6L951.0 345.7L951.2 229.0L951.5 283.4L951.8 331.1L952.1 274.8L952.4 324.1L952.6 369.0L952.9 265.3L953.2 219.6L953.5 357.1L953.8 262.1L954.1 249.7L954.3 249.7L954.6 249.7L954.9 310.9L955.2 302.4L955.5 341.0L955.7 341.0L956.0 334.3L956.3 270.9L956.6 289.6L956.9 272.8L957.2 322.8L957.4 279.1L957.7 305.2L958.0 288.7L958.3 302.9L958.6 381.2L958.8 301.6L959.1 238.0L959.4 248.5L959.7 306.4L960.0 313.7L960.3 313.7L960.5 297.5L960.8 270.2L961.1 251.1L961.4 276.2L961.7 335.2L961.9 380.1L962.2 240.7L962.5 228.5L962.8 207.6L963.1 308.7L963.3 308.5L963.6 308.5L963.9 229.4L964.2 319.7L964.5 258.3L964.8 275.6L965.0 275.6L965.3 390.0L965.6 283.2L965.9 335.5L966.2 335.5L966.4 321.3L966.7 310.1L967.0 299.5L967.3 248.3L967.6 290.1L967.9 308.0L968.1 308.0L968.4 295.2L968.7 330.1L969.0 295.8L969.3 295.8L969.5 391.0L969.8 289.6L970.1 305.8L970.4 403.5L970.7 264.5L971.0 304.5L971.2 302.7L971.5 348.7L971.8 348.7L972.1 248.1L972.4 248.1L972.6 248.1L972.9 281.0L973.2 346.0L973.5 372.3L973.8 304.6L974.1 316.5L974.3 260.7L974.6 318.8L974.9 318.8L975.2 318.8L975.5 372.9L975.7 295.4L976.0 276.1L976.3 276.1L976.6 349.4L976.9 329.8L977.2 346.9L977.4 303.9L977.7 292.2L978.0 282.5L978.3 298.5L978.6 298.5L978.8 232.0L979.1 262.1L979.4 297.2L979.7 308.9L980.0 291.0L980.2 206.5L980.5 338.7L980.8 338.7L981.1 308.8L981.4 212.9L981.7 276.2L981.9 329.0L982.2 351.1L982.5 351.1L982.8 351.1L983.1 295.8L983.3 300.7L983.6 255.5L983.9 280.8L984.2 280.8L984.5 279.1L984.8 279.1L985.0 331.7L985.3 241.0L985.6 273.2L985.9 289.8L986.2 332.4L986.4 362.4L986.7 302.5L987.0 310.4L987.3 322.7L987.6 270.8L987.9 356.6L988.1 316.5L988.4 276.8L988.7 285.1L989.0 257.0L989.3 266.3L989.5 319.2L989.8 285.3L990.1 312.0L990.4 220.9L990.7 301.4L991.0 298.6L991.2 308.9L991.5 367.1L991.8 303.7L992.1 270.8L992.4 214.2L992.6 330.4L992.9 330.4L993.2 259.4L993.5 259.4L993.8 292.7L994.1 265.1L994.3 347.9L994.6 382.5L994.9 359.4L995.2 301.6L995.5 367.2L995.7 306.6L996.0 287.7L996.3 259.4L996.6 270.6L996.9 280.6L997.1 297.9L997.4 220.9L997.7 308.7L998.0 320.2L998.3 330.7L998.6 299.0L998.8 330.6L999.1 281.3L999.4 281.3L999.7 341.9L1000.0 226.9L1000.2 251.5L1000.5 251.5L1000.8 427.4L1001.1 294.0L1001.4 351.3L1001.7 353.1L1001.9 334.2L1002.2 334.2L1002.5 312.2L1002.8 256.8L1003.1 316.2L1003.3 327.4L1003.6 282.6L1003.9 291.0L1004.2 254.8L1004.5 325.8L1004.8 239.2L1005.0 286.3L1005.3 306.1L1005.6 231.9L1005.9 258.7L1006.2 297.5L1006.4 386.5L1006.7 312.4L1007.0 309.9L1007.3 369.0L1007.6 361.9L1007.9 245.3L1008.1 309.0L1008.4 328.8L1008.7 204.4L1009.0 300.0L1009.3 281.8L1009.5 232.6L1009.8 273.6L1010.1 246.9L1010.4 351.5L1010.7 267.2L1011.0 310.0L1011.2 334.6L1011.5 311.3L1011.8 286.3L1012.1 308.7L1012.4 330.5L1012.6 288.1L1012.9 287.1L1013.2 274.3L1013.5 304.3L1013.8 288.1L1014.0 268.3L1014.3 347.0L1014.6 271.3L1014.9 295.7L1015.2 237.7L1015.5 347.3L1015.7 338.0L1016.0 297.4L1016.3 351.8L1016.6 312.1L1016.9 312.1L1017.1 247.8L1017.4 254.2L1017.7 275.7L1018.0 290.3L1018.3 316.7L1018.6 296.1L1018.8 242.7L1019.1 414.6L1019.4 279.2L1019.7 279.2L1020.0 279.2L1020.2 320.2L1020.5 352.4L1020.8 292.5L1021.1 324.4L1021.4 256.0L1021.7 266.8L1021.9 276.3L1022.2 198.0L1022.5 306.6L1022.8 290.8L1023.1 295.4L1023.3 328.4L1023.6 268.5L1023.9 208.7L1024.2 352.7L1024.5 308.4L1024.8 221.7L1025.0 310.6L1025.3 311.9L1025.6 191.8L1025.9 363.5L1026.2 274.7L1026.4 227.2L1026.7 364.2L1027.0 296.6L1027.3 203.1L1027.6 245.2L1027.9 336.5L1028.1 336.5L1028.4 267.6L1028.7 299.0L1029.0 300.9L1029.3 300.9L1029.5 300.9L1029.8 213.1L1030.1 258.3L1030.4 298.9L1030.7 299.8L1030.9 299.8L1031.2 264.1L1031.5 333.7L1031.8 255.7L1032.1 294.6L1032.4 306.1L1032.6 319.1L1032.9 323.0L1033.2 248.1L1033.5 348.2L1033.8 348.2L1034.0 307.5L1034.3 307.5L1034.6 370.8L1034.9 263.7L1035.2 309.0L1035.5 282.3L1035.7 340.9L1036.0 323.5L1036.3 283.2L1036.6 333.4L1036.9 308.9L1037.1 269.2L1037.4 334.7L1037.7 333.8L1038.0 258.9L1038.3 301.6L1038.6 317.1L1038.8 353.1L1039.1 254.7L1039.4 324.7L1039.7 270.8L1040.0 270.8L1040.2 270.8L1040.5 287.8L1040.8 270.4L1041.1 338.5L1041.4 330.0L1041.7 358.5L1041.9 343.8L1042.2 308.6L1042.5 296.1L1042.8 296.1L1043.1 294.3L1043.3 301.8L1043.6 301.8L1043.9 371.7L1044.2 309.6L1044.5 344.7L1044.8 258.8L1045.0 254.1L1045.3 263.2L1045.6 292.4L1045.9 219.6L1046.2 276.3L1046.4 334.1L1046.7 345.2L1047.0 368.7L1047.3 293.2L1047.6 350.0L1047.8 301.2L1048.1 361.3L1048.4 324.6L1048.7 376.7L1049.0 325.0L1049.3 351.2L1049.5 310.6L1049.8 310.6L1050.1 277.9L1050.4 305.6L1050.7 227.3L1050.9 221.2L1051.2 341.5L1051.5 269.6L1051.8 341.7L1052.1 341.7L1052.4 341.7L1052.6 367.0L1052.9 240.5L1053.2 240.5L1053.5 298.0L1053.8 323.4L1054.0 342.6L1054.3 342.6L1054.6 324.3L1054.9 334.5L1055.2 329.8L1055.5 377.5L1055.7 323.8L1056.0 334.1L1056.3 306.8L1056.6 287.8L1056.9 287.8L1057.1 306.1L1057.4 306.1L1057.7 286.3L1058.0 286.3L1058.3 286.3L1058.6 381.4L1058.8 306.8L1059.1 281.2L1059.4 259.0L1059.7 382.2L1060.0 261.0L1060.2 319.9L1060.5 244.2L1060.8 274.9L1061.1 325.6L1061.4 287.9L1061.7 273.0L1061.9 297.2L1062.2 181.1L1062.5 259.8L1062.8 239.2L1063.1 242.6L1063.3 253.2L1063.6 253.2L1063.9 238.5L1064.2 235.0L1064.5 298.5L1064.7 338.2L1065.0 211.7L1065.3 266.9L1065.6 266.9L1065.9 297.9L1066.2 330.9L1066.4 353.8L1066.7 326.7L1067.0 218.0L1067.3 294.8L1067.6 312.4L1067.8 288.8L1068.1 262.0L1068.4 329.2L1068.7 393.9L1069.0 319.4L1069.3 286.3L1069.5 294.2L1069.8 331.6L1070.1 274.9L1070.4 332.2L1070.7 311.7L1070.9 311.7L1071.2 307.8L1071.5 314.4L1071.8 285.8L1072.1 344.4L1072.4 263.2L1072.6 230.7L1072.9 248.4L1073.2 303.5L1073.5 306.1L1073.8 306.6L1074.0 347.7L1074.3 326.1L1074.6 266.3L1074.9 315.4L1075.2 325.2L1075.5 378.8L1075.7 269.8L1076.0 347.1L1076.3 347.1L1076.6 347.1L1076.9 371.9L1077.1 303.6L1077.4 348.7L1077.7 226.0L1078.0 268.9L1078.3 233.5L1078.6 400.5L1078.8 400.5L1079.1 381.3L1079.4 292.5L1079.7 368.7L1080.0 319.1L1080.2 260.5L1080.5 340.4L1080.8 366.7L1081.1 267.5L1081.4 301.7L1081.6 272.1L1081.9 346.5L1082.2 308.6L1082.5 308.6L1082.8 390.4L1083.1 283.7L1083.3 286.6L1083.6 294.0L1083.9 256.5L1084.2 298.8L1084.5 358.0L1084.7 255.9L1085.0 244.0L1085.3 273.2L1085.6 255.7L1085.9 264.3L1086.2 284.3L1086.4 251.9L1086.7 309.2L1087.0 281.7" stroke="#c69cea" />
<path d="M242.0 574.2L242.3 668.9L242.6 668.9L242.8 668.9L243.1 516.5L243.4 597.3L243.7 597.3L244.0 528.0L244.3 528.0L244.5 528.0L244.8 632.0L245.1 632.0L245.4 504.9L245.7 504.9L245.9 504.9L246.2 608.8L246.5 608.8L246.8 407.9L247.1 407.9L247.4 407.9L247.6 407.9L247.9 551.1L248.2 551.1L248.5 331.6L248.8 331.6L249.0 331.6L249.3 331.6L249.6 239.2L249.9 239.2L250.2 239.2L250.5 239.2L250.7 239.2L251.0 239.2L251.3 239.2L251.6 213.8L251.9 213.8L252.1 213.8L252.4 213.8L252.7 213.8L253.0 213.8L253.3 213.8L253.5 213.8L253.8 204.6L254.1 204.6L254.4 204.6L254.7 204.6L255.0 204.6L255.2 250.8L255.5 250.8L255.8 250.8L256.1 250.8L256.4 254.2L256.6 252.3L256.9 265.5L257.2 269.0L257.5 276.9L257.8 275.6L258.1 273.2L258.3 290.1L258.6 286.4L258.9 258.3L259.2 259.1L259.5 307.8L259.7 256.4L260.0 300.9L260.3 281.4L260.6 355.3L260.9 355.3L261.2 200.6L261.4 269.1L261.7 294.7L262.0 284.2L262.3 341.6L262.6 335.1L262.8 335.1L263.1 265.9L263.4 389.3L263.7 202.3L264.0 331.7L264.3 313.9L264.5 396.6L264.8 396.6L265.1 296.6L265.4 279.6L265.7 356.0L265.9 356.0L266.2 347.4L266.5 347.4L266.8 324.0L267.1 258.1L267.4 288.6L267.6 229.6L267.9 271.5L268.2 320.5L268.5 333.9L268.8 251.5L269.0 286.7L269.3 278.8L269.6 240.3L269.9 287.0L270.2 267.6L270.4 323.2L270.7 344.4L271.0 343.2L271.3 322.6L271.6 237.1L271.9 283.5L272.1 301.2L272.4 339.1L272.7 299.7L273.0 226.4L273.3 226.4L273.5 288.2L273.8 299.4L274.1 263.6L274.4 292.4L274.7 255.1L275.0 256.1L275.2 256.1L275.5 320.2L275.8 342.1L276.1 228.4L276.4 228.4L276.6 334.8L276.9 301.8L277.2 274.7L277.5 301.1L277.8 248.5L278.1 348.6L278.3 348.4L278.6 325.5L278.9 325.5L279.2 275.7L279.5 313.9L279.7 263.6L280.0 263.6L280.3 305.0L280.6 325.4L280.9 282.6L281.2 319.8L281.4 295.0L281.7 333.3L282.0 314.9L282.3 299.9L282.6 313.7L282.8 275.5L283.1 288.4L283.4 301.1L283.7 259.3L284.0 348.4L284.3 242.6L284.5 362.1L284.8 246.8L285.1 240.6L285.4 240.6L285.7 240.6L285.9 259.5L286.2 256.9L286.5 285.3L286.8 279.0L287.1 256.5L287.3 280.7L287.6 296.4L287.9 283.6L288.2 286.6L288.5 236.4L288.8 327.8L289.0 320.5L289.3 263.7L289.6 315.3L289.9 333.4L290.2 333.4L290.4 270.6L290.7 250.2L291.0 341.4L291.3 317.7L291.6 293.8L291.9 286.7L292.1 273.0L292.4 284.2L292.7 306.2L293.0 346.5L293.3 310.8L293.5 226.7L293.8 226.7L294.1 273.4L294.4 337.3L294.7 315.1L295.0 315.1L295.2 363.3L295.5 335.6L295.8 280.9L296.1 377.9L296.4 268.8L296.6 319.1L296.9 205.7L297.2 205.7L297.5 205.7L297.8 277.3L298.1 225.5L298.3 300.9L298.6 275.0L298.9 318.6L299.2 363.9L299.5 298.4L299.7 292.4L300.0 324.7L300.3 334.5L300.6 285.3L300.9 291.5L301.2 307.2L301.4 188.9L301.7 299.7L302.0 246.9L302.3 342.9L302.6 228.3L302.8 310.9L303.1 325.2L303.4 318.4L303.7 306.3L304.0 327.6L304.2 345.7L304.5 310.9L304.8 344.9L305.1 315.1L305.4 315.1L305.7 341.1L305.9 295.8L306.2 307.9L306.5 313.9L306.8 345.4L307.1 399.4L307.3 204.9L307.6 282.3L307.9 316.1L308.2 281.6L308.5 298.8L308.8 305.1L309.0 365.3L309.3 356.2L309.6 356.2L309.9 252.2L310.2 242.5L310.4 350.5L310.7 260.5L311.0 193.5L311.3 267.5L311.6 267.5L311.9 274.0L312.1 373.8L312.4 256.7L312.7 253.5L313.0 253.5L313.3 326.4L313.5 312.2L313.8 281.6L314.1 249.7L314.4 292.0L314.7 281.8L315.0 292.9L315.2 321.5L315.5 334.1L315.8 286.7L316.1 304.4L316.4 289.4L316.6 198.9L316.9 261.6L317.2 349.9L317.5 270.2L317.8 286.7L318.1 209.1L318.3 268.8L318.6 236.3L318.9 236.3L319.2 270.2L319.5 371.3L319.7 246.7L320.0 211.2L320.3 310.0L320.6 310.0L320.9 348.8L321.1 284.5L321.4 277.8L321.7 244.5L322.0 251.7L322.3 313.8L322.6 207.0L322.8 350.2L323.1 320.5L323.4 320.5L323.7 380.9L324.0 340.2L324.2 289.1L324.5 210.4L324.8 230.5L325.1 293.7L325.4 269.5L325.7 400.7L325.9 284.1L326.2 232.1L326.5 335.9L326.8 251.6L327.1 251.6L327.3 296.0L327.6 293.5L327.9 276.8L328.2 275.1L328.5 231.3L328.8 260.9L329.0 297.2L329.3 297.2L329.6 339.3L329.9 317.7L330.2 374.0L330.4 371.7L330.7 268.4L331.0 270.9L331.3 268.0L331.6 321.9L331.9 279.6L332.1 377.6L332.4 261.9L332.7 267.6L333.0 237.1L333.3 237.1L333.5 290.5L333.8 355.5L334.1 240.4L334.4 291.4L334.7 291.4L335.0 281.1L335.2 228.4L335.5 193.5L335.8 294.1L336.1 352.0L336.4 304.5L336.6 287.3L336.9 296.3L337.2 267.1L337.5 295.0L337.8 295.0L338.0 248.1L338.3 356.6L338.6 280.5L338.9 251.1L339.2 308.8L339.5 308.8L339.7 259.2L340.0 209.0L340.3 367.3L340.6 267.5L340.9 286.9L341.1 414.6L341.4 281.3L341.7 342.3L342.0 204.9L342.3 223.8L342.6 358.5L342.8 265.6L343.1 340.0L343.4 309.9L343.7 260.6L344.0 298.1L344.2 298.2L344.5 408.4L344.8 387.1L345.1 368.3L345.4 285.1L345.7 271.1L345.9 293.0L346.2 286.7L346.5 336.7L346.8 267.8L347.1 255.6L347.3 320.7L347.6 292.7L347.9 236.0L348.2 346.9L348.5 329.3L348.8 289.2L349.0 311.2L349.3 353.7L349.6 307.5L349.9 309.7L350.2 274.4L350.4 249.2L350.7 360.2L351.0 343.7L351.3 241.8L351.6 303.6L351.9 316.5L352.1 316.5L352.4 273.0L352.7 336.0L353.0 275.1L353.3 315.8L353.5 310.7L353.8 345.8L354.1 253.5L354.4 253.5L354.7 339.3L354.9 281.0L355.2 281.0L355.5 337.5L355.8 323.9L356.1 271.7L356.4 355.3L356.6 277.5L356.9 250.7L357.2 258.6L357.5 258.6L357.8 289.6L358.0 297.7L358.3 285.2L358.6 303.0L358.9 313.8L359.2 221.5L359.5 295.3L359.7 397.8L360.0 397.8L360.3 397.8L360.6 250.9L360.9 250.9L361.1 334.6L361.4 302.9L361.7 264.2L362.0 280.8L362.3 329.9L362.6 274.2L362.8 329.5L363.1 372.8L363.4 349.7L363.7 292.2L364.0 292.2L364.2 276.9L364.5 318.6L364.8 298.7L365.1 338.4L365.4 252.9L365.7 292.0L365.9 235.8L366.2 260.4L366.5 302.6L366.8 261.6L367.1 323.7L367.3 309.2L367.6 314.5L367.9 362.2L368.2 351.8L368.5 351.8L368.8 315.3L369.0 282.5L369.3 349.6L369.6 286.5L369.9 286.5L370.2 315.3L370.4 315.3L370.7 287.8L371.0 292.7L371.3 331.6L371.6 199.9L371.8 316.0L372.1 270.0L372.4 310.7L372.7 310.7L373.0 295.4L373.3 215.1L373.5 323.6L373.8 236.8L374.1 275.4L374.4 312.8L374.7 274.1L374.9 297.8L375.2 297.1L375.5 281.4L375.8 279.8L376.1 330.5L376.4 264.4L376.6 275.7L376.9 255.3L377.2 313.2L377.5 260.2L377.8 329.5L378.0 261.2L378.3 318.3L378.6 270.0L378.9 284.7L379.2 352.5L379.5 270.4L379.7 358.7L380.0 329.8L380.3 264.9L380.6 263.6L380.9 215.7L381.1 297.8L381.4 249.9L381.7 240.4L382.0 335.0L382.3 273.2L382.6 276.4L382.8 298.2L383.1 298.2L383.4 250.7L383.7 280.8L384.0 273.0L384.2 277.3L384.5 358.4L384.8 378.1L385.1 202.7L385.4 324.1L385.7 280.4L385.9 289.4L386.2 289.4L386.5 337.1L386.8 364.8L387.1 364.8L387.3 309.3L387.6 298.5L387.9 342.5L388.2 250.4L388.5 285.9L388.7 385.4L389.0 282.7L389.3 293.4L389.6 300.0L389.9 295.1L390.2 243.4L390.4 290.7L390.7 279.6L391.0 279.5L391.3 336.9L391.6 264.1L391.8 301.9L392.1 283.8L392.4 270.2L392.7 327.1L393.0 300.4L393.3 248.5L393.5 327.2L393.8 303.4L394.1 256.5L394.4 320.9L394.7 220.5L394.9 350.2L395.2 335.6L395.5 263.7L395.8 264.3L396.1 264.3L396.4 289.2L396.6 254.8L396.9 282.1L397.2 264.3L397.5 263.2L397.8 293.4L398.0 247.4L398.3 298.5L398.6 256.1L398.9 309.2L399.2 290.1L399.5 250.8L399.7 323.7L400.0 311.7L400.3 314.0L400.6 257.0L400.9 235.8L401.1 277.2L401.4 263.9L401.7 255.8L402.0 323.3L402.3 320.9L402.6 320.9L402.8 210.9L403.1 289.7L403.4 331.2L403.7 359.4L404.0 244.1L404.2 244.1L404.5 309.9L404.8 331.2L405.1 300.6L405.4 191.4L405.6 253.3L405.9 355.4L406.2 382.9L406.5 309.0L406.8 325.8L407.1 268.4L407.3 254.8L407.6 284.2L407.9 246.3L408.2 260.6L408.5 297.1L408.7 280.8L409.0 350.9L409.3 230.8L409.6 256.2L409.9 339.2L410.2 339.2L410.4 316.0L410.7 283.9L411.0 366.9L411.3 395.8L411.6 395.8L411.8 335.8L412.1 342.3L412.4 211.3L412.7 230.1L413.0 266.9L413.3 266.9L413.5 310.6L413.8 268.3L414.1 197.6L414.4 339.6L414.7 309.5L414.9 302.0L415.2 250.4L415.5 267.2L415.8 310.2L416.1 271.2L416.4 274.8L416.6 291.5L416.9 268.1L417.2 281.9L417.5 327.5L417.8 277.2L418.0 314.9L418.3 260.9L418.6 318.6L418.9 292.7L419.2 321.2L419.5 313.9L419.7 276.2L420.0 344.6L420.3 352.8L420.6 352.8L420.9 242.1L421.1 291.0L421.4 318.7L421.7 318.7L422.0 319.6L422.3 273.8L422.5 273.8L422.8 285.5L423.1 306.2L423.4 258.5L423.7 325.2L424.0 358.1L424.2 341.6L424.5 363.7L424.8 363.7L425.1 301.1L425.4 304.0L425.6 335.2L425.9 256.8L426.2 311.1L426.5 295.2L426.8 304.0L427.1 345.7L427.3 241.9L427.6 349.5L427.9 368.0L428.2 321.1L428.5 315.8L428.7 335.0L429.0 390.8L429.3 267.7L429.6 251.9L429.9 328.8L430.2 319.3L430.4 245.7L430.7 265.6L431.0 347.2L431.3 356.1L431.6 318.1L431.8 319.2L432.1 270.9L432.4 264.7L432.7 329.8L433.0 413.6L433.3 370.0L433.5 263.5L433.8 216.5L434.1 216.5L434.4 306.3L434.7 344.9L434.9 308.3L435.2 346.1L435.5 346.1L435.8 287.2L436.1 186.6L436.4 186.6L436.6 351.1L436.9 351.1L437.2 345.8L437.5 295.6L437.8 284.7L438.0 279.2L438.3 288.2L438.6 288.2L438.9 302.2L439.2 297.0L439.4 297.0L439.7 321.0L440.0 270.2L440.3 270.2L440.6 227.9L440.9 227.9L441.1 304.7L441.4 335.3L441.7 306.9L442.0 328.7L442.3 328.7L442.5 238.0L442.8 335.5L443.1 275.2L443.4 264.4L443.7 256.1L444.0 315.3L444.2 315.3L444.5 373.0L444.8 293.7L445.1 312.3L445.4 328.3L445.6 225.1L445.9 244.0L446.2 368.7L446.5 368.7L446.8 252.2L447.1 283.3L447.3 295.9L447.6 357.6L447.9 229.7L448.2 229.7L448.5 374.8L448.7 277.7L449.0 310.7L449.3 343.8L449.6 266.5L449.9 317.2L450.2 273.6L450.4 260.8L450.7 317.2L451.0 396.8L451.3 357.8L451.6 338.3L451.8 287.8L452.1 284.8L452.4 284.8L452.7 311.8L453.0 296.7L453.3 314.4L453.5 251.4L453.8 271.0L454.1 271.0L454.4 309.3L454.7 336.9L454.9 303.7L455.2 353.0L455.5 227.8L455.8 271.6L456.1 302.2L456.3 305.1L456.6 287.9L456.9 287.9L457.2 321.3L457.5 187.0L457.8 293.3L458.0 293.3L458.3 340.3L458.6 344.7L458.9 290.1L459.2 324.3L459.4 281.2L459.7 272.9L460.0 272.9L460.3 301.0L460.6 301.0L460.9 307.9L461.1 305.7L461.4 216.1L461.7 288.3L462.0 270.9L462.3 254.7L462.5 295.2L462.8 317.6L463.1 286.7L463.4 287.6L463.7 287.6L464.0 302.7L464.2 301.7L464.5 304.4L464.8 324.3L465.1 305.7L465.4 296.7L465.6 224.7L465.9 252.9L466.2 288.2L466.5 314.6L466.8 242.8L467.1 234.0L467.3 371.0L467.6 278.5L467.9 357.3L468.2 264.1L468.5 276.7L468.7 299.0L469.0 263.9L469.3 263.9L469.6 352.2L469.9 294.3L470.2 293.3L470.4 255.2L470.7 282.3L471.0 353.3L471.3 353.7L471.6 263.7L471.8 260.8L472.1 310.1L472.4 364.0L472.7 364.0L473.0 279.6L473.2 299.5L473.5 271.3L473.8 321.8L474.1 286.7L474.4 305.9L474.7 313.2L474.9 385.9L475.2 287.2L475.5 315.7L475.8 307.9L476.1 347.7L476.3 198.8L476.6 356.1L476.9 279.8L477.2 382.5L477.5 382.5L477.8 286.3L478.0 307.4L478.3 318.0L478.6 301.3L478.9 267.1L479.2 375.3L479.4 387.1L479.7 319.7L480.0 310.5L480.3 305.2L480.6 280.5L480.9 294.6L481.1 207.2L481.4 322.0L481.7 256.5L482.0 384.5L482.3 313.2L482.5 376.9L482.8 347.5L483.1 347.5L483.4 212.9L483.7 324.6L484.0 274.3L484.2 228.3L484.5 311.5L484.8 311.5L485.1 250.6L485.4 310.5L485.6 297.3L485.9 346.2L486.2 346.2L486.5 329.6L486.8 281.5L487.1 279.7L487.3 329.3L487.6 378.9L487.9 265.2L488.2 207.4L488.5 250.0L488.7 250.0L489.0 280.5L489.3 346.9L489.6 304.0L489.9 343.0L490.1 325.1L490.4 325.1L490.7 300.9L491.0 303.8L491.3 392.8L491.6 325.2L491.8 307.1L492.1 313.4L492.4 266.8L492.7 266.8L493.0 270.1L493.2 335.7L493.5 365.9L493.8 291.9L494.1 332.2L494.4 297.2L494.7 297.5L494.9 275.5L495.2 301.2L495.5 292.0L495.8 358.8L496.1 315.9L496.3 315.9L496.6 277.6L496.9 316.4L497.2 309.2L497.5 346.6L497.8 252.1L498.0 351.2L498.3 288.5L498.6 305.8L498.9 245.9L499.2 327.5L499.4 331.6L499.7 317.2L500.0 286.3L500.3 317.6L500.6 317.6L500.9 305.7L501.1 300.7L501.4 229.7L501.7 281.4L502.0 366.6L502.3 212.7L502.5 212.7L502.8 259.2L503.1 276.8L503.4 365.1L503.7 365.1L504.0 222.6L504.2 345.0L504.5 277.3L504.8 247.5L505.1 271.2L505.4 269.9L505.6 294.4L505.9 294.4L506.2 337.7L506.5 340.8L506.8 319.4L507.0 309.2L507.3 298.7L507.6 226.3L507.9 304.4L508.2 348.8L508.5 328.2L508.7 295.0L509.0 369.9L509.3 310.2L509.6 288.8L509.9 265.2L510.1 295.1L510.4 244.1L510.7 263.6L511.0 338.0L511.3 355.5L511.6 236.8L511.8 271.2L512.1 360.6L512.4 351.5L512.7 278.8L513.0 326.0L513.2 269.3L513.5 225.8L513.8 303.7L514.1 335.8L514.4 256.3L514.7 303.6L514.9 365.2L515.2 294.4L515.5 387.5L515.8 387.5L516.1 287.4L516.3 204.9L516.6 252.8L516.9 252.8L517.2 277.9L517.5 277.9L517.8 245.5L518.0 269.4L518.3 240.1L518.6 320.2L518.9 314.8L519.2 400.0L519.4 257.1L519.7 302.9L520.0 340.7L520.3 326.1L520.6 277.8L520.9 274.6L521.1 270.0L521.4 288.2L521.7 258.3L522.0 334.4L522.3 339.9L522.5 325.3L522.8 359.1L523.1 327.2L523.4 351.6L523.7 266.3L523.9 196.1L524.2 232.4L524.5 344.6L524.8 296.1L525.1 296.1L525.4 289.5L525.6 254.3L525.9 284.3L526.2 254.0L526.5 379.7L526.8 328.8L527.0 326.7L527.3 358.4L527.6 349.4L527.9 319.8L528.2 319.8L528.5 279.8L528.7 324.8L529.0 268.8L529.3 277.7L529.6 384.4L529.9 342.2L530.1 370.1L530.4 321.5L530.7 297.1L531.0 304.5L531.3 311.2L531.6 260.0L531.8 326.2L532.1 299.2L532.4 249.5L532.7 281.0L533.0 332.3L533.2 273.2L533.5 277.8L533.8 265.9L534.1 265.9L534.4 342.2L534.7 288.5L534.9 277.3L535.2 298.4L535.5 367.0L535.8 319.8L536.1 265.2L536.3 294.2L536.6 296.0L536.9 327.3L537.2 344.1L537.5 294.0L537.8 246.3L538.0 231.6L538.3 341.1L538.6 230.9L538.9 261.1L539.2 398.9L539.4 316.9L539.7 316.9L540.0 279.9L540.3 209.0L540.6 243.8L540.8 331.5L541.1 331.5L541.4 345.0L541.7 377.4L542.0 253.0L542.3 253.0L542.5 235.9L542.8 315.0L543.1 269.7L543.4 260.8L543.7 298.1L543.9 294.2L544.2 302.2L544.5 356.8L544.8 293.8L545.1 261.2L545.4 371.5L545.6 368.4L545.9 368.4L546.2 315.5L546.5 249.9L546.8 316.6L547.0 220.7L547.3 270.5L547.6 315.8L547.9 371.4L548.2 319.9L548.5 265.1L548.7 233.8L549.0 292.6L549.3 330.0L549.6 349.1L549.9 278.3L550.1 278.3L550.4 253.2L550.7 265.1L551.0 295.5L551.3 257.6L551.6 382.2L551.8 333.9L552.1 262.8L552.4 228.4L552.7 306.6L553.0 307.2L553.2 290.5L553.5 289.2L553.8 256.2L554.1 256.2L554.4 286.9L554.7 289.8L554.9 289.8L555.2 329.7L555.5 271.1L555.8 280.7L556.1 280.7L556.3 291.6L556.6 275.6L556.9 286.0L557.2 243.4L557.5 315.2L557.7 334.4L558.0 259.4L558.3 255.3L558.6 366.7L558.9 351.8L559.2 273.4L559.4 300.2L559.7 254.3L560.0 365.1L560.3 309.7L560.6 285.2L560.8 285.2L561.1 234.5L561.4 347.7L561.7 330.0L562.0 248.9L562.3 391.2L562.5 304.7L562.8 304.7L563.1 324.2L563.4 310.7L563.7 295.8L563.9 391.6L564.2 301.9L564.5 301.9L564.8 344.9L565.1 315.7L565.4 315.7L565.6 289.4L565.9 324.4L566.2 252.6L566.5 227.5L566.8 324.0L567.0 325.9L567.3 325.9L567.6 325.9L567.9 302.4L568.2 243.5L568.5 259.3L568.7 318.4L569.0 280.5L569.3 326.1L569.6 266.6L569.9 361.1L570.1 341.5L570.4 304.2L570.7 360.6L571.0 208.9L571.3 292.7L571.6 292.7L571.8 269.3L572.1 305.6L572.4 305.6L572.7 225.8L573.0 271.9L573.2 282.1L573.5 320.0L573.8 304.8L574.1 280.0L574.4 274.7L574.6 270.5L574.9 277.6L575.2 236.6L575.5 355.6L575.8 239.8L576.1 247.6L576.3 230.2L576.6 281.4L576.9 255.5L577.2 279.5L577.5 221.7L577.7 328.0L578.0 301.4L578.3 342.2L578.6 291.9L578.9 223.9L579.2 313.6L579.4 286.8L579.7 266.3L580.0 245.0L580.3 245.0L580.6 356.7L580.8 351.5L581.1 351.5L581.4 338.9L581.7 271.4L582.0 245.1L582.3 350.0L582.5 287.3L582.8 312.0L583.1 301.7L583.4 267.9L583.7 286.7L583.9 286.7L584.2 380.3L584.5 380.3L584.8 329.9L585.1 367.8L585.4 367.8L585.6 351.8L585.9 298.6L586.2 335.4L586.5 335.4L586.8 262.2L587.0 300.7L587.3 325.7L587.6 239.5L587.9 353.4L588.2 260.5L588.5 320.2L588.7 327.0L589.0 303.5L589.3 285.2L589.6 285.2L589.9 208.7L590.1 244.8L590.4 261.1L590.7 261.1L591.0 317.4L591.3 269.2L591.5 263.0L591.8 311.1L592.1 277.9L592.4 277.9L592.7 279.0L593.0 323.0L593.2 305.8L593.5 354.2L593.8 287.3L594.1 259.9L594.4 281.5L594.6 306.8L594.9 289.4L595.2 328.7L595.5 331.2L595.8 296.9L596.1 373.7L596.3 299.9L596.6 343.3L596.9 343.3L597.2 283.4L597.5 244.2L597.7 336.5L598.0 313.3L598.3 256.8L598.6 290.0L598.9 209.3L599.2 326.9L599.4 326.9L599.7 266.5L600.0 338.6L600.3 312.1L600.6 357.0L600.8 303.6L601.1 306.1L601.4 324.8L601.7 356.9L602.0 356.9L602.3 322.3L602.5 217.6L602.8 280.1L603.1 286.2L603.4 266.3L603.7 264.1L603.9 321.4L604.2 265.1L604.5 370.7L604.8 370.7L605.1 221.4L605.4 235.0L605.6 307.8L605.9 229.4L606.2 307.5L606.5 309.9L606.8 396.0L607.0 333.8L607.3 283.9L607.6 257.2L607.9 270.9L608.2 240.6L608.4 273.1L608.7 324.5L609.0 362.5L609.3 362.5L609.6 295.5L609.9 244.6L610.1 274.3L610.4 187.0L610.7 329.5L611.0 331.3L611.3 303.9L611.5 378.9L611.8 257.4L612.1 300.2L612.4 257.5L612.7 285.8L613.0 310.1L613.2 319.8L613.5 206.7L613.8 306.3L614.1 289.0L614.4 294.5L614.6 308.4L614.9 266.8L615.2 266.8L615.5 266.8L615.8 246.3L616.1 246.3L616.3 246.3L616.6 313.9L616.9 274.3L617.2 254.7L617.5 292.6L617.7 331.6L618.0 305.7L618.3 288.3L618.6 382.3L618.9 344.0L619.2 304.4L619.4 357.1L619.7 415.9L620.0 315.8L620.3 322.6L620.6 272.5L620.8 314.3L621.1 297.4L621.4 416.0L621.7 321.9L622.0 296.0L622.3 243.6L622.5 246.4L622.8 315.8L623.1 310.6L623.4 277.3L623.7 273.1L623.9 270.0L624.2 241.0L624.5 335.3L624.8 273.2L625.1 229.6L625.3 229.6L625.6 229.6L625.9 299.8L626.2 299.8L626.5 299.8L626.8 289.2L627.0 281.5L627.3 268.5L627.6 255.8L627.9 255.8L628.2 251.4L628.4 308.0L628.7 298.8L629.0 336.5L629.3 265.4L629.6 262.4L629.9 402.3L630.1 318.3L630.4 358.8L630.7 279.1L631.0 311.2L631.3 240.6L631.5 290.4L631.8 379.1L632.1 323.5L632.4 347.1L632.7 247.2L633.0 247.2L633.2 247.2L633.5 266.1L633.8 282.8L634.1 282.8L634.4 294.7L634.6 322.2L634.9 322.2L635.2 337.0L635.5 301.2L635.8 301.2L636.1 334.4L636.3 334.4L636.6 250.4L636.9 337.2L637.2 267.0L637.5 331.8L637.7 282.7L638.0 317.3L638.3 321.4L638.6 329.7L638.9 256.9L639.2 255.7L639.4 248.2L639.7 276.2L640.0 303.1L640.3 370.5L640.6 330.5L640.8 280.4L641.1 320.9L641.4 330.3L641.7 273.7L642.0 312.2L642.2 276.2L642.5 298.2L642.8 342.1L643.1 306.5L643.4 306.5L643.7 311.0L643.9 282.5L644.2 267.3L644.5 285.8L644.8 327.4L645.1 238.0L645.3 262.5L645.6 305.2L645.9 305.1L646.2 336.3L646.5 303.0L646.8 306.1L647.0 293.8L647.3 313.5L647.6 339.6L647.9 306.2L648.2 278.0L648.4 320.6L648.7 296.1L649.0 304.7L649.3 250.1L649.6 250.1L649.9 240.8L650.1 260.7L650.4 220.9L650.7 220.9L651.0 220.9L651.3 315.9L651.5 332.5L651.8 285.7L652.1 277.0L652.4 341.0L652.7 333.1L653.0 342.0L653.2 254.9L653.5 337.6L653.8 305.0L654.1 266.9L654.4 269.5L654.6 264.6L654.9 264.6L655.2 306.1L655.5 306.1L655.8 293.7L656.1 228.7L656.3 244.4L656.6 215.0L656.9 296.0L657.2 366.9L657.5 346.2L657.7 346.2L658.0 346.2L658.3 281.9L658.6 275.6L658.9 292.8L659.1 267.6L659.4 274.2L659.7 264.8L660.0 323.2L660.3 251.0L660.6 336.3L660.8 345.4L661.1 345.4L661.4 206.8L661.7 206.8L662.0 307.9L662.2 289.7L662.5 275.3L662.8 275.3L663.1 330.0L663.4 309.1L663.7 287.5L663.9 322.0L664.2 262.3L664.5 361.7L664.8 258.0L665.1 296.2L665.3 254.8L665.6 401.0L665.9 279.2L666.2 255.1L666.5 292.3L666.8 292.3L667.0 292.1L667.3 238.4L667.6 296.8L667.9 289.4L668.2 301.8L668.4 276.9L668.7 174.5L669.0 326.9L669.3 343.9L669.6 270.8L669.9 320.1L670.1 384.6L670.4 327.9L670.7 312.6L671.0 303.7L671.3 263.3L671.5 307.9L671.8 187.3L672.1 301.5L672.4 255.4L672.7 356.8L673.0 356.8L673.2 297.4L673.5 313.9L673.8 364.8L674.1 297.0L674.4 318.8L674.6 301.1L674.9 275.3L675.2 297.0L675.5 319.6L675.8 299.6L676.0 239.4L676.3 278.1L676.6 249.2L676.9 305.4L677.2 263.9L677.5 263.3L677.7 263.3L678.0 358.1L678.3 271.0L678.6 387.5L678.9 313.2L679.1 302.9L679.4 330.9L679.7 267.5L680.0 300.2L680.3 300.2L680.6 233.4L680.8 264.6L681.1 294.3L681.4 283.8L681.7 291.0L682.0 228.8L682.2 235.7L682.5 374.3L682.8 269.5L683.1 300.9L683.4 372.1L683.7 267.0L683.9 203.5L684.2 203.5L684.5 239.6L684.8 332.5L685.1 276.5L685.3 312.2L685.6 354.5L685.9 304.7L686.2 244.3L686.5 367.0L686.8 311.2L687.0 311.2L687.3 311.2L687.6 311.2L687.9 322.9L688.2 315.5L688.4 284.9L688.7 284.9L689.0 322.8L689.3 254.8L689.6 312.3L689.9 295.9L690.1 295.9L690.4 297.6L690.7 207.9L691.0 281.4L691.3 281.4L691.5 284.0L691.8 337.4L692.1 302.6L692.4 302.6L692.7 283.2L692.9 318.3L693.2 271.9L693.5 259.1L693.8 293.9L694.1 304.1L694.4 318.1L694.6 287.2L694.9 262.0L695.2 380.3L695.5 303.3L695.8 317.5L696.0 354.0L696.3 215.4L696.6 282.0L696.9 257.6L697.2 287.2L697.5 317.0L697.7 378.1L698.0 277.8L698.3 374.3L698.6 293.9L698.9 344.9L699.1 361.2L699.4 305.5L699.7 345.7L700.0 345.7L700.3 285.1L700.6 292.1L700.8 274.1L701.1 248.4L701.4 272.7L701.7 306.6L702.0 261.9L702.2 261.9L702.5 261.9L702.8 286.5L703.1 383.1L703.4 383.1L703.7 234.5L703.9 234.5L704.2 320.9L704.5 294.0L704.8 288.9L705.1 369.9L705.3 235.8L705.6 304.5L705.9 344.6L706.2 249.7L706.5 264.9L706.8 239.5L707.0 303.9L707.3 372.3L707.6 340.9L707.9 301.0L708.2 307.1L708.4 290.3L708.7 314.1L709.0 226.5L709.3 210.8L709.6 265.1L709.8 287.9L710.1 291.1L710.4 330.3L710.7 280.6L711.0 240.6L711.3 320.6L711.5 363.1L711.8 399.3L712.1 308.9L712.4 285.8L712.7 264.0L712.9 249.5L713.2 322.5L713.5 278.5L713.8 273.9L714.1 297.9L714.4 322.2L714.6 330.0L714.9 272.9L715.2 286.5L715.5 300.6L715.8 300.6L716.0 330.1L716.3 242.6L716.6 344.8L716.9 311.0L717.2 287.8L717.5 314.2L717.7 318.1L718.0 290.4L718.3 244.6L718.6 324.4L718.9 297.6L719.1 268.3L719.4 294.4L719.7 294.4L720.0 394.0L720.3 248.7L720.6 328.2L720.8 318.7L721.1 318.7L721.4 289.3L721.7 280.2L722.0 293.8L722.2 293.8L722.5 309.1L722.8 256.5L723.1 360.1L723.4 340.5L723.7 304.2L723.9 334.5L724.2 253.9L724.5 262.9L724.8 231.8L725.1 269.4L725.3 309.6L725.6 309.6L725.9 309.6L726.2 269.7L726.5 363.4L726.7 339.0L727.0 253.6L727.3 379.3L727.6 339.5L727.9 319.9L728.2 294.5L728.4 313.1L728.7 313.1L729.0 347.7L729.3 257.5L729.6 321.1L729.8 276.1L730.1 264.1L730.4 303.6L730.7 296.9L731.0 347.4L731.3 351.9L731.5 250.4L731.8 305.4L732.1 305.4L732.4 305.4L732.7 340.4L732.9 340.4L733.2 199.0L733.5 199.0L733.8 283.8L734.1 341.0L734.4 320.8L734.6 320.8L734.9 369.6L735.2 317.8L735.5 445.8L735.8 285.4L736.0 285.4L736.3 277.2L736.6 191.3L736.9 191.3L737.2 323.7L737.5 323.7L737.7 282.1L738.0 282.1L738.3 254.3L738.6 292.8L738.9 292.8L739.1 294.3L739.4 279.2L739.7 247.6L740.0 246.3L740.3 372.8L740.6 292.4L740.8 369.8L741.1 322.8L741.4 329.6L741.7 362.8L742.0 360.5L742.2 288.7L742.5 259.2L742.8 192.4L743.1 285.7L743.4 326.8L743.6 253.8L743.9 253.8L744.2 253.8L744.5 415.8L744.8 415.8L745.1 325.4L745.3 336.7L745.6 317.1L745.9 264.1L746.2 287.4L746.5 347.3L746.7 334.6L747.0 334.6L747.3 334.6L747.6 278.2L747.9 264.3L748.2 266.9L748.4 266.9L748.7 283.5L749.0 258.4L749.3 276.7L749.6 270.5L749.8 237.8L750.1 271.5L750.4 195.3L750.7 262.7L751.0 298.7L751.3 209.0L751.5 229.6L751.8 318.8L752.1 285.1L752.4 290.5L752.7 278.7L752.9 235.3L753.2 303.2L753.5 240.0L753.8 333.9L754.1 246.6L754.4 246.6L754.6 293.9L754.9 256.6L755.2 260.9L755.5 292.1L755.8 294.2L756.0 211.4L756.3 335.4L756.6 335.4L756.9 349.5L757.2 349.5L757.5 358.0L757.7 282.6L758.0 282.6L758.3 315.6L758.6 284.3L758.9 280.0L759.1 368.7L759.4 338.5L759.7 338.5L760.0 329.9L760.3 283.8L760.5 329.1L760.8 323.0L761.1 297.2L761.4 222.3L761.7 265.3L762.0 235.1L762.2 314.3L762.5 215.2L762.8 345.4L763.1 271.3L763.4 299.6L763.6 272.5L763.9 267.0L764.2 304.7L764.5 296.0L764.8 296.0L765.1 234.4L765.3 242.5L765.6 333.0L765.9 388.1L766.2 388.1L766.5 342.2L766.7 246.5L767.0 406.2L767.3 301.9L767.6 353.0L767.9 218.1L768.2 338.4L768.4 279.1L768.7 315.7L769.0 357.8L769.3 290.7L769.6 291.9L769.8 337.3L770.1 233.1L770.4 290.8L770.7 302.4L771.0 309.2L771.3 297.9L771.5 236.4L771.8 344.1L772.1 278.0L772.4 278.0L772.7 257.8L772.9 328.6L773.2 279.9L773.5 259.1L773.8 259.1L774.1 226.6L774.4 339.8L774.6 339.8L774.9 327.0L775.2 245.9L775.5 285.2L775.8 242.2L776.0 282.2L776.3 352.6L776.6 276.0L776.9 301.2L777.2 311.9L777.4 330.2L777.7 330.2L778.0 283.0L778.3 281.1L778.6 281.1L778.9 332.0L779.1 199.0L779.4 264.7L779.7 281.9L780.0 351.7L780.3 312.4L780.5 267.2L780.8 267.2L781.1 238.0L781.4 276.8L781.7 303.3L782.0 313.8L782.2 268.7L782.5 305.7L782.8 262.6L783.1 257.2L783.4 297.9L783.6 314.7L783.9 309.7L784.2 239.3L784.5 295.1L784.8 314.0L785.1 302.9L785.3 317.5L785.6 327.1L785.9 243.3L786.2 364.1L786.5 326.1L786.7 327.3L787.0 237.7L787.3 370.2L787.6 267.3L787.9 333.2L788.2 345.4L788.4 218.8L788.7 270.8L789.0 207.4L789.3 299.0L789.6 255.0L789.8 317.3L790.1 228.4L790.4 348.8L790.7 285.9L791.0 221.7L791.3 305.0L791.5 290.8L791.8 307.7L792.1 312.8L792.4 257.2L792.7 273.5L792.9 273.5L793.2 222.9L793.5 347.7L793.8 309.5L794.1 371.8L794.3 243.8L794.6 274.1L794.9 281.9L795.2 318.3L795.5 329.6L795.8 317.7L796.0 261.5L796.3 270.2L796.6 356.7L796.9 306.6L797.2 279.4L797.4 279.4L797.7 322.3L798.0 284.0L798.3 276.0L798.6 276.0L798.9 276.0L799.1 330.9L799.4 319.8L799.7 319.1L800.0 241.0L800.3 313.6L800.5 240.9L800.8 222.4L801.1 331.7L801.4 323.4L801.7 297.5L802.0 328.0L802.2 225.6L802.5 305.7L802.8 321.7L803.1 294.0L803.4 242.8L803.6 236.2L803.9 281.5L804.2 322.6L804.5 240.7L804.8 328.7L805.1 328.7L805.3 328.7L805.6 295.9L805.9 295.9L806.2 277.0L806.5 343.0L806.7 253.0L807.0 253.0L807.3 327.7L807.6 227.8L807.9 326.9L808.2 272.4L808.4 248.4L808.7 301.6L809.0 333.9L809.3 305.3L809.6 327.0L809.8 292.5L810.1 292.5L810.4 315.1L810.7 324.2L811.0 309.5L811.2 309.5L811.5 224.3L811.8 224.3L812.1 224.3L812.4 249.5L812.7 310.2L812.9 303.5L813.2 345.9L813.5 273.0L813.8 252.6L814.1 267.1L814.3 325.9L814.6 317.0L814.9 317.0L815.2 318.5L815.5 318.5L815.8 301.6L816.0 290.3L816.3 271.2L816.6 331.4L816.9 316.8L817.2 316.8L817.4 318.3L817.7 363.3L818.0 327.9L818.3 294.3L818.6 215.0L818.9 369.0L819.1 316.0L819.4 280.8L819.7 290.2L820.0 200.6L820.3 200.6L820.5 231.3L820.8 274.2L821.1 334.7L821.4 284.9L821.7 302.6L822.0 346.7L822.2 275.7L822.5 303.7L822.8 305.1L823.1 202.5L823.4 252.4L823.6 320.6L823.9 303.0L824.2 353.3L824.5 406.8L824.8 376.9L825.1 269.0L825.3 358.3L825.6 258.4L825.9 341.4L826.2 266.7L826.5 370.3L826.7 199.3L827.0 348.6L827.3 271.8L827.6 231.5L827.9 313.2L828.1 271.2L828.4 387.7L828.7 370.3L829.0 333.1L829.3 274.4L829.6 328.1L829.8 236.2L830.1 334.5L830.4 247.8L830.7 301.4L831.0 270.9L831.2 327.0L831.5 355.6L831.8 254.7L832.1 292.2L832.4 309.1L832.7 291.9L832.9 291.9L833.2 307.0L833.5 330.8L833.8 330.8L834.1 330.8L834.3 298.3L834.6 225.9L834.9 276.7L835.2 303.7L835.5 303.7L835.8 277.2L836.0 277.2L836.3 283.7L836.6 335.2L836.9 254.5L837.2 379.1L837.4 339.6L837.7 339.6L838.0 228.4L838.3 283.5L838.6 257.9L838.9 349.9L839.1 354.3L839.4 354.3L839.7 333.1L840.0 183.0L840.3 243.9L840.5 302.6L840.8 302.6L841.1 283.9L841.4 361.0L841.7 271.4L842.0 346.9L842.2 315.7L842.5 277.8L842.8 284.3L843.1 260.3L843.4 303.5L843.6 317.4L843.9 296.8L844.2 353.5L844.5 292.2L844.8 247.1L845.0 285.8L845.3 285.8L845.6 328.0L845.9 327.8L846.2 296.6L846.5 263.5L846.7 302.5L847.0 341.1L847.3 255.1L847.6 295.9L847.9 295.9L848.1 267.4L848.4 335.5L848.7 212.0L849.0 212.0L849.3 379.4L849.6 359.9L849.8 340.4L850.1 238.9L850.4 323.4L850.7 323.4L851.0 339.3L851.2 314.7L851.5 312.7L851.8 309.9L852.1 264.0L852.4 274.2L852.7 377.7L852.9 265.0L853.2 259.4L853.5 308.6L853.8 322.2L854.1 291.2L854.3 246.2L854.6 246.2L854.9 324.7L855.2 219.0L855.5 259.7L855.8 281.9L856.0 313.5L856.3 325.3L856.6 291.1L856.9 252.8L857.2 275.7L857.4 347.0L857.7 288.1L858.0 311.1L858.3 241.8L858.6 311.5L858.9 311.5L859.1 335.4L859.4 270.0L859.7 242.5L860.0 289.8L860.3 292.2L860.5 293.6L860.8 293.6L861.1 267.9L861.4 302.7L861.7 331.5L861.9 310.3L862.2 264.2L862.5 264.2L862.8 298.3L863.1 271.7L863.4 271.7L863.6 329.6L863.9 318.1L864.2 304.7L864.5 297.7L864.8 295.1L865.0 303.6L865.3 256.5L865.6 281.8L865.9 301.2L866.2 301.2L866.5 324.5L866.7 313.2L867.0 331.8L867.3 331.8L867.6 346.5L867.9 233.0L868.1 199.9L868.4 313.0L868.7 313.0L869.0 303.7L869.3 297.4L869.6 290.3L869.8 315.6L870.1 324.9L870.4 323.2L870.7 384.7L871.0 265.4L871.2 234.7L871.5 361.6L871.8 234.4L872.1 197.9L872.4 197.9L872.7 325.6L872.9 225.3L873.2 231.2L873.5 336.4L873.8 314.0L874.1 201.3L874.3 201.3L874.6 201.3L874.9 233.1L875.2 198.4L875.5 306.2L875.8 398.4L876.0 231.4L876.3 307.2L876.6 304.6L876.9 256.7L877.2 322.4L877.4 267.4L877.7 247.6L878.0 257.3L878.3 228.3L878.6 282.7L878.8 255.5L879.1 368.8L879.4 216.4L879.7 251.7L880.0 250.5L880.3 362.7L880.5 309.0L880.8 207.2L881.1 229.2L881.4 300.5L881.7 312.4L881.9 304.2L882.2 299.0L882.5 362.3L882.8 270.8L883.1 270.8L883.4 279.4L883.6 329.1L883.9 348.9L884.2 278.0L884.5 320.4L884.8 301.7L885.0 246.8L885.3 317.0L885.6 346.2L885.9 321.0L886.2 316.8L886.5 336.5L886.7 326.4L887.0 304.7L887.3 284.4L887.6 278.7L887.9 240.5L888.1 297.1L888.4 368.8L888.7 276.4L889.0 303.2L889.3 303.2L889.6 303.2L889.8 294.6L890.1 291.8L890.4 292.3L890.7 317.1L891.0 274.9L891.2 262.7L891.5 320.5L891.8 281.4L892.1 204.9L892.4 334.7L892.7 335.5L892.9 335.5L893.2 331.1L893.5 350.3L893.8 300.9L894.1 303.4L894.3 202.1L894.6 304.0L894.9 309.2L895.2 322.2L895.5 322.2L895.7 387.1L896.0 287.8L896.3 286.6L896.6 274.7L896.9 283.9L897.2 319.1L897.4 319.1L897.7 319.1L898.0 319.1L898.3 309.7L898.6 236.1L898.8 268.2L899.1 365.4L899.4 279.9L899.7 347.3L900.0 347.3L900.3 313.3L900.5 284.6L900.8 272.1L901.1 288.2L901.4 335.1L901.7 282.1L901.9 400.9L902.2 277.6L902.5 314.5L902.8 315.0L903.1 366.5L903.4 236.0L903.6 282.4L903.9 295.3L904.2 347.0L904.5 270.8L904.8 320.1L905.0 320.1L905.3 271.4L905.6 338.3L905.9 251.7L906.2 320.2L906.5 290.3L906.7 326.0L907.0 283.0L907.3 283.0L907.6 292.8L907.9 266.1L908.1 343.7L908.4 302.7L908.7 291.8L909.0 239.6L909.3 282.7L909.6 287.9L909.8 295.6L910.1 296.1L910.4 296.1L910.7 296.1L911.0 320.3L911.2 320.3L911.5 304.4L911.8 409.2L912.1 218.3L912.4 344.5L912.6 267.8L912.9 265.9L913.2 265.9L913.5 256.4L913.8 310.8L914.1 310.8L914.3 276.3L914.6 235.2L914.9 291.0L915.2 295.9L915.5 240.2L915.7 311.5L916.0 282.1L916.3 327.8L916.6 366.5L916.9 310.3L917.2 267.8L917.4 259.5L917.7 280.6L918.0 226.2L918.3 226.2L918.6 318.3L918.8 270.7L919.1 270.7L919.4 264.9L919.7 365.8L920.0 342.1L920.3 280.1L920.5 258.3L920.8 343.3L921.1 249.6L921.4 312.9L921.7 312.9L921.9 313.2L922.2 307.1L922.5 307.1L922.8 307.1L923.1 365.4L923.4 205.5L923.6 205.5L923.9 263.0L924.2 327.9L924.5 366.5L924.8 211.4L925.0 332.8L925.3 320.9L925.6 309.9L925.9 341.2L926.2 295.4L926.5 266.7L926.7 292.8L927.0 220.6L927.3 305.6L927.6 334.4L927.9 334.4L928.1 324.0L928.4 247.0L928.7 288.3L929.0 225.3L929.3 239.0L929.5 239.6L929.8 377.4L930.1 335.4L930.4 279.1L930.7 310.2L931.0 248.8L931.2 245.3L931.5 245.3L931.8 241.6L932.1 321.0L932.4 321.0L932.6 328.7L932.9 325.9L933.2 325.9L933.5 375.6L933.8 265.4L934.1 238.8L934.3 374.4L934.6 303.7L934.9 233.4L935.2 261.4L935.5 284.7L935.7 285.3L936.0 328.3L936.3 348.6L936.6 306.6L936.9 246.4L937.2 327.7L937.4 360.0L937.7 324.2L938.0 324.2L938.3 326.7L938.6 267.1L938.8 292.7L939.1 331.0L939.4 318.8L939.7 327.4L940.0 236.1L940.3 292.2L940.5 271.3L940.8 239.2L941.1 232.8L941.4 363.5L941.7 275.2L941.9 385.8L942.2 267.8L942.5 317.7L942.8 288.3L943.1 291.8L943.4 315.4L943.6 270.4L943.9 266.5L944.2 238.4L944.5 280.2L944.8 301.1L945.0 312.5L945.3 298.9L945.6 278.5L945.9 298.6L946.2 227.1L946.4 333.0L946.7 300.8L947.0 300.8L947.3 387.6L947.6 392.3L947.9 336.9L948.1 300.7L948.4 293.0L948.7 305.5L949.0 305.9L949.3 320.5L949.5 320.5L949.8 232.6L950.1 291.4L950.4 290.8L950.7 281.0L951.0 210.6L951.2 369.5L951.5 276.1L951.8 276.1L952.1 253.7L952.4 274.9L952.6 296.3L952.9 231.0L953.2 276.5L953.5 249.1L953.8 249.1L954.1 367.3L954.3 253.4L954.6 298.3L954.9 318.0L955.2 293.6L955.5 287.7L955.7 340.2L956.0 290.2L956.3 291.6L956.6 266.2L956.9 240.8L957.2 276.4L957.4 332.9L957.7 264.6L958.0 251.7L958.3 327.9L958.6 321.9L958.8 321.9L959.1 321.9L959.4 276.9L959.7 327.6L960.0 244.0L960.3 278.8L960.5 322.5L960.8 344.1L961.1 245.1L961.4 319.2L961.7 347.6L961.9 295.8L962.2 261.2L962.5 314.9L962.8 286.8L963.1 286.8L963.3 265.7L963.6 283.9L963.9 311.7L964.2 286.3L964.5 288.1L964.8 275.7L965.0 275.7L965.3 275.5L965.6 287.0L965.9 329.3L966.2 297.5L966.4 223.7L966.7 223.7L967.0 288.1L967.3 302.4L967.6 266.0L967.9 236.9L968.1 236.9L968.4 326.6L968.7 258.2L969.0 258.2L969.3 309.0L969.5 314.4L969.8 304.5L970.1 306.6L970.4 345.5L970.7 345.5L971.0 269.3L971.2 301.2L971.5 251.2L971.8 279.7L972.1 336.7L972.4 344.2L972.6 360.8L972.9 234.6L973.2 289.9L973.5 299.2L973.8 275.9L974.1 357.0L974.3 319.6L974.6 334.0L974.9 335.7L975.2 354.8L975.5 345.7L975.7 244.9L976.0 314.1L976.3 301.6L976.6 332.7L976.9 257.3L977.2 346.5L977.4 346.5L977.7 339.4L978.0 410.3L978.3 328.5L978.6 275.6L978.8 335.5L979.1 335.7L979.4 326.1L979.7 284.4L980.0 302.7L980.2 317.1L980.5 352.7L980.8 284.4L981.1 377.3L981.4 213.5L981.7 348.1L981.9 374.7L982.2 374.7L982.5 320.7L982.8 317.9L983.1 312.9L983.3 359.8L983.6 262.7L983.9 292.7L984.2 283.3L984.5 248.5L984.8 334.6L985.0 291.3L985.3 386.2L985.6 299.8L985.9 239.2L986.2 266.4L986.4 323.1L986.7 308.5L987.0 282.2L987.3 386.5L987.6 330.2L987.9 330.2L988.1 299.1L988.4 322.8L988.7 321.7L989.0 321.7L989.3 282.9L989.5 328.7L989.8 337.6L990.1 213.5L990.4 305.5L990.7 305.5L991.0 305.5L991.2 284.9L991.5 284.9L991.8 337.9L992.1 232.3L992.4 285.2L992.6 286.7L992.9 385.5L993.2 304.8L993.5 374.6L993.8 324.6L994.1 281.7L994.3 266.0L994.6 390.5L994.9 259.7L995.2 288.9L995.5 369.6L995.7 223.8L996.0 373.5L996.3 324.3L996.6 310.7L996.9 297.5L997.1 374.0L997.4 313.9L997.7 313.9L998.0 270.7L998.3 272.1L998.6 335.6L998.8 302.7L999.1 271.7L999.4 249.3L999.7 281.4L1000.0 325.3L1000.2 331.1L1000.5 286.8L1000.8 334.4L1001.1 270.4L1001.4 308.8L1001.7 296.7L1001.9 351.1L1002.2 326.7L1002.5 225.2L1002.8 226.8L1003.1 245.0L1003.3 296.6L1003.6 300.9L1003.9 301.9L1004.2 327.0L1004.5 325.9L1004.8 325.9L1005.0 325.9L1005.3 324.2L1005.6 337.9L1005.9 353.7L1006.2 353.7L1006.4 285.6L1006.7 291.7L1007.0 291.7L1007.3 278.7L1007.6 312.5L1007.9 307.4L1008.1 290.0L1008.4 315.3L1008.7 252.1L1009.0 252.4L1009.3 314.3L1009.5 232.8L1009.8 297.7L1010.1 279.2L1010.4 315.2L1010.7 249.7L1011.0 380.8L1011.2 304.9L1011.5 339.0L1011.8 339.0L1012.1 306.0L1012.4 320.3L1012.6 310.1L1012.9 285.0L1013.2 278.9L1013.5 253.8L1013.8 319.4L1014.0 328.0L1014.3 312.6L1014.6 332.0L1014.9 305.0L1015.2 305.0L1015.5 311.6L1015.7 308.8L1016.0 218.1L1016.3 360.0L1016.6 277.2L1016.9 292.9L1017.1 317.0L1017.4 305.0L1017.7 298.3L1018.0 301.5L1018.3 326.5L1018.6 294.1L1018.8 290.9L1019.1 300.1L1019.4 264.9L1019.7 283.3L1020.0 276.6L1020.2 316.6L1020.5 322.0L1020.8 322.0L1021.1 317.1L1021.4 258.0L1021.7 353.8L1021.9 321.5L1022.2 315.4L1022.5 358.5L1022.8 358.5L1023.1 261.4L1023.3 265.2L1023.6 264.7L1023.9 282.5L1024.2 295.8L1024.5 311.6L1024.8 311.6L1025.0 311.6L1025.3 323.8L1025.6 298.2L1025.9 334.6L1026.2 276.3L1026.4 291.0L1026.7 291.0L1027.0 297.2L1027.3 375.1L1027.6 286.7L1027.9 327.9L1028.1 294.2L1028.4 274.2L1028.7 337.2L1029.0 337.2L1029.3 279.2L1029.5 334.0L1029.8 261.3L1030.1 255.4L1030.4 261.4L1030.7 306.5L1030.9 300.0L1031.2 208.5L1031.5 297.3L1031.8 327.1L1032.1 292.6L1032.4 286.7L1032.6 326.1L1032.9 267.3L1033.2 315.9L1033.5 322.2L1033.8 244.3L1034.0 378.9L1034.3 263.4L1034.6 239.4L1034.9 299.2L1035.2 299.2L1035.5 296.3L1035.7 314.1L1036.0 269.2L1036.3 269.2L1036.6 311.7L1036.9 312.7L1037.1 323.5L1037.4 322.1L1037.7 277.2L1038.0 222.5L1038.3 222.5L1038.6 290.4L1038.8 219.1L1039.1 329.5L1039.4 330.8L1039.7 289.9L1040.0 332.9L1040.2 331.6L1040.5 317.2L1040.8 318.9L1041.1 335.7L1041.4 315.9L1041.7 260.4L1041.9 285.0L1042.2 324.0L1042.5 292.1L1042.8 300.8L1043.1 285.4L1043.3 266.6L1043.6 266.0L1043.9 266.0L1044.2 313.2L1044.5 313.2L1044.8 313.2L1045.0 325.1L1045.3 252.2L1045.6 295.3L1045.9 322.7L1046.2 284.9L1046.4 280.0L1046.7 280.0L1047.0 258.8L1047.3 314.3L1047.6 282.1L1047.8 339.1L1048.1 275.1L1048.4 232.9L1048.7 318.7L1049.0 338.6L1049.3 317.7L1049.5 317.7L1049.8 302.3L1050.1 282.6L1050.4 224.0L1050.7 315.0L1050.9 260.5L1051.2 283.9L1051.5 324.2L1051.8 263.2L1052.1 282.2L1052.4 318.1L1052.6 226.1L1052.9 271.3L1053.2 271.1L1053.5 377.1L1053.8 396.7L1054.0 323.8L1054.3 323.8L1054.6 258.8L1054.9 297.9L1055.2 297.9L1055.5 316.1L1055.7 366.2L1056.0 311.3L1056.3 306.1L1056.6 304.8L1056.9 373.6L1057.1 312.5L1057.4 275.9L1057.7 296.2L1058.0 296.2L1058.3 313.1L1058.6 287.5L1058.8 327.2L1059.1 230.2L1059.4 351.9L1059.7 328.2L1060.0 370.6L1060.2 268.5L1060.5 262.7L1060.8 237.4L1061.1 277.4L1061.4 230.8L1061.7 301.9L1061.9 379.6L1062.2 282.6L1062.5 351.6L1062.8 248.8L1063.1 338.3L1063.3 274.8L1063.6 282.6L1063.9 318.6L1064.2 333.5L1064.5 333.5L1064.7 360.6L1065.0 256.0L1065.3 322.2L1065.6 268.3L1065.9 294.5L1066.2 304.3L1066.4 349.2L1066.7 204.0L1067.0 254.6L1067.3 309.2L1067.6 225.0L1067.8 374.4L1068.1 324.4L1068.4 251.6L1068.7 264.9L1069.0 343.6L1069.3 337.3L1069.5 283.2L1069.8 324.1L1070.1 181.7L1070.4 293.3L1070.7 283.9L1070.9 385.3L1071.2 332.4L1071.5 286.2L1071.8 332.4L1072.1 299.4L1072.4 344.3L1072.6 287.4L1072.9 327.7L1073.2 323.7L1073.5 323.7L1073.8 267.4L1074.0 307.8L1074.3 284.4L1074.6 234.8L1074.9 284.3L1075.2 325.5L1075.5 298.2L1075.7 327.5L1076.0 334.5L1076.3 305.6L1076.6 296.5L1076.9 293.2L1077.1 298.0L1077.4 318.1L1077.7 297.4L1078.0 297.4L1078.3 220.9L1078.6 283.1L1078.8 167.8L1079.1 303.2L1079.4 349.3L1079.7 339.9L1080.0 277.4L1080.2 310.7L1080.5 253.0L1080.8 253.0L1081.1 374.6L1081.4 356.6L1081.6 294.0L1081.9 329.5L1082.2 335.0L1082.5 256.2L1082.8 315.3L1083.1 315.3L1083.3 272.6L1083.6 272.6L1083.9 251.6L1084.2 235.1L1084.5 235.1L1084.7 253.5L1085.0 339.1L1085.3 252.3L1085.6 327.0L1085.9 319.1L1086.2 286.3L1086.4 306.9L1086.7 368.3L1087.0 312.3" stroke="#a69fd6" />
<path d="M242.0 484.1L242.3 484.1L242.6 484.1L242.8 484.1L243.1 484.1L243.4 484.1L243.7 484.1L244.0 484.1L244.3 484.1L244.5 484.1L244.8 484.1L245.1 484.1L245.4 484.1L245.7 484.1L245.9 484.1L246.2 484.1L246.5 484.1L246.8 484.1L247.1 484.1L247.4 484.1L247.6 484.1L247.9 484.1L248.2 484.1L248.5 484.1L248.8 484.1L249.0 484.1L249.3 484.1L249.6 484.1L249.9 484.1L250.2 484.1L250.5 484.1L250.7 484.1L251.0 484.1L251.3 484.1L251.6 484.1L251.9 474.9L252.1 474.9L252.4 474.9L252.7 474.9L253.0 465.6L253.3 465.6L253.5 465.6L253.8 465.6L254.1 465.6L254.4 465.6L254.7 447.1L255.0 447.1L255.2 447.1L255.5 447.1L255.8 447.1L256.1 447.1L256.4 412.5L256.6 412.5L256.9 412.5L257.2 412.5L257.5 412.5L257.8 412.5L258.1 400.3L258.3 377.5L258.6 364.3L258.9 368.6L259.2 364.8L259.5 341.0L259.7 345.5L260.0 325.2L260.3 306.1L260.6 345.6L260.9 304.5L261.2 263.0L261.4 338.8L261.7 249.6L262.0 233.6L262.3 310.0L262.6 267.0L262.8 285.5L263.1 365.8L263.4 241.9L263.7 251.9L264.0 330.9L264.3 330.9L264.5 317.2L264.8 238.7L265.1 304.3L265.4 250.7L265.7 250.7L265.9 368.4L266.2 254.1L266.5 307.7L266.8 263.7L267.1 212.1L267.4 268.5L267.6 305.9L267.9 287.2L268.2 311.8L268.5 248.8L268.8 233.1L269.0 402.9L269.3 322.3L269.6 311.7L269.9 243.5L270.2 294.1L270.4 234.3L270.7 234.3L271.0 338.2L271.3 298.5L271.6 286.3L271.9 342.0L272.1 342.0L272.4 350.2L272.7 281.8L273.0 281.8L273.3 254.4L273.5 249.3L273.8 249.3L274.1 261.2L274.4 303.1L274.7 210.2L275.0 246.9L275.2 286.9L275.5 286.9L275.8 296.7L276.1 319.5L276.4 234.4L276.6 297.6L276.9 355.3L277.2 337.7L277.5 363.2L277.8 308.7L278.1 271.0L278.3 271.4L278.6 292.8L278.9 274.4L279.2 226.4L279.5 262.7L279.7 289.6L280.0 289.6L280.3 316.2L280.6 293.4L280.9 221.0L281.2 334.1L281.4 293.9L281.7 293.9L282.0 378.0L282.3 267.6L282.6 359.0L282.8 296.5L283.1 337.6L283.4 337.6L283.7 290.7L284.0 346.8L284.3 424.5L284.5 263.3L284.8 204.3L285.1 330.4L285.4 307.5L285.7 310.9L285.9 346.5L286.2 277.4L286.5 366.7L286.8 321.2L287.1 205.1L287.3 249.8L287.6 267.0L287.9 248.9L288.2 279.2L288.5 311.1L288.8 295.3L289.0 343.1L289.3 378.3L289.6 283.3L289.9 335.0L290.2 277.8L290.4 246.9L290.7 288.5L291.0 284.4L291.3 329.4L291.6 324.3L291.9 310.3L292.1 318.2L292.4 276.7L292.7 276.7L293.0 243.6L293.3 308.9L293.5 279.3L293.8 261.0L294.1 300.6L294.4 265.4L294.7 325.0L295.0 249.0L295.2 249.0L295.5 259.6L295.8 306.1L296.1 230.3L296.4 337.7L296.6 286.1L296.9 282.2L297.2 238.8L297.5 326.7L297.8 304.8L298.1 315.3L298.3 365.8L298.6 359.0L298.9 263.0L299.2 263.0L299.5 308.3L299.7 265.3L300.0 287.7L300.3 331.8L300.6 344.4L300.9 277.9L301.2 362.2L301.4 276.7L301.7 282.2L302.0 217.6L302.3 217.1L302.6 307.5L302.8 290.6L303.1 218.4L303.4 289.7L303.7 369.5L304.0 352.8L304.2 297.1L304.5 297.1L304.8 297.1L305.1 310.4L305.4 323.4L305.7 278.9L305.9 241.4L306.2 241.4L306.5 293.7L306.8 349.8L307.1 286.6L307.3 367.5L307.6 288.2L307.9 254.8L308.2 304.7L308.5 321.0L308.8 292.6L309.0 299.7L309.3 350.8L309.6 302.4L309.9 209.6L310.2 248.4L310.4 271.4L310.7 308.0L311.0 271.1L311.3 349.7L311.6 208.9L311.9 240.3L312.1 305.6L312.4 277.9L312.7 335.8L313.0 353.2L313.3 318.7L313.5 271.4L313.8 280.3L314.1 294.5L314.4 324.2L314.7 258.3L315.0 191.5L315.2 305.7L315.5 298.1L315.8 311.0L316.1 298.6L316.4 366.0L316.6 366.0L316.9 341.2L317.2 358.6L317.5 289.7L317.8 239.4L318.1 291.4L318.3 379.7L318.6 379.7L318.9 254.1L319.2 319.0L319.5 245.3L319.7 285.3L320.0 251.8L320.3 242.5L320.6 310.9L320.9 301.8L321.1 281.6L321.4 270.6L321.7 332.3L322.0 313.8L322.3 269.5L322.6 249.1L322.8 375.4L323.1 294.2L323.4 234.7L323.7 208.8L324.0 345.1L324.2 336.3L324.5 317.3L324.8 317.3L325.1 290.6L325.4 308.1L325.7 324.7L325.9 325.8L326.2 308.2L326.5 271.3L326.8 271.3L327.1 271.7L327.3 271.7L327.6 326.5L327.9 296.2L328.2 393.1L328.5 290.6L328.8 272.3L329.0 319.7L329.3 314.7L329.6 296.8L329.9 296.8L330.2 292.9L330.4 269.2L330.7 269.2L331.0 299.9L331.3 295.7L331.6 345.0L331.9 320.9L332.1 268.9L332.4 279.4L332.7 328.7L333.0 285.1L333.3 387.8L333.5 301.7L333.8 334.1L334.1 330.6L334.4 302.0L334.7 288.8L335.0 288.8L335.2 363.0L335.5 363.0L335.8 288.3L336.1 270.6L336.4 266.8L336.6 322.2L336.9 283.2L337.2 278.6L337.5 278.6L337.8 337.5L338.0 259.4L338.3 322.2L338.6 280.1L338.9 280.1L339.2 317.8L339.5 327.9L339.7 280.6L340.0 306.5L340.3 306.5L340.6 296.1L340.9 296.7L341.1 353.2L341.4 353.2L341.7 353.2L342.0 249.5L342.3 301.0L342.6 301.0L342.8 315.0L343.1 420.8L343.4 255.0L343.7 290.7L344.0 256.7L344.2 328.7L344.5 220.5L344.8 220.5L345.1 246.0L345.4 389.5L345.7 267.8L345.9 279.8L346.2 295.6L346.5 295.6L346.8 294.1L347.1 305.6L347.3 398.5L347.6 352.5L347.9 352.5L348.2 351.9L348.5 309.5L348.8 265.6L349.0 281.8L349.3 261.1L349.6 298.7L349.9 298.7L350.2 263.6L350.4 263.6L350.7 246.0L351.0 355.4L351.3 323.2L351.6 323.2L351.9 323.2L352.1 301.2L352.4 309.5L352.7 356.3L353.0 313.8L353.3 254.9L353.5 244.9L353.8 289.4L354.1 313.2L354.4 295.9L354.7 311.0L354.9 255.6L355.2 267.5L355.5 276.3L355.8 276.3L356.1 315.4L356.4 230.8L356.6 302.8L356.9 299.2L357.2 178.8L357.5 322.4L357.8 322.4L358.0 322.4L358.3 298.5L358.6 239.4L358.9 308.6L359.2 308.6L359.5 264.1L359.7 286.8L360.0 362.3L360.3 362.3L360.6 285.5L360.9 282.7L361.1 289.7L361.4 408.0L361.7 253.5L362.0 277.0L362.3 247.5L362.6 247.5L362.8 279.5L363.1 271.1L363.4 303.9L363.7 268.9L364.0 268.9L364.2 242.6L364.5 222.3L364.8 260.8L365.1 271.6L365.4 271.6L365.7 271.6L365.9 280.0L366.2 297.3L366.5 280.9L366.8 321.2L367.1 282.7L367.3 266.0L367.6 290.6L367.9 280.1L368.2 280.1L368.5 280.1L368.8 364.9L369.0 305.6L369.3 296.1L369.6 346.5L369.9 346.5L370.2 358.7L370.4 348.2L370.7 293.1L371.0 304.7L371.3 315.2L371.6 318.9L371.8 294.9L372.1 307.5L372.4 258.5L372.7 253.8L373.0 325.4L373.3 325.4L373.5 305.4L373.8 305.4L374.1 305.4L374.4 267.2L374.7 265.5L374.9 265.5L375.2 329.6L375.5 191.7L375.8 191.7L376.1 313.7L376.4 289.3L376.6 236.5L376.9 345.3L377.2 240.7L377.5 290.6L377.8 290.6L378.0 371.9L378.3 217.5L378.6 322.2L378.9 322.5L379.2 269.1L379.5 378.9L379.7 378.9L380.0 358.5L380.3 280.8L380.6 306.4L380.9 237.5L381.1 297.1L381.4 270.6L381.7 308.0L382.0 285.7L382.3 285.7L382.6 320.8L382.8 320.8L383.1 291.7L383.4 280.1L383.7 280.1L384.0 314.0L384.2 269.0L384.5 280.5L384.8 338.2L385.1 338.2L385.4 254.5L385.7 276.1L385.9 293.3L386.2 276.8L386.5 370.3L386.8 249.4L387.1 249.4L387.3 289.6L387.6 289.6L387.9 332.1L388.2 346.7L388.5 269.6L388.7 263.4L389.0 219.1L389.3 280.4L389.6 280.4L389.9 277.2L390.2 356.6L390.4 277.7L390.7 330.7L391.0 263.4L391.3 263.4L391.6 289.6L391.8 246.9L392.1 246.9L392.4 258.4L392.7 258.4L393.0 257.8L393.3 327.0L393.5 251.8L393.8 158.2L394.1 303.0L394.4 294.4L394.7 265.2L394.9 366.1L395.2 366.1L395.5 279.2L395.8 286.9L396.1 274.0L396.4 264.4L396.6 344.0L396.9 344.0L397.2 300.2L397.5 313.3L397.8 313.3L398.0 228.4L398.3 251.9L398.6 325.8L398.9 361.6L399.2 279.8L399.5 246.3L399.7 265.7L400.0 316.1L400.3 219.9L400.6 327.7L400.9 285.1L401.1 266.3L401.4 320.0L401.7 304.0L402.0 296.4L402.3 327.5L402.6 325.0L402.8 359.8L403.1 292.0L403.4 292.0L403.7 329.4L404.0 340.2L404.2 289.2L404.5 289.2L404.8 285.5L405.1 385.1L405.4 266.7L405.6 385.3L405.9 207.0L406.2 207.0L406.5 204.5L406.8 303.5L407.1 289.1L407.3 279.3L407.6 279.3L407.9 346.7L408.2 302.7L408.5 403.0L408.7 313.4L409.0 238.7L409.3 263.3L409.6 352.8L409.9 306.5L410.2 307.2L410.4 341.6L410.7 247.4L411.0 296.2L411.3 288.3L411.6 367.3L411.8 324.5L412.1 260.6L412.4 247.2L412.7 354.0L413.0 294.0L413.3 266.9L413.5 273.2L413.8 305.1L414.1 298.3L414.4 260.4L414.7 256.6L414.9 348.6L415.2 250.6L415.5 250.6L415.8 282.9L416.1 330.5L416.4 338.4L416.6 308.3L416.9 203.5L417.2 219.4L417.5 219.4L417.8 285.8L418.0 233.2L418.3 357.9L418.6 317.1L418.9 334.6L419.2 250.8L419.5 319.7L419.7 357.2L420.0 296.0L420.3 336.1L420.6 315.1L420.9 267.6L421.1 290.6L421.4 290.8L421.7 324.4L422.0 292.0L422.3 297.7L422.5 344.2L422.8 339.5L423.1 315.0L423.4 298.4L423.7 375.9L424.0 301.2L424.2 332.5L424.5 383.8L424.8 271.2L425.1 235.7L425.4 287.4L425.6 306.8L425.9 268.1L426.2 296.9L426.5 324.3L426.8 272.3L427.1 244.7L427.3 288.7L427.6 351.2L427.9 284.8L428.2 290.8L428.5 249.1L428.7 301.7L429.0 276.4L429.3 324.8L429.6 369.3L429.9 281.1L430.2 346.4L430.4 293.8L430.7 303.9L431.0 306.3L431.3 287.4L431.6 336.2L431.8 326.5L432.1 289.5L432.4 300.2L432.7 352.1L433.0 271.6L433.3 260.0L433.5 260.0L433.8 290.6L434.1 342.7L434.4 257.8L434.7 269.4L434.9 357.2L435.2 282.8L435.5 334.7L435.8 264.4L436.1 332.7L436.4 260.6L436.6 239.1L436.9 272.2L437.2 257.1L437.5 353.5L437.8 377.0L438.0 242.0L438.3 261.6L438.6 288.6L438.9 263.9L439.2 220.8L439.4 292.7L439.7 272.5L440.0 235.3L440.3 308.3L440.6 326.5L440.9 318.8L441.1 318.8L441.4 343.2L441.7 380.8L442.0 290.4L442.3 334.3L442.5 304.6L442.8 315.5L443.1 275.1L443.4 310.2L443.7 293.6L444.0 226.7L444.2 255.2L444.5 273.2L444.8 313.7L445.1 347.9L445.4 323.7L445.6 250.4L445.9 351.8L446.2 327.3L446.5 350.7L446.8 333.7L447.1 271.4L447.3 271.4L447.6 375.3L447.9 284.9L448.2 284.9L448.5 307.4L448.7 196.7L449.0 196.7L449.3 407.1L449.6 271.9L449.9 246.5L450.2 246.5L450.4 246.5L450.7 359.7L451.0 278.8L451.3 305.0L451.6 323.8L451.8 287.2L452.1 356.6L452.4 356.6L452.7 286.6L453.0 239.2L453.3 300.3L453.5 395.4L453.8 427.7L454.1 352.4L454.4 301.5L454.7 328.4L454.9 332.3L455.2 316.2L455.5 331.9L455.8 276.8L456.1 273.5L456.3 307.0L456.6 284.5L456.9 307.6L457.2 323.1L457.5 344.5L457.8 317.2L458.0 282.6L458.3 262.1L458.6 332.1L458.9 332.1L459.2 289.4L459.4 272.9L459.7 339.6L460.0 340.2L460.3 256.0L460.6 347.4L460.9 309.2L461.1 276.4L461.4 334.5L461.7 334.1L462.0 242.3L462.3 280.7L462.5 234.6L462.8 295.4L463.1 301.0L463.4 324.5L463.7 302.8L464.0 249.4L464.2 319.2L464.5 291.2L464.8 276.4L465.1 328.2L465.4 325.0L465.6 317.6L465.9 293.2L466.2 276.1L466.5 328.6L466.8 395.6L467.1 248.4L467.3 311.2L467.6 293.2L467.9 261.7L468.2 286.1L468.5 333.4L468.7 322.6L469.0 279.7L469.3 309.6L469.6 324.3L469.9 324.3L470.2 363.9L470.4 260.0L470.7 324.2L471.0 296.1L471.3 309.8L471.6 298.6L471.8 296.2L472.1 348.9L472.4 324.6L472.7 302.6L473.0 276.3L473.2 314.7L473.5 390.2L473.8 335.4L474.1 330.5L474.4 182.3L474.7 182.3L474.9 182.3L475.2 287.2L475.5 273.1L475.8 327.7L476.1 258.6L476.3 258.6L476.6 294.7L476.9 361.9L477.2 300.5L477.5 309.6L477.8 327.8L478.0 293.9L478.3 275.4L478.6 310.3L478.9 310.3L479.2 323.0L479.4 323.0L479.7 241.4L480.0 257.4L480.3 289.3L480.6 380.6L480.9 380.6L481.1 309.0L481.4 274.2L481.7 212.0L482.0 343.2L482.3 365.6L482.5 301.6L482.8 312.8L483.1 312.8L483.4 316.8L483.7 316.8L484.0 316.8L484.2 291.4L484.5 327.8L484.8 322.0L485.1 258.4L485.4 343.4L485.6 306.7L485.9 327.6L486.2 379.5L486.5 295.3L486.8 270.5L487.1 282.0L487.3 263.2L487.6 341.3L487.9 264.4L488.2 333.9L488.5 323.7L488.7 316.4L489.0 330.8L489.3 327.3L489.6 268.3L489.9 329.2L490.1 246.0L490.4 246.0L490.7 333.3L491.0 298.6L491.3 298.6L491.6 284.2L491.8 260.5L492.1 325.2L492.4 299.0L492.7 260.3L493.0 265.9L493.2 281.2L493.5 278.1L493.8 275.2L494.1 274.2L494.4 299.2L494.7 259.1L494.9 295.5L495.2 271.4L495.5 227.5L495.8 328.3L496.1 289.5L496.3 342.0L496.6 342.0L496.9 379.5L497.2 362.1L497.5 285.1L497.8 285.1L498.0 314.7L498.3 309.1L498.6 230.8L498.9 311.3L499.2 366.5L499.4 227.8L499.7 333.5L500.0 261.1L500.3 286.0L500.6 286.0L500.9 340.5L501.1 340.8L501.4 370.0L501.7 277.9L502.0 230.8L502.3 292.3L502.5 307.3L502.8 262.6L503.1 238.2L503.4 288.3L503.7 252.6L504.0 312.3L504.2 345.1L504.5 263.8L504.8 345.3L505.1 311.3L505.4 325.5L505.6 335.7L505.9 335.7L506.2 286.5L506.5 294.2L506.8 338.7L507.0 384.6L507.3 297.2L507.6 296.2L507.9 296.2L508.2 272.0L508.5 370.9L508.7 331.5L509.0 367.5L509.3 294.8L509.6 262.7L509.9 269.4L510.1 280.7L510.4 337.2L510.7 337.2L511.0 291.7L511.3 340.7L511.6 314.4L511.8 368.9L512.1 304.2L512.4 332.9L512.7 332.9L513.0 280.8L513.2 314.1L513.5 249.5L513.8 348.6L514.1 315.9L514.4 322.0L514.7 272.0L514.9 229.3L515.2 229.3L515.5 304.9L515.8 248.2L516.1 242.5L516.3 214.2L516.6 286.9L516.9 257.4L517.2 257.4L517.5 294.0L517.8 294.0L518.0 318.2L518.3 342.9L518.6 359.8L518.9 368.3L519.2 337.2L519.4 372.2L519.7 319.1L520.0 202.6L520.3 324.7L520.6 266.3L520.9 266.3L521.1 266.3L521.4 307.5L521.7 325.1L522.0 302.4L522.3 286.2L522.5 292.7L522.8 315.9L523.1 317.4L523.4 210.4L523.7 278.9L523.9 276.0L524.2 329.0L524.5 258.8L524.8 298.4L525.1 289.0L525.4 241.7L525.6 282.6L525.9 310.7L526.2 320.0L526.5 363.3L526.8 363.3L527.0 372.3L527.3 279.7L527.6 309.1L527.9 270.2L528.2 270.2L528.5 294.7L528.7 268.4L529.0 352.3L529.3 306.0L529.6 293.2L529.9 332.6L530.1 291.0L530.4 259.7L530.7 305.3L531.0 370.5L531.3 279.0L531.6 346.4L531.8 281.1L532.1 322.0L532.4 290.4L532.7 290.4L533.0 281.4L533.2 368.4L533.5 287.9L533.8 270.7L534.1 299.4L534.4 238.7L534.7 278.9L534.9 307.1L535.2 373.1L535.5 281.7L535.8 281.2L536.1 219.1L536.3 264.1L536.6 360.2L536.9 264.6L537.2 302.5L537.5 256.4L537.8 265.9L538.0 337.5L538.3 246.4L538.6 356.1L538.9 332.4L539.2 282.3L539.4 256.1L539.7 256.1L540.0 256.1L540.3 300.9L540.6 293.0L540.8 303.0L541.1 303.0L541.4 230.9L541.7 274.7L542.0 296.2L542.3 278.9L542.5 267.3L542.8 318.3L543.1 318.3L543.4 230.4L543.7 203.5L543.9 203.5L544.2 314.5L544.5 323.2L544.8 272.7L545.1 376.0L545.4 249.0L545.6 249.0L545.9 261.5L546.2 298.1L546.5 264.0L546.8 244.9L547.0 272.3L547.3 355.6L547.6 355.6L547.9 305.4L548.2 311.6L548.5 342.9L548.7 350.0L549.0 352.7L549.3 352.7L549.6 209.4L549.9 267.7L550.1 301.6L550.4 309.4L550.7 266.3L551.0 297.9L551.3 315.7L551.6 326.3L551.8 300.2L552.1 310.2L552.4 339.7L552.7 352.3L553.0 295.4L553.2 295.4L553.5 257.1L553.8 257.1L554.1 336.5L554.4 359.5L554.7 359.5L554.9 324.9L555.2 307.4L555.5 244.4L555.8 279.4L556.1 203.5L556.3 330.1L556.6 330.1L556.9 298.2L557.2 319.7L557.5 262.9L557.7 317.6L558.0 304.9L558.3 301.3L558.6 344.7L558.9 369.2L559.2 274.6L559.4 318.5L559.7 348.7L560.0 353.5L560.3 226.8L560.6 284.6L560.8 271.5L561.1 246.5L561.4 221.2L561.7 239.1L562.0 267.6L562.3 263.0L562.5 298.1L562.8 254.7L563.1 335.5L563.4 264.1L563.7 264.1L563.9 242.9L564.2 360.7L564.5 321.6L564.8 279.9L565.1 303.8L565.4 305.7L565.6 305.7L565.9 253.8L566.2 282.2L566.5 282.2L566.8 340.8L567.0 319.5L567.3 314.1L567.6 306.1L567.9 310.9L568.2 335.0L568.5 327.6L568.7 394.5L569.0 274.2L569.3 264.4L569.6 264.4L569.9 335.0L570.1 335.0L570.4 279.1L570.7 216.9L571.0 216.9L571.3 279.2L571.6 256.1L571.8 256.1L572.1 256.1L572.4 247.6L572.7 293.5L573.0 312.0L573.2 367.9L573.5 291.3L573.8 226.7L574.1 271.0L574.4 234.3L574.6 263.3L574.9 239.5L575.2 316.3L575.5 292.6L575.8 343.6L576.1 327.6L576.3 264.7L576.6 313.8L576.9 307.7L577.2 341.7L577.5 296.8L577.7 344.4L578.0 248.2L578.3 330.7L578.6 304.4L578.9 304.4L579.2 285.9L579.4 325.8L579.7 287.3L580.0 329.8L580.3 329.8L580.6 299.4L580.8 299.4L581.1 291.7L581.4 291.7L581.7 259.3L582.0 259.3L582.3 290.3L582.5 268.8L582.8 288.0L583.1 288.7L583.4 265.3L583.7 287.2L583.9 302.5L584.2 347.2L584.5 347.2L584.8 259.8L585.1 285.5L585.4 301.6L585.6 319.7L585.9 282.7L586.2 306.1L586.5 286.5L586.8 296.8L587.0 267.2L587.3 319.9L587.6 276.6L587.9 318.7L588.2 304.4L588.5 252.9L588.7 319.5L589.0 310.6L589.3 300.9L589.6 292.9L589.9 340.4L590.1 307.2L590.4 307.2L590.7 269.9L591.0 336.1L591.3 286.5L591.5 269.8L591.8 291.8L592.1 359.7L592.4 314.5L592.7 352.1L593.0 349.1L593.2 384.0L593.5 308.6L593.8 327.8L594.1 251.7L594.4 235.6L594.6 299.6L594.9 380.7L595.2 333.4L595.5 313.7L595.8 339.7L596.1 344.3L596.3 366.1L596.6 248.7L596.9 307.1L597.2 335.5L597.5 384.4L597.7 227.2L598.0 411.5L598.3 327.0L598.6 421.5L598.9 305.6L599.2 328.4L599.4 270.1L599.7 348.7L600.0 245.3L600.3 295.6L600.6 359.6L600.8 265.4L601.1 286.6L601.4 253.9L601.7 274.1L602.0 294.6L602.3 306.0L602.5 376.1L602.8 273.8L603.1 250.1L603.4 275.0L603.7 289.6L603.9 280.9L604.2 280.9L604.5 329.5L604.8 329.5L605.1 347.8L605.4 234.5L605.6 315.7L605.9 319.2L606.2 275.4L606.5 272.8L606.8 268.2L607.0 268.2L607.3 306.8L607.6 317.6L607.9 295.9L608.2 302.6L608.4 293.1L608.7 336.2L609.0 336.2L609.3 277.8L609.6 355.5L609.9 382.3L610.1 341.7L610.4 328.6L610.7 204.0L611.0 204.0L611.3 377.0L611.5 323.4L611.8 280.6L612.1 359.5L612.4 261.4L612.7 340.9L613.0 349.1L613.2 293.6L613.5 318.7L613.8 238.0L614.1 363.3L614.4 220.7L614.6 261.8L614.9 274.6L615.2 402.1L615.5 316.0L615.8 372.9L616.1 276.9L616.3 306.4L616.6 278.0L616.9 389.0L617.2 237.3L617.5 215.1L617.7 213.2L618.0 351.5L618.3 351.5L618.6 257.5L618.9 281.8L619.2 375.5L619.4 280.5L619.7 249.8L620.0 351.2L620.3 351.2L620.6 264.7L620.8 264.7L621.1 245.6L621.4 228.0L621.7 285.5L622.0 285.5L622.3 273.3L622.5 273.3L622.8 311.1L623.1 311.1L623.4 392.5L623.7 392.5L623.9 265.8L624.2 299.1L624.5 241.1L624.8 310.2L625.1 310.2L625.3 305.7L625.6 292.6L625.9 332.2L626.2 323.0L626.5 307.7L626.8 326.7L627.0 198.2L627.3 267.2L627.6 315.6L627.9 323.7L628.2 381.7L628.4 331.9L628.7 331.9L629.0 355.9L629.3 271.6L629.6 297.0L629.9 257.5L630.1 293.6L630.4 333.0L630.7 265.5L631.0 274.2L631.3 326.0L631.5 244.3L631.8 286.3L632.1 240.7L632.4 240.7L632.7 240.7L633.0 272.3L633.2 271.8L633.5 308.5L633.8 288.9L634.1 258.0L634.4 351.2L634.6 278.7L634.9 257.5L635.2 272.8L635.5 272.8L635.8 271.0L636.1 244.7L636.3 337.4L636.6 306.3L636.9 273.2L637.2 319.4L637.5 279.2L637.7 318.3L638.0 281.1L638.3 282.8L638.6 269.6L638.9 340.1L639.2 387.6L639.4 255.2L639.7 227.9L640.0 297.7L640.3 333.9L640.6 233.0L640.8 220.8L641.1 269.9L641.4 327.6L641.7 280.1L642.0 280.1L642.2 295.5L642.5 310.2L642.8 350.3L643.1 313.1L643.4 192.4L643.7 274.4L643.9 295.6L644.2 367.8L644.5 341.2L644.8 312.1L645.1 273.0L645.3 275.1L645.6 208.2L645.9 275.5L646.2 298.2L646.5 305.7L646.8 286.8L647.0 339.7L647.3 339.7L647.6 379.9L647.9 251.1L648.2 243.1L648.4 308.4L648.7 286.9L649.0 333.2L649.3 267.1L649.6 237.7L649.9 297.6L650.1 275.1L650.4 310.7L650.7 360.4L651.0 360.4L651.3 233.8L651.5 301.5L651.8 367.6L652.1 236.7L652.4 342.5L652.7 347.8L653.0 347.8L653.2 299.8L653.5 299.8L653.8 309.5L654.1 279.5L654.4 206.2L654.6 322.9L654.9 219.4L655.2 219.4L655.5 276.9L655.8 330.8L656.1 287.7L656.3 299.6L656.6 334.2L656.9 291.8L657.2 288.6L657.5 286.1L657.7 359.1L658.0 280.1L658.3 313.4L658.6 383.4L658.9 255.6L659.1 255.6L659.4 307.3L659.7 316.7L660.0 241.2L660.3 292.3L660.6 354.4L660.8 296.5L661.1 228.7L661.4 323.8L661.7 209.5L662.0 309.6L662.2 333.9L662.5 313.5L662.8 281.8L663.1 348.1L663.4 298.8L663.7 264.8L663.9 316.4L664.2 322.1L664.5 301.9L664.8 265.8L665.1 266.0L665.3 275.8L665.6 266.7L665.9 315.7L666.2 321.4L666.5 322.6L666.8 302.3L667.0 288.1L667.3 315.8L667.6 290.2L667.9 283.8L668.2 352.2L668.4 309.7L668.7 286.2L669.0 286.2L669.3 327.6L669.6 327.6L669.9 342.8L670.1 325.3L670.4 300.1L670.7 300.1L671.0 283.0L671.3 254.3L671.5 288.1L671.8 315.7L672.1 333.5L672.4 95.8L672.7 312.7L673.0 338.2L673.2 227.1L673.5 287.3L673.8 265.4L674.1 293.7L674.4 273.5L674.6 273.5L674.9 200.8L675.2 313.1L675.5 247.1L675.8 287.7L676.0 252.1L676.3 252.1L676.6 377.1L676.9 388.5L677.2 345.2L677.5 277.0L677.7 300.7L678.0 270.1L678.3 316.3L678.6 270.9L678.9 318.2L679.1 274.2L679.4 257.4L679.7 264.3L680.0 377.0L680.3 377.0L680.6 338.5L680.8 303.3L681.1 318.6L681.4 254.7L681.7 205.4L682.0 316.6L682.2 310.4L682.5 360.9L682.8 282.7L683.1 306.8L683.4 288.7L683.7 315.6L683.9 315.6L684.2 318.6L684.5 318.6L684.8 261.3L685.1 263.6L685.3 387.6L685.6 387.6L685.9 387.6L686.2 198.9L686.5 331.3L686.8 274.4L687.0 277.4L687.3 310.8L687.6 263.9L687.9 313.8L688.2 355.0L688.4 328.6L688.7 221.7L689.0 291.8L689.3 294.3L689.6 383.6L689.9 342.5L690.1 352.6L690.4 249.4L690.7 249.4L691.0 277.6L691.3 293.9L691.5 337.2L691.8 312.5L692.1 287.8L692.4 220.5L692.7 278.1L692.9 276.2L693.2 284.5L693.5 284.5L693.8 295.2L694.1 306.0L694.4 247.6L694.6 303.1L694.9 303.1L695.2 239.6L695.5 327.1L695.8 276.5L696.0 230.1L696.3 287.6L696.6 310.4L696.9 251.8L697.2 251.8L697.5 329.6L697.7 311.6L698.0 224.4L698.3 224.4L698.6 312.5L698.9 312.5L699.1 332.8L699.4 290.9L699.7 263.4L700.0 373.1L700.3 242.2L700.6 287.8L700.8 199.3L701.1 199.3L701.4 253.8L701.7 214.5L702.0 244.9L702.2 269.1L702.5 310.2L702.8 344.6L703.1 313.9L703.4 269.8L703.7 258.6L703.9 296.1L704.2 250.8L704.5 323.8L704.8 319.9L705.1 335.6L705.3 288.3L705.6 252.5L705.9 252.5L706.2 204.4L706.5 273.7L706.8 301.7L707.0 303.0L707.3 314.3L707.6 342.1L707.9 392.9L708.2 284.9L708.4 345.8L708.7 282.8L709.0 274.6L709.3 322.7L709.6 317.6L709.8 288.7L710.1 243.5L710.4 246.4L710.7 372.5L711.0 349.7L711.3 316.9L711.5 293.6L711.8 269.5L712.1 283.2L712.4 375.2L712.7 256.0L712.9 278.7L713.2 278.7L713.5 293.3L713.8 316.7L714.1 304.2L714.4 231.1L714.6 213.2L714.9 295.4L715.2 269.1L715.5 269.1L715.8 340.3L716.0 366.6L716.3 261.6L716.6 330.5L716.9 273.3L717.2 286.6L717.5 318.2L717.7 296.2L718.0 296.2L718.3 287.2L718.6 332.2L718.9 328.7L719.1 222.3L719.4 293.2L719.7 336.7L720.0 252.3L720.3 252.3L720.6 266.3L720.8 325.0L721.1 338.3L721.4 356.4L721.7 207.3L722.0 304.2L722.2 219.7L722.5 291.8L722.8 322.2L723.1 312.5L723.4 289.9L723.7 244.7L723.9 244.7L724.2 244.7L724.5 298.3L724.8 335.0L725.1 355.7L725.3 284.2L725.6 253.1L725.9 253.1L726.2 241.2L726.5 268.5L726.7 273.7L727.0 323.9L727.3 303.1L727.6 312.0L727.9 311.0L728.2 302.8L728.4 174.6L728.7 214.5L729.0 306.5L729.3 265.2L729.6 284.1L729.8 265.0L730.1 378.4L730.4 314.6L730.7 314.6L731.0 350.1L731.3 350.1L731.5 319.0L731.8 271.2L732.1 253.8L732.4 278.2L732.7 282.4L732.9 249.7L733.2 299.3L733.5 385.7L733.8 385.7L734.1 286.0L734.4 324.9L734.6 286.1L734.9 243.9L735.2 348.9L735.5 215.1L735.8 338.9L736.0 279.6L736.3 249.0L736.6 285.8L736.9 324.4L737.2 294.1L737.5 277.2L737.7 278.8L738.0 225.9L738.3 225.9L738.6 322.5L738.9 271.1L739.1 357.6L739.4 217.8L739.7 217.8L740.0 199.0L740.3 274.8L740.6 282.4L740.8 334.3L741.1 325.2L741.4 325.2L741.7 325.2L742.0 336.7L742.2 318.2L742.5 255.6L742.8 291.6L743.1 235.4L743.4 275.3L743.6 275.3L743.9 332.1L744.2 332.1L744.5 266.6L744.8 265.0L745.1 281.0L745.3 207.7L745.6 207.7L745.9 297.3L746.2 412.0L746.5 343.4L746.7 319.8L747.0 341.1L747.3 287.7L747.6 221.4L747.9 338.1L748.2 263.8L748.4 205.6L748.7 340.0L749.0 326.4L749.3 256.9L749.6 281.2L749.8 292.1L750.1 292.1L750.4 292.1L750.7 339.8L751.0 355.4L751.3 236.5L751.5 272.9L751.8 239.0L752.1 310.2L752.4 217.0L752.7 331.4L752.9 282.8L753.2 340.5L753.5 312.2L753.8 261.9L754.1 303.6L754.4 290.2L754.6 349.1L754.9 287.3L755.2 303.4L755.5 303.4L755.8 280.9L756.0 235.9L756.3 288.3L756.6 329.8L756.9 276.0L757.2 272.7L757.5 287.8L757.7 328.4L758.0 241.0L758.3 337.7L758.6 251.4L758.9 332.4L759.1 322.5L759.4 267.6L759.7 231.1L760.0 207.7L760.3 340.7L760.5 291.2L760.8 282.3L761.1 300.6L761.4 312.4L761.7 350.8L762.0 288.2L762.2 333.9L762.5 333.9L762.8 337.6L763.1 342.5L763.4 325.0L763.6 280.6L763.9 262.6L764.2 234.9L764.5 264.9L764.8 264.9L765.1 278.0L765.3 373.2L765.6 267.7L765.9 237.5L766.2 327.3L766.5 336.0L766.7 272.9L767.0 291.5L767.3 246.9L767.6 318.7L767.9 261.8L768.2 349.4L768.4 349.4L768.7 358.9L769.0 321.6L769.3 327.7L769.6 222.4L769.8 249.3L770.1 326.1L770.4 282.0L770.7 288.9L771.0 288.9L771.3 209.2L771.5 284.5L771.8 339.0L772.1 283.3L772.4 324.0L772.7 356.1L772.9 356.1L773.2 201.5L773.5 284.7L773.8 283.2L774.1 332.1L774.4 347.2L774.6 266.0L774.9 216.2L775.2 247.1L775.5 289.6L775.8 297.3L776.0 251.6L776.3 326.5L776.6 198.0L776.9 312.2L777.2 338.9L777.4 292.7L777.7 374.2L778.0 377.4L778.3 326.6L778.6 308.7L778.9 253.6L779.1 223.0L779.4 245.1L779.7 277.2L780.0 345.8L780.3 375.4L780.5 375.4L780.8 375.4L781.1 289.7L781.4 250.4L781.7 260.4L782.0 348.4L782.2 296.0L782.5 344.6L782.8 301.3L783.1 342.8L783.4 265.0L783.6 231.1L783.9 290.4L784.2 296.3L784.5 329.6L784.8 263.4L785.1 263.4L785.3 246.1L785.6 260.1L785.9 358.8L786.2 293.1L786.5 287.8L786.7 328.2L787.0 289.9L787.3 302.7L787.6 308.0L787.9 308.0L788.2 308.0L788.4 351.1L788.7 317.0L789.0 307.0L789.3 250.9L789.6 340.0L789.8 228.7L790.1 321.5L790.4 321.5L790.7 242.1L791.0 287.9L791.3 279.8L791.5 282.2L791.8 297.7L792.1 287.2L792.4 291.9L792.7 309.1L792.9 305.1L793.2 272.5L793.5 309.3L793.8 373.4L794.1 232.2L794.3 264.1L794.6 316.1L794.9 345.9L795.2 311.5L795.5 366.3L795.8 324.3L796.0 299.7L796.3 278.7L796.6 323.7L796.9 278.3L797.2 285.0L797.4 274.6L797.7 277.5L798.0 310.4L798.3 237.8L798.6 305.9L798.9 319.8L799.1 337.5L799.4 256.2L799.7 343.5L800.0 391.1L800.3 323.5L800.5 323.5L800.8 376.9L801.1 298.3L801.4 230.7L801.7 283.4L802.0 294.4L802.2 333.8L802.5 301.9L802.8 293.6L803.1 300.4L803.4 266.8L803.6 275.9L803.9 313.0L804.2 259.6L804.5 259.6L804.8 281.2L805.1 324.2L805.3 305.3L805.6 277.6L805.9 284.6L806.2 322.8L806.5 333.1L806.7 286.8L807.0 335.3L807.3 362.6L807.6 302.7L807.9 307.3L808.2 312.0L808.4 229.0L808.7 347.9L809.0 347.9L809.3 347.9L809.6 292.9L809.8 292.9L810.1 295.7L810.4 295.7L810.7 314.3L811.0 323.2L811.2 266.5L811.5 269.8L811.8 269.8L812.1 359.8L812.4 263.7L812.7 263.7L812.9 295.3L813.2 350.1L813.5 325.2L813.8 288.6L814.1 340.2L814.3 313.2L814.6 322.2L814.9 329.1L815.2 329.1L815.5 329.1L815.8 303.9L816.0 327.5L816.3 327.3L816.6 333.7L816.9 333.7L817.2 305.3L817.4 285.0L817.7 285.0L818.0 278.7L818.3 278.7L818.6 299.4L818.9 299.4L819.1 311.4L819.4 257.4L819.7 275.3L820.0 357.2L820.3 271.2L820.5 301.8L820.8 324.1L821.1 225.0L821.4 277.1L821.7 243.7L822.0 284.2L822.2 307.9L822.5 316.3L822.8 337.7L823.1 263.5L823.4 263.5L823.6 310.4L823.9 253.6L824.2 291.8L824.5 288.3L824.8 321.8L825.1 317.2L825.3 332.2L825.6 324.1L825.9 295.6L826.2 261.3L826.5 279.9L826.7 340.4L827.0 312.0L827.3 304.9L827.6 304.9L827.9 333.5L828.1 283.5L828.4 318.1L828.7 274.0L829.0 328.9L829.3 345.3L829.6 348.0L829.8 335.2L830.1 321.6L830.4 273.4L830.7 312.8L831.0 274.5L831.2 275.8L831.5 287.0L831.8 278.8L832.1 358.9L832.4 358.9L832.7 346.4L832.9 251.3L833.2 262.1L833.5 294.2L833.8 377.1L834.1 357.6L834.3 310.6L834.6 276.4L834.9 257.9L835.2 257.9L835.5 305.2L835.8 247.4L836.0 301.3L836.3 311.2L836.6 271.2L836.9 306.4L837.2 260.7L837.4 277.9L837.7 217.9L838.0 289.6L838.3 180.3L838.6 292.4L838.9 279.8L839.1 306.5L839.4 324.2L839.7 267.5L840.0 275.0L840.3 333.0L840.5 352.2L840.8 400.4L841.1 248.5L841.4 292.7L841.7 328.4L842.0 328.4L842.2 414.7L842.5 264.9L842.8 302.3L843.1 302.3L843.4 281.7L843.6 226.2L843.9 234.3L844.2 234.3L844.5 361.5L844.8 309.4L845.0 210.9L845.3 210.9L845.6 337.5L845.9 231.1L846.2 346.5L846.5 324.9L846.7 258.2L847.0 386.3L847.3 343.3L847.6 301.7L847.9 285.8L848.1 295.6L848.4 332.4L848.7 245.9L849.0 261.3L849.3 269.2L849.6 287.3L849.8 353.6L850.1 353.6L850.4 353.6L850.7 335.4L851.0 304.6L851.2 322.9L851.5 295.6L851.8 338.4L852.1 265.7L852.4 264.8L852.7 264.8L852.9 264.8L853.2 292.8L853.5 228.6L853.8 308.0L854.1 244.0L854.3 304.7L854.6 266.2L854.9 302.9L855.2 251.3L855.5 287.6L855.8 337.8L856.0 323.0L856.3 286.1L856.6 323.5L856.9 350.8L857.2 391.3L857.4 391.3L857.7 269.2L858.0 366.0L858.3 253.1L858.6 230.1L858.9 285.1L859.1 310.5L859.4 296.3L859.7 281.2L860.0 281.2L860.3 295.5L860.5 310.7L860.8 300.4L861.1 351.9L861.4 241.4L861.7 275.0L861.9 221.4L862.2 323.6L862.5 273.3L862.8 312.9L863.1 235.5L863.4 283.3L863.6 297.6L863.9 262.4L864.2 300.7L864.5 253.3L864.8 332.9L865.0 332.9L865.3 305.8L865.6 322.1L865.9 277.7L866.2 279.5L866.5 288.1L866.7 259.5L867.0 197.2L867.3 197.2L867.6 327.0L867.9 327.0L868.1 353.6L868.4 239.8L868.7 336.3L869.0 336.3L869.3 205.4L869.6 271.8L869.8 271.8L870.1 311.4L870.4 260.9L870.7 270.4L871.0 402.4L871.2 344.4L871.5 267.2L871.8 284.6L872.1 248.3L872.4 282.9L872.7 314.5L872.9 295.7L873.2 244.8L873.5 275.4L873.8 331.6L874.1 399.7L874.3 323.3L874.6 272.1L874.9 380.6L875.2 326.0L875.5 243.9L875.8 315.9L876.0 388.8L876.3 310.7L876.6 306.2L876.9 282.5L877.2 305.7L877.4 286.0L877.7 295.6L878.0 304.4L878.3 369.4L878.6 226.3L878.8 289.6L879.1 289.6L879.4 259.5L879.7 347.9L880.0 347.9L880.3 230.2L880.5 282.3L880.8 266.3L881.1 266.3L881.4 280.3L881.7 319.1L881.9 213.4L882.2 308.7L882.5 320.4L882.8 250.0L883.1 265.7L883.4 291.2L883.6 297.9L883.9 341.2L884.2 292.6L884.5 352.1L884.8 289.0L885.0 203.6L885.3 297.7L885.6 267.0L885.9 311.5L886.2 329.7L886.5 324.6L886.7 371.2L887.0 245.0L887.3 245.0L887.6 327.3L887.9 309.0L888.1 342.7L888.4 294.3L888.7 313.5L889.0 307.8L889.3 250.1L889.6 303.1L889.8 270.2L890.1 222.7L890.4 290.3L890.7 285.3L891.0 285.3L891.2 285.3L891.5 211.5L891.8 211.5L892.1 285.4L892.4 325.0L892.7 264.3L892.9 321.0L893.2 328.8L893.5 361.3L893.8 332.9L894.1 267.3L894.3 267.3L894.6 317.3L894.9 278.3L895.2 288.7L895.5 271.7L895.7 282.5L896.0 318.0L896.3 268.8L896.6 295.0L896.9 286.8L897.2 286.8L897.4 365.3L897.7 372.1L898.0 372.1L898.3 294.0L898.6 234.7L898.8 394.7L899.1 394.7L899.4 316.9L899.7 247.6L900.0 286.3L900.3 329.5L900.5 336.6L900.8 267.3L901.1 291.6L901.4 247.8L901.7 284.3L901.9 284.3L902.2 292.3L902.5 338.4L902.8 315.1L903.1 315.1L903.4 382.8L903.6 244.9L903.9 302.5L904.2 321.7L904.5 234.9L904.8 197.2L905.0 231.5L905.3 231.5L905.6 264.9L905.9 371.3L906.2 371.3L906.5 282.0L906.7 309.1L907.0 330.9L907.3 273.9L907.6 365.1L907.9 365.1L908.1 301.2L908.4 301.2L908.7 288.0L909.0 205.2L909.3 215.4L909.6 206.8L909.8 313.0L910.1 270.7L910.4 270.7L910.7 294.7L911.0 246.1L911.2 301.2L911.5 260.6L911.8 352.9L912.1 284.4L912.4 385.5L912.6 255.7L912.9 322.6L913.2 309.6L913.5 280.4L913.8 293.4L914.1 293.4L914.3 273.5L914.6 276.2L914.9 346.3L915.2 317.5L915.5 299.8L915.7 281.8L916.0 290.4L916.3 324.1L916.6 315.5L916.9 325.0L917.2 325.0L917.4 238.9L917.7 298.9L918.0 293.0L918.3 319.1L918.6 350.6L918.8 292.9L919.1 342.9L919.4 248.0L919.7 307.2L920.0 279.7L920.3 340.5L920.5 223.5L920.8 325.9L921.1 325.9L921.4 245.4L921.7 285.3L921.9 313.9L922.2 266.0L922.5 266.0L922.8 267.1L923.1 291.6L923.4 351.4L923.6 351.4L923.9 247.3L924.2 295.5L924.5 325.3L924.8 224.6L925.0 349.5L925.3 349.5L925.6 300.8L925.9 309.6L926.2 346.3L926.5 327.4L926.7 245.3L927.0 297.3L927.3 295.2L927.6 276.8L927.9 294.0L928.1 299.7L928.4 348.5L928.7 348.5L929.0 250.6L929.3 250.6L929.5 317.4L929.8 293.1L930.1 285.9L930.4 317.4L930.7 312.7L931.0 288.2L931.2 296.2L931.5 291.0L931.8 309.0L932.1 206.9L932.4 344.9L932.6 344.9L932.9 246.4L933.2 294.4L933.5 294.4L933.8 285.2L934.1 269.8L934.3 267.8L934.6 260.6L934.9 310.5L935.2 223.3L935.5 254.6L935.7 319.6L936.0 322.8L936.3 302.7L936.6 299.8L936.9 240.3L937.2 269.4L937.4 230.1L937.7 230.1L938.0 266.9L938.3 279.6L938.6 356.9L938.8 345.0L939.1 275.0L939.4 326.3L939.7 297.0L940.0 325.3L940.3 278.0L940.5 324.0L940.8 244.1L941.1 303.6L941.4 302.4L941.7 326.3L941.9 361.9L942.2 281.8L942.5 309.0L942.8 207.9L943.1 324.7L943.4 347.7L943.6 347.7L943.9 243.3L944.2 252.7L944.5 343.7L944.8 257.3L945.0 252.7L945.3 286.0L945.6 328.8L945.9 282.4L946.2 319.3L946.4 316.6L946.7 316.6L947.0 249.4L947.3 326.7L947.6 241.2L947.9 320.2L948.1 320.2L948.4 273.0L948.7 273.0L949.0 251.0L949.3 254.8L949.5 313.7L949.8 214.5L950.1 334.1L950.4 351.0L950.7 211.3L951.0 232.1L951.2 310.7L951.5 253.8L951.8 361.6L952.1 286.8L952.4 207.5L952.6 350.2L952.9 375.0L953.2 311.4L953.5 282.4L953.8 231.6L954.1 229.5L954.3 314.3L954.6 329.8L954.9 329.8L955.2 366.6L955.5 296.6L955.7 346.8L956.0 310.9L956.3 273.9L956.6 293.5L956.9 339.2L957.2 263.1L957.4 257.0L957.7 388.2L958.0 388.2L958.3 277.1L958.6 272.8L958.8 280.1L959.1 331.6L959.4 248.3L959.7 301.9L960.0 317.0L960.3 197.8L960.5 280.7L960.8 230.0L961.1 226.4L961.4 346.9L961.7 391.5L961.9 286.0L962.2 286.0L962.5 320.7L962.8 260.4L963.1 314.1L963.3 313.0L963.6 305.7L963.9 305.7L964.2 249.8L964.5 382.6L964.8 286.1L965.0 324.9L965.3 336.7L965.6 313.0L965.9 289.5L966.2 341.8L966.4 322.2L966.7 275.4L967.0 292.7L967.3 292.7L967.6 164.2L967.9 304.3L968.1 363.6L968.4 255.0L968.7 307.9L969.0 314.7L969.3 306.4L969.5 307.5L969.8 345.4L970.1 339.4L970.4 242.9L970.7 272.0L971.0 240.0L971.2 341.6L971.5 310.5L971.8 301.7L972.1 350.8L972.4 305.5L972.6 249.3L972.9 282.4L973.2 253.5L973.5 372.8L973.8 372.8L974.1 356.5L974.3 274.2L974.6 312.8L974.9 335.6L975.2 267.8L975.5 271.3L975.7 375.5L976.0 290.4L976.3 319.0L976.6 290.0L976.9 390.4L977.2 285.0L977.4 285.0L977.7 287.4L978.0 263.8L978.3 275.8L978.6 275.8L978.8 275.8L979.1 275.8L979.4 273.2L979.7 314.2L980.0 327.8L980.2 224.2L980.5 224.2L980.8 288.5L981.1 288.5L981.4 327.2L981.7 367.8L981.9 335.9L982.2 231.2L982.5 292.2L982.8 292.2L983.1 316.0L983.3 290.7L983.6 306.3L983.9 271.7L984.2 363.8L984.5 289.1L984.8 291.9L985.0 392.6L985.3 355.2L985.6 242.3L985.9 365.6L986.2 365.6L986.4 333.2L986.7 331.3L987.0 336.2L987.3 228.4L987.6 323.8L987.9 280.9L988.1 260.5L988.4 290.9L988.7 320.3L989.0 259.6L989.3 333.1L989.5 309.4L989.8 309.4L990.1 268.1L990.4 254.8L990.7 254.8L991.0 254.8L991.2 241.1L991.5 312.0L991.8 200.9L992.1 245.1L992.4 301.4L992.6 256.5L992.9 309.4L993.2 282.5L993.5 282.5L993.8 300.5L994.1 278.5L994.3 298.9L994.6 250.7L994.9 346.5L995.2 292.8L995.5 288.9L995.7 297.3L996.0 322.7L996.3 218.9L996.6 354.2L996.9 259.7L997.1 262.2L997.4 225.9L997.7 225.9L998.0 367.8L998.3 310.0L998.6 310.0L998.8 251.1L999.1 341.2L999.4 307.5L999.7 302.1L1000.0 239.8L1000.2 404.8L1000.5 278.6L1000.8 320.9L1001.1 305.7L1001.4 268.4L1001.7 265.0L1001.9 320.9L1002.2 289.6L1002.5 309.0L1002.8 298.1L1003.1 278.4L1003.3 209.9L1003.6 359.7L1003.9 287.0L1004.2 308.8L1004.5 312.3L1004.8 273.8L1005.0 212.0L1005.3 320.1L1005.6 284.7L1005.9 343.5L1006.2 262.6L1006.4 269.8L1006.7 300.6L1007.0 288.6L1007.3 288.6L1007.6 263.5L1007.9 228.9L1008.1 273.2L1008.4 300.0L1008.7 281.2L1009.0 320.7L1009.3 318.3L1009.5 274.6L1009.8 332.8L1010.1 329.5L1010.4 328.8L1010.7 351.0L1011.0 332.5L1011.2 332.5L1011.5 306.8L1011.8 317.1L1012.1 268.7L1012.4 268.7L1012.6 264.0L1012.9 248.5L1013.2 301.3L1013.5 235.3L1013.8 382.6L1014.0 382.6L1014.3 281.2L1014.6 208.8L1014.9 241.4L1015.2 279.1L1015.5 319.2L1015.7 276.9L1016.0 311.9L1016.3 290.1L1016.6 341.6L1016.9 341.6L1017.1 341.6L1017.4 346.1L1017.7 314.5L1018.0 237.0L1018.3 278.1L1018.6 278.1L1018.8 283.6L1019.1 283.6L1019.4 284.6L1019.7 335.6L1020.0 303.0L1020.2 258.1L1020.5 246.6L1020.8 272.5L1021.1 272.5L1021.4 272.5L1021.7 272.5L1021.9 332.1L1022.2 354.3L1022.5 354.3L1022.8 358.5L1023.1 253.5L1023.3 264.9L1023.6 299.3L1023.9 277.5L1024.2 309.1L1024.5 307.1L1024.8 359.8L1025.0 359.8L1025.3 291.0L1025.6 290.4L1025.9 290.4L1026.2 307.0L1026.4 273.6L1026.7 267.6L1027.0 325.6L1027.3 336.2L1027.6 223.6L1027.9 338.6L1028.1 419.9L1028.4 234.7L1028.7 320.8L1029.0 293.7L1029.3 294.1L1029.5 277.1L1029.8 311.0L1030.1 232.4L1030.4 295.7L1030.7 269.3L1030.9 269.3L1031.2 277.4L1031.5 277.4L1031.8 328.8L1032.1 328.8L1032.4 328.8L1032.6 274.4L1032.9 300.0L1033.2 355.3L1033.5 273.2L1033.8 243.2L1034.0 327.4L1034.3 253.1L1034.6 322.1L1034.9 350.6L1035.2 314.3L1035.5 285.5L1035.7 315.4L1036.0 320.1L1036.3 349.0L1036.6 308.9L1036.9 276.3L1037.1 303.7L1037.4 295.7L1037.7 295.5L1038.0 280.5L1038.3 313.2L1038.6 261.5L1038.8 209.6L1039.1 306.2L1039.4 338.7L1039.7 276.1L1040.0 276.1L1040.2 225.2L1040.5 225.2L1040.8 225.2L1041.1 278.0L1041.4 272.3L1041.7 332.5L1041.9 244.1L1042.2 244.1L1042.5 272.3L1042.8 260.3L1043.1 305.8L1043.3 305.8L1043.6 305.8L1043.9 319.9L1044.2 293.1L1044.5 321.2L1044.8 296.9L1045.0 241.9L1045.3 241.9L1045.6 329.5L1045.9 329.5L1046.2 333.2L1046.4 333.2L1046.7 299.3L1047.0 339.1L1047.3 339.1L1047.6 308.1L1047.8 342.0L1048.1 342.0L1048.4 245.4L1048.7 338.9L1049.0 246.6L1049.3 285.7L1049.5 319.9L1049.8 258.2L1050.1 313.8L1050.4 319.3L1050.7 296.7L1050.9 328.6L1051.2 272.7L1051.5 272.7L1051.8 290.2L1052.1 294.0L1052.4 294.0L1052.6 294.0L1052.9 332.2L1053.2 332.2L1053.5 289.9L1053.8 306.7L1054.0 306.7L1054.3 281.7L1054.6 281.7L1054.9 207.5L1055.2 240.9L1055.5 336.4L1055.7 262.8L1056.0 302.4L1056.3 308.4L1056.6 260.1L1056.9 317.9L1057.1 349.2L1057.4 334.3L1057.7 265.8L1058.0 356.6L1058.3 313.2L1058.6 274.8L1058.8 245.5L1059.1 303.7L1059.4 304.9L1059.7 269.5L1060.0 301.5L1060.2 301.5L1060.5 270.1L1060.8 224.1L1061.1 274.0L1061.4 306.9L1061.7 263.3L1061.9 275.3L1062.2 329.5L1062.5 341.7L1062.8 350.6L1063.1 284.1L1063.3 277.5L1063.6 271.8L1063.9 312.5L1064.2 325.5L1064.5 287.9L1064.7 322.4L1065.0 272.2L1065.3 315.9L1065.6 273.6L1065.9 256.1L1066.2 276.0L1066.4 349.4L1066.7 302.1L1067.0 350.4L1067.3 350.4L1067.6 276.1L1067.8 271.7L1068.1 294.7L1068.4 260.9L1068.7 297.8L1069.0 297.8L1069.3 303.1L1069.5 325.5L1069.8 332.6L1070.1 284.3L1070.4 337.4L1070.7 290.8L1070.9 256.9L1071.2 313.8L1071.5 313.8L1071.8 296.0L1072.1 313.9L1072.4 301.5L1072.6 342.1L1072.9 260.9L1073.2 259.9L1073.5 355.0L1073.8 226.4L1074.0 342.4L1074.3 352.9L1074.6 321.6L1074.9 294.6L1075.2 367.0L1075.5 334.7L1075.7 348.3L1076.0 348.3L1076.3 348.3L1076.6 348.3L1076.9 284.1L1077.1 315.9L1077.4 276.8L1077.7 246.4L1078.0 289.1L1078.3 375.1L1078.6 325.0L1078.8 280.0L1079.1 280.0L1079.4 394.4L1079.7 233.1L1080.0 344.7L1080.2 273.5L1080.5 246.5L1080.8 350.8L1081.1 306.3L1081.4 259.3L1081.6 289.9L1081.9 276.0L1082.2 264.9L1082.5 265.8L1082.8 265.8L1083.1 301.0L1083.3 246.2L1083.6 246.2L1083.9 246.2L1084.2 363.9L1084.5 363.9L1084.7 332.1L1085.0 307.6L1085.3 330.2L1085.6 250.8L1085.9 346.7L1086.2 293.5L1086.4 264.4L1086.7 297.3L1087.0 437.5" stroke="#a6989f" />
<path d="M242.0 142.2L242.3 142.2L242.6 142.2L242.8 142.2L243.1 142.2L243.4 214.8L243.7 214.8L244.0 214.8L244.3 214.8L244.5 214.8L244.8 214.8L245.1 214.8L245.4 283.1L245.7 283.1L245.9 283.1L246.2 283.1L246.5 283.1L246.8 283.1L247.1 283.1L247.4 283.1L247.6 283.1L247.9 283.1L248.2 283.1L248.5 283.1L248.8 283.1L249.0 283.1L249.3 343.2L249.6 343.2L249.9 343.2L250.2 343.2L250.5 343.2L250.7 458.7L251.0 458.7L251.3 458.7L251.6 458.7L251.9 458.7L252.1 458.7L252.4 320.1L252.7 320.1L253.0 320.1L253.3 320.1L253.5 315.9L253.8 317.5L254.1 325.1L254.4 310.7L254.7 359.1L255.0 366.9L255.2 323.4L255.5 310.5L255.8 271.6L256.1 266.3L256.4 311.6L256.6 340.9L256.9 265.3L257.2 326.6L257.5 285.8L257.8 285.8L258.1 285.8L258.3 312.2L258.6 221.1L258.9 349.8L259.2 292.8L259.5 338.8L259.7 293.2L260.0 271.5L260.3 319.1L260.6 238.5L260.9 265.2L261.2 260.6L261.4 311.9L261.7 301.9L262.0 290.3L262.3 294.9L262.6 364.3L262.8 364.3L263.1 278.1L263.4 331.1L263.7 278.4L264.0 278.4L264.3 262.1L264.5 303.8L264.8 339.5L265.1 265.4L265.4 268.2L265.7 309.3L265.9 319.5L266.2 250.4L266.5 358.2L266.8 312.6L267.1 304.6L267.4 308.0L267.6 295.4L267.9 280.7L268.2 344.8L268.5 330.2L268.8 330.2L269.0 285.6L269.3 303.7L269.6 335.5L269.9 292.5L270.2 292.5L270.4 254.7L270.7 300.3L271.0 287.5L271.3 233.8L271.6 207.0L271.9 300.5L272.1 285.4L272.4 231.6L272.7 380.0L273.0 261.9L273.3 277.5L273.5 270.0L273.8 331.1L274.1 282.8L274.4 333.1L274.7 333.1L275.0 258.3L275.2 266.1L275.5 323.1L275.8 280.5L276.1 280.5L276.4 280.9L276.6 233.0L276.9 273.7L277.2 305.1L277.5 336.4L277.8 326.0L278.1 359.1L278.3 336.2L278.6 281.1L278.9 281.1L279.2 336.3L279.5 336.3L279.7 218.4L280.0 273.9L280.3 277.4L280.6 277.7L280.9 311.0L281.2 322.0L281.4 348.6L281.7 205.9L282.0 304.2L282.3 352.3L282.6 296.9L282.8 240.5L283.1 349.7L283.4 365.8L283.7 358.7L284.0 284.0L284.3 284.0L284.5 229.8L284.8 229.8L285.1 311.8L285.4 306.0L285.7 291.6L285.9 255.9L286.2 255.9L286.5 364.6L286.8 318.2L287.1 318.2L287.3 293.4L287.6 266.7L287.9 307.6L288.2 254.9L288.5 259.0L288.8 329.8L289.0 345.3L289.3 213.4L289.6 285.5L289.9 209.1L290.2 302.4L290.4 329.1L290.7 281.4L291.0 330.8L291.3 318.4L291.6 311.0L291.9 228.5L292.1 321.2L292.4 213.1L292.7 322.5L293.0 308.7L293.3 261.6L293.5 228.4L293.8 323.8L294.1 303.0L294.4 307.1L294.7 240.7L295.0 326.8L295.2 305.5L295.5 188.9L295.8 211.6L296.1 264.7L296.4 284.7L296.6 290.0L296.9 312.5L297.2 334.6L297.5 311.6L297.8 311.6L298.1 259.1L298.3 215.9L298.6 293.6L298.9 333.1L299.2 269.1L299.5 238.5L299.7 377.4L300.0 296.3L300.3 252.6L300.6 306.5L300.9 383.0L301.2 243.6L301.4 394.9L301.7 319.8L302.0 254.1L302.3 333.0L302.6 208.5L302.8 268.9L303.1 302.2L303.4 365.5L303.7 253.1L304.0 291.6L304.2 224.2L304.5 356.0L304.8 227.3L305.1 262.7L305.4 315.3L305.7 315.3L305.9 293.7L306.2 344.7L306.5 271.8L306.8 198.9L307.1 373.0L307.3 273.7L307.6 274.0L307.9 288.9L308.2 220.0L308.5 275.7L308.8 238.0L309.0 279.9L309.3 251.6L309.6 249.4L309.9 249.4L310.2 310.2L310.4 282.4L310.7 250.5L311.0 250.5L311.3 315.8L311.6 254.8L311.9 252.3L312.1 344.8L312.4 309.5L312.7 294.4L313.0 275.8L313.3 345.5L313.5 383.5L313.8 279.7L314.1 318.3L314.4 312.1L314.7 307.9L315.0 291.5L315.2 306.0L315.5 352.7L315.8 299.2L316.1 299.2L316.4 299.2L316.6 318.7L316.9 321.0L317.2 351.2L317.5 341.6L317.8 287.6L318.1 292.0L318.3 266.6L318.6 314.3L318.9 272.4L319.2 340.1L319.5 253.1L319.7 279.6L320.0 284.1L320.3 284.1L320.6 202.3L320.9 349.9L321.1 312.3L321.4 280.9L321.7 367.8L322.0 367.8L322.3 267.2L322.6 272.7L322.8 272.7L323.1 243.1L323.4 225.6L323.7 261.7L324.0 261.7L324.2 295.8L324.5 275.6L324.8 420.5L325.1 296.9L325.4 255.2L325.7 255.2L325.9 209.5L326.2 341.9L326.5 348.2L326.8 288.4L327.1 341.6L327.3 307.9L327.6 317.2L327.9 309.8L328.2 237.9L328.5 381.7L328.8 226.6L329.0 317.8L329.3 311.2L329.6 381.5L329.9 259.1L330.2 313.4L330.4 313.4L330.7 318.3L331.0 222.4L331.3 222.4L331.6 295.3L331.9 338.5L332.1 343.8L332.4 325.4L332.7 280.2L333.0 323.6L333.3 323.6L333.5 321.7L333.8 287.5L334.1 344.6L334.4 342.2L334.7 285.1L335.0 274.8L335.2 325.3L335.5 222.9L335.8 222.9L336.1 222.9L336.4 296.3L336.6 296.3L336.9 244.2L337.2 334.4L337.5 387.5L337.8 322.6L338.0 242.1L338.3 260.5L338.6 387.1L338.9 387.1L339.2 312.6L339.5 281.5L339.7 271.2L340.0 370.4L340.3 301.6L340.6 301.6L340.9 274.5L341.1 356.9L341.4 362.8L341.7 259.3L342.0 253.6L342.3 253.6L342.6 275.9L342.8 298.2L343.1 243.7L343.4 335.8L343.7 335.8L344.0 311.5L344.2 335.0L344.5 192.9L344.8 317.4L345.1 303.7L345.4 324.3L345.7 324.5L345.9 324.5L346.2 307.8L346.5 265.6L346.8 345.9L347.1 268.6L347.3 249.9L347.6 265.0L347.9 308.1L348.2 265.5L348.5 265.5L348.8 254.6L349.0 316.3L349.3 216.8L349.6 289.3L349.9 214.6L350.2 214.6L350.4 214.6L350.7 251.3L351.0 320.7L351.3 180.5L351.6 268.1L351.9 306.3L352.1 306.3L352.4 312.5L352.7 301.5L353.0 376.1L353.3 280.1L353.5 270.1L353.8 233.6L354.1 318.3L354.4 308.0L354.7 326.9L354.9 285.6L355.2 316.9L355.5 272.4L355.8 269.3L356.1 370.5L356.4 370.5L356.6 318.2L356.9 281.1L357.2 337.9L357.5 308.7L357.8 308.7L358.0 303.3L358.3 243.9L358.6 296.1L358.9 319.9L359.2 311.2L359.5 313.8L359.7 248.5L360.0 285.1L360.3 241.8L360.6 241.8L360.9 300.1L361.1 215.8L361.4 351.4L361.7 288.9L362.0 358.5L362.3 373.7L362.6 373.7L362.8 195.7L363.1 195.7L363.4 331.5L363.7 259.4L364.0 313.8L364.2 347.6L364.5 347.6L364.8 333.3L365.1 276.5L365.4 333.6L365.7 333.6L365.9 296.9L366.2 296.6L366.5 296.6L366.8 284.7L367.1 269.5L367.3 391.3L367.6 330.9L367.9 330.9L368.2 326.6L368.5 292.7L368.8 390.8L369.0 298.4L369.3 315.1L369.6 388.5L369.9 317.3L370.2 257.1L370.4 257.1L370.7 262.4L371.0 322.6L371.3 338.3L371.6 293.5L371.8 302.6L372.1 302.6L372.4 311.7L372.7 363.1L373.0 327.8L373.3 249.4L373.5 358.0L373.8 264.9L374.1 264.9L374.4 240.7L374.7 219.8L374.9 219.8L375.2 362.6L375.5 284.7L375.8 348.3L376.1 349.6L376.4 240.3L376.6 365.4L376.9 331.7L377.2 351.8L377.5 256.1L377.8 206.1L378.0 235.6L378.3 207.2L378.6 241.7L378.9 220.0L379.2 346.3L379.5 293.2L379.7 274.4L380.0 291.1L380.3 300.9L380.6 283.6L380.9 346.5L381.1 318.6L381.4 288.1L381.7 341.4L382.0 305.3L382.3 278.0L382.6 262.6L382.8 355.5L383.1 261.2L383.4 307.9L383.7 334.9L384.0 245.5L384.2 291.5L384.5 344.4L384.8 259.4L385.1 316.6L385.4 320.4L385.7 261.9L385.9 319.2L386.2 236.2L386.5 320.7L386.8 267.3L387.1 320.6L387.3 320.6L387.6 339.6L387.9 320.9L388.2 231.5L388.5 333.2L388.7 331.8L389.0 308.1L389.3 387.0L389.6 277.0L389.9 308.1L390.2 268.7L390.4 210.1L390.7 328.9L391.0 315.9L391.3 316.7L391.6 316.7L391.8 278.2L392.1 281.9L392.4 307.3L392.7 269.9L393.0 302.5L393.3 325.7L393.5 309.9L393.8 350.2L394.1 229.3L394.4 229.3L394.7 229.3L394.9 254.2L395.2 344.0L395.5 285.3L395.8 263.5L396.1 276.4L396.4 276.4L396.6 251.3L396.9 256.6L397.2 293.7L397.5 246.8L397.8 372.1L398.0 365.7L398.3 337.6L398.6 267.6L398.9 305.3L399.2 217.5L399.5 260.9L399.7 299.1L400.0 242.9L400.3 304.3L400.6 356.5L400.9 327.9L401.1 325.3L401.4 346.1L401.7 360.4L402.0 360.4L402.3 296.9L402.6 372.9L402.8 335.9L403.1 303.6L403.4 220.1L403.7 291.4L404.0 344.6L404.2 267.7L404.5 389.0L404.8 221.1L405.1 301.1L405.4 300.6L405.6 274.8L405.9 350.7L406.2 339.1L406.5 296.1L406.8 277.3L407.1 325.4L407.3 274.4L407.6 346.0L407.9 346.0L408.2 336.7L408.5 369.4L408.7 369.4L409.0 237.0L409.3 272.3L409.6 301.6L409.9 335.6L410.2 335.6L410.4 245.9L410.7 308.6L411.0 299.0L411.3 299.0L411.6 299.0L411.8 299.0L412.1 334.1L412.4 328.1L412.7 243.2L413.0 245.5L413.3 343.5L413.5 348.5L413.8 339.2L414.1 310.2L414.4 302.3L414.7 256.9L414.9 302.8L415.2 344.2L415.5 385.0L415.8 287.7L416.1 217.5L416.4 217.5L416.6 217.5L416.9 359.0L417.2 270.7L417.5 328.9L417.8 367.2L418.0 294.9L418.3 294.9L418.6 340.0L418.9 338.6L419.2 250.1L419.5 283.1L419.7 355.1L420.0 273.2L420.3 331.8L420.6 289.2L420.9 289.2L421.1 181.5L421.4 219.3L421.7 315.2L422.0 225.9L422.3 292.2L422.5 308.7L422.8 287.6L423.1 319.7L423.4 319.7L423.7 319.7L424.0 276.5L424.2 247.8L424.5 283.9L424.8 316.7L425.1 281.3L425.4 260.5L425.6 304.5L425.9 227.2L426.2 262.5L426.5 266.8L426.8 302.0L427.1 239.3L427.3 291.6L427.6 300.0L427.9 312.1L428.2 323.1L428.5 248.9L428.7 330.8L429.0 362.2L429.3 312.1L429.6 283.1L429.9 275.5L430.2 275.5L430.4 307.3L430.7 325.2L431.0 355.2L431.3 355.2L431.6 293.2L431.8 304.7L432.1 320.5L432.4 282.6L432.7 213.2L433.0 295.3L433.3 239.6L433.5 282.4L433.8 333.2L434.1 252.3L434.4 295.3L434.7 333.1L434.9 238.1L435.2 268.6L435.5 259.6L435.8 275.8L436.1 275.8L436.4 262.3L436.6 231.5L436.9 210.2L437.2 348.3L437.5 259.2L437.8 319.2L438.0 243.7L438.3 228.6L438.6 205.5L438.9 228.7L439.2 274.5L439.4 274.5L439.7 331.4L440.0 331.4L440.3 288.6L440.6 299.9L440.9 299.9L441.1 231.6L441.4 239.0L441.7 313.7L442.0 293.6L442.3 293.6L442.5 274.0L442.8 259.0L443.1 304.7L443.4 261.2L443.7 281.5L444.0 319.5L444.2 308.0L444.5 310.1L444.8 271.3L445.1 316.3L445.4 309.3L445.6 309.3L445.9 210.2L446.2 314.4L446.5 304.4L446.8 355.4L447.1 252.3L447.3 263.1L447.6 263.1L447.9 273.6L448.2 249.3L448.5 351.3L448.7 312.8L449.0 231.8L449.3 432.6L449.6 432.6L449.9 375.7L450.2 331.3L450.4 260.2L450.7 344.9L451.0 317.2L451.3 308.5L451.6 292.0L451.8 329.8L452.1 296.8L452.4 293.1L452.7 273.9L453.0 289.2L453.3 277.4L453.5 251.5L453.8 327.8L454.1 306.7L454.4 306.7L454.7 261.1L454.9 253.0L455.2 243.5L455.5 346.3L455.8 290.7L456.1 310.8L456.3 310.8L456.6 327.4L456.9 359.5L457.2 314.0L457.5 273.4L457.8 285.5L458.0 246.7L458.3 364.6L458.6 285.7L458.9 320.6L459.2 311.3L459.4 258.0L459.7 314.5L460.0 305.4L460.3 299.6L460.6 340.9L460.9 340.2L461.1 340.2L461.4 298.5L461.7 343.0L462.0 336.2L462.3 270.3L462.5 295.0L462.8 222.6L463.1 291.3L463.4 302.2L463.7 211.6L464.0 319.3L464.2 288.3L464.5 227.5L464.8 209.3L465.1 321.0L465.4 316.5L465.6 295.7L465.9 213.9L466.2 300.2L466.5 309.8L466.8 305.8L467.1 306.8L467.3 323.3L467.6 230.1L467.9 249.8L468.2 336.5L468.5 336.5L468.7 305.3L469.0 351.7L469.3 246.9L469.6 269.5L469.9 226.5L470.2 287.6L470.4 339.8L470.7 267.5L471.0 270.3L471.3 252.6L471.6 312.4L471.8 292.3L472.1 327.7L472.4 311.2L472.7 252.2L473.0 262.9L473.2 311.9L473.5 251.0L473.8 280.0L474.1 280.0L474.4 316.9L474.7 316.9L474.9 285.5L475.2 320.3L475.5 387.1L475.8 277.9L476.1 353.5L476.3 300.6L476.6 368.1L476.9 283.0L477.2 313.8L477.5 184.9L477.8 294.0L478.0 220.8L478.3 310.9L478.6 258.5L478.9 258.5L479.2 360.2L479.4 280.4L479.7 273.5L480.0 252.8L480.3 286.8L480.6 251.0L480.9 321.3L481.1 300.3L481.4 300.3L481.7 221.4L482.0 370.0L482.3 326.1L482.5 229.5L482.8 279.0L483.1 353.8L483.4 347.3L483.7 347.3L484.0 250.3L484.2 316.9L484.5 319.9L484.8 274.5L485.1 302.3L485.4 302.3L485.6 240.7L485.9 308.4L486.2 308.4L486.5 308.4L486.8 234.2L487.1 298.5L487.3 273.2L487.6 273.2L487.9 326.1L488.2 203.2L488.5 203.2L488.7 203.2L489.0 327.0L489.3 334.2L489.6 305.0L489.9 322.3L490.1 314.2L490.4 309.7L490.7 317.5L491.0 296.4L491.3 297.3L491.6 295.4L491.8 366.7L492.1 269.9L492.4 269.9L492.7 272.2L493.0 280.6L493.2 309.5L493.5 301.8L493.8 278.3L494.1 406.8L494.4 191.4L494.7 283.2L494.9 345.5L495.2 316.0L495.5 376.3L495.8 358.6L496.1 272.3L496.3 250.4L496.6 302.2L496.9 309.9L497.2 294.5L497.5 212.3L497.8 393.0L498.0 267.4L498.3 216.5L498.6 305.4L498.9 187.5L499.2 228.2L499.4 228.2L499.7 228.2L500.0 285.7L500.3 267.1L500.6 325.5L500.9 325.5L501.1 325.5L501.4 325.5L501.7 310.5L502.0 289.8L502.3 292.3L502.5 309.3L502.8 309.3L503.1 339.9L503.4 288.3L503.7 315.4L504.0 272.5L504.2 272.5L504.5 279.7L504.8 229.3L505.1 303.5L505.4 276.5L505.6 335.7L505.9 343.1L506.2 314.8L506.5 324.9L506.8 324.9L507.0 263.8L507.3 302.3L507.6 332.6L507.9 380.9L508.2 283.1L508.5 247.8L508.7 244.8L509.0 253.0L509.3 200.8L509.6 265.6L509.9 359.8L510.1 284.1L510.4 361.4L510.7 289.0L511.0 251.8L511.3 223.6L511.6 223.6L511.8 223.6L512.1 289.6L512.4 228.7L512.7 288.5L513.0 365.7L513.2 298.9L513.5 317.1L513.8 322.2L514.1 349.1L514.4 270.1L514.7 331.7L514.9 248.4L515.2 283.4L515.5 296.0L515.8 278.8L516.1 268.7L516.3 297.4L516.6 303.1L516.9 251.8L517.2 325.2L517.5 286.4L517.8 307.8L518.0 270.5L518.3 250.3L518.6 316.3L518.9 238.1L519.2 321.1L519.4 264.5L519.7 264.0L520.0 263.0L520.3 263.0L520.6 356.6L520.9 279.9L521.1 355.4L521.4 270.0L521.7 270.0L522.0 297.1L522.3 205.0L522.5 265.4L522.8 303.7L523.1 322.7L523.4 341.8L523.7 275.6L523.9 288.2L524.2 368.2L524.5 266.3L524.8 266.3L525.1 315.2L525.4 407.6L525.6 393.1L525.9 264.5L526.2 293.4L526.5 293.4L526.8 316.1L527.0 265.6L527.3 265.6L527.6 384.3L527.9 277.8L528.2 265.0L528.5 265.0L528.7 304.2L529.0 304.4L529.3 281.0L529.6 232.9L529.9 313.5L530.1 390.5L530.4 304.6L530.7 265.5L531.0 360.8L531.3 225.0L531.6 225.0L531.8 335.4L532.1 237.2L532.4 278.3L532.7 282.2L533.0 305.0L533.2 305.0L533.5 309.2L533.8 344.6L534.1 331.9L534.4 247.9L534.7 288.6L534.9 335.0L535.2 328.8L535.5 320.3L535.8 345.3L536.1 250.7L536.3 272.3L536.6 272.3L536.9 270.6L537.2 285.4L537.5 292.3L537.8 342.0L538.0 299.8L538.3 363.9L538.6 363.9L538.9 373.4L539.2 315.1L539.4 332.5L539.7 339.4L540.0 328.2L540.3 323.1L540.6 323.1L540.8 334.1L541.1 271.6L541.4 327.1L541.7 348.6L542.0 231.5L542.3 275.0L542.5 275.0L542.8 275.0L543.1 275.0L543.4 271.5L543.7 256.5L543.9 323.5L544.2 297.9L544.5 233.6L544.8 305.0L545.1 362.1L545.4 294.1L545.6 273.1L545.9 415.3L546.2 256.7L546.5 266.3L546.8 338.5L547.0 309.2L547.3 281.8L547.6 363.1L547.9 363.1L548.2 335.8L548.5 263.7L548.7 237.9L549.0 219.1L549.3 254.7L549.6 292.7L549.9 280.8L550.1 321.8L550.4 254.3L550.7 264.1L551.0 232.5L551.3 336.3L551.6 241.1L551.8 306.2L552.1 265.1L552.4 252.2L552.7 335.4L553.0 335.4L553.2 309.3L553.5 309.3L553.8 389.4L554.1 239.8L554.4 272.5L554.7 253.8L554.9 253.8L555.2 388.6L555.5 249.7L555.8 388.0L556.1 304.4L556.3 304.4L556.6 335.1L556.9 285.9L557.2 283.4L557.5 264.6L557.7 372.0L558.0 320.1L558.3 320.1L558.6 320.1L558.9 353.1L559.2 308.4L559.4 278.5L559.7 196.4L560.0 287.0L560.3 225.8L560.6 315.6L560.8 220.6L561.1 289.9L561.4 353.8L561.7 334.0L562.0 256.0L562.3 313.9L562.5 262.3L562.8 294.2L563.1 316.0L563.4 316.0L563.7 242.3L563.9 266.9L564.2 380.0L564.5 300.3L564.8 357.0L565.1 240.4L565.4 232.5L565.6 232.5L565.9 232.5L566.2 258.5L566.5 293.6L566.8 293.6L567.0 384.8L567.3 372.9L567.6 372.9L567.9 248.8L568.2 266.2L568.5 309.7L568.7 347.5L569.0 395.6L569.3 267.2L569.6 258.9L569.9 329.9L570.1 225.6L570.4 253.1L570.7 253.1L571.0 329.9L571.3 354.4L571.6 255.8L571.8 307.3L572.1 268.3L572.4 354.7L572.7 354.7L573.0 264.7L573.2 324.8L573.5 249.7L573.8 306.7L574.1 263.4L574.4 261.0L574.6 238.6L574.9 361.8L575.2 276.5L575.5 259.6L575.8 270.4L576.1 288.3L576.3 244.3L576.6 244.3L576.9 277.7L577.2 332.4L577.5 305.6L577.7 258.4L578.0 323.1L578.3 323.7L578.6 295.4L578.9 243.2L579.2 228.2L579.4 228.2L579.7 333.8L580.0 273.8L580.3 306.9L580.6 316.8L580.8 196.0L581.1 321.9L581.4 216.7L581.7 336.4L582.0 255.3L582.3 216.4L582.5 346.6L582.8 275.1L583.1 297.3L583.4 260.7L583.7 285.2L583.9 282.5L584.2 311.5L584.5 295.6L584.8 246.1L585.1 180.9L585.4 341.7L585.6 300.0L585.9 307.4L586.2 267.6L586.5 287.8L586.8 333.8L587.0 226.4L587.3 268.9L587.6 256.7L587.9 298.7L588.2 298.7L588.5 305.5L588.7 336.9L589.0 386.5L589.3 263.2L589.6 310.9L589.9 311.0L590.1 323.8L590.4 261.6L590.7 374.8L591.0 374.8L591.3 360.8L591.5 336.4L591.8 254.1L592.1 354.1L592.4 261.4L592.7 261.4L593.0 357.5L593.2 312.4L593.5 387.0L593.8 387.0L594.1 267.0L594.4 291.6L594.6 299.5L594.9 272.1L595.2 292.9L595.5 304.3L595.8 268.3L596.1 368.1L596.3 368.1L596.6 368.1L596.9 260.2L597.2 272.9L597.5 340.2L597.7 303.7L598.0 310.0L598.3 288.9L598.6 280.2L598.9 396.4L599.2 273.4L599.4 291.6L599.7 229.3L600.0 318.5L600.3 304.0L600.6 304.0L600.8 264.6L601.1 264.6L601.4 264.6L601.7 316.5L602.0 296.0L602.3 350.7L602.5 260.9L602.8 232.5L603.1 233.9L603.4 273.8L603.7 344.1L603.9 322.1L604.2 332.7L604.5 255.4L604.8 325.7L605.1 325.7L605.4 300.4L605.6 356.4L605.9 289.4L606.2 330.7L606.5 301.4L606.8 323.2L607.0 323.2L607.3 328.6L607.6 379.3L607.9 269.3L608.2 260.0L608.4 270.1L608.7 300.9L609.0 310.5L609.3 322.7L609.6 323.1L609.9 328.0L610.1 331.3L610.4 373.2L610.7 256.3L611.0 388.1L611.3 305.7L611.5 315.7L611.8 315.7L612.1 262.0L612.4 305.5L612.7 305.5L613.0 260.5L613.2 210.7L613.5 210.7L613.8 329.6L614.1 278.8L614.4 278.8L614.6 285.6L614.9 285.6L615.2 330.2L615.5 305.3L615.8 273.6L616.1 292.8L616.3 417.4L616.6 307.2L616.9 275.7L617.2 365.1L617.5 365.1L617.7 284.2L618.0 325.5L618.3 282.8L618.6 216.0L618.9 216.0L619.2 239.2L619.4 336.9L619.7 298.6L620.0 251.6L620.3 256.6L620.6 275.0L620.8 345.3L621.1 302.7L621.4 302.7L621.7 204.8L622.0 383.7L622.3 320.8L622.5 320.8L622.8 301.9L623.1 243.8L623.4 306.0L623.7 317.0L623.9 254.5L624.2 337.5L624.5 263.2L624.8 233.7L625.1 342.2L625.3 283.4L625.6 288.9L625.9 349.8L626.2 355.2L626.5 355.2L626.8 326.6L627.0 329.9L627.3 261.1L627.6 252.5L627.9 315.2L628.2 343.8L628.4 317.4L628.7 262.9L629.0 351.3L629.3 321.9L629.6 268.2L629.9 276.8L630.1 285.1L630.4 319.6L630.7 344.2L631.0 404.9L631.3 279.6L631.5 343.5L631.8 306.0L632.1 337.7L632.4 367.1L632.7 342.7L633.0 270.8L633.2 285.1L633.5 270.0L633.8 312.9L634.1 320.0L634.4 266.8L634.6 376.0L634.9 290.9L635.2 248.6L635.5 393.8L635.8 361.9L636.1 251.2L636.3 318.7L636.6 258.6L636.9 258.6L637.2 258.6L637.5 337.9L637.7 267.9L638.0 360.9L638.3 299.1L638.6 303.8L638.9 295.3L639.2 366.1L639.4 260.9L639.7 309.0L640.0 238.9L640.3 270.7L640.6 321.3L640.8 282.7L641.1 363.0L641.4 228.6L641.7 398.4L642.0 303.4L642.2 196.9L642.5 289.3L642.8 259.7L643.1 244.1L643.4 242.4L643.7 332.4L643.9 314.9L644.2 259.5L644.5 258.0L644.8 290.2L645.1 300.7L645.3 265.4L645.6 290.2L645.9 252.3L646.2 317.4L646.5 317.4L646.8 229.8L647.0 315.7L647.3 239.8L647.6 288.5L647.9 319.5L648.2 319.5L648.4 243.4L648.7 297.7L649.0 375.3L649.3 266.3L649.6 303.3L649.9 233.1L650.1 309.9L650.4 274.6L650.7 310.1L651.0 266.3L651.3 251.8L651.5 300.1L651.8 207.6L652.1 401.6L652.4 358.9L652.7 238.8L653.0 379.2L653.2 379.2L653.5 301.1L653.8 254.2L654.1 298.1L654.4 307.7L654.6 307.7L654.9 335.3L655.2 219.8L655.5 269.8L655.8 258.4L656.1 288.5L656.3 315.3L656.6 283.0L656.9 390.6L657.2 311.5L657.5 348.2L657.7 252.7L658.0 203.3L658.3 274.9L658.6 256.4L658.9 256.4L659.1 318.4L659.4 278.4L659.7 319.3L660.0 302.1L660.3 292.2L660.6 367.2L660.8 268.4L661.1 324.8L661.4 324.8L661.7 358.1L662.0 302.3L662.2 302.3L662.5 221.5L662.8 212.0L663.1 246.5L663.4 338.1L663.7 288.6L663.9 259.8L664.2 300.2L664.5 285.4L664.8 285.4L665.1 323.5L665.3 390.9L665.6 272.7L665.9 263.7L666.2 335.7L666.5 239.2L666.8 319.9L667.0 319.9L667.3 359.6L667.6 300.9L667.9 387.5L668.2 251.8L668.4 301.7L668.7 337.3L669.0 214.6L669.3 214.6L669.6 340.5L669.9 322.6L670.1 314.3L670.4 298.9L670.7 340.4L671.0 308.1L671.3 323.3L671.5 278.4L671.8 315.2L672.1 323.3L672.4 319.7L672.7 200.6L673.0 306.8L673.2 269.1L673.5 272.1L673.8 244.6L674.1 244.6L674.4 347.1L674.6 302.3L674.9 261.6L675.2 261.6L675.5 329.4L675.8 260.9L676.0 334.8L676.3 299.4L676.6 358.3L676.9 282.9L677.2 294.0L677.5 342.5L677.7 330.4L678.0 288.0L678.3 233.5L678.6 291.6L678.9 344.2L679.1 323.3L679.4 250.5L679.7 335.4L680.0 234.9L680.3 241.8L680.6 251.6L680.8 367.4L681.1 300.9L681.4 361.0L681.7 324.9L682.0 325.4L682.2 325.4L682.5 281.4L682.8 306.1L683.1 320.9L683.4 260.8L683.7 251.5L683.9 262.1L684.2 262.1L684.5 291.4L684.8 265.7L685.1 301.6L685.3 285.0L685.6 323.2L685.9 289.6L686.2 289.6L686.5 289.6L686.8 353.2L687.0 277.3L687.3 318.4L687.6 320.3L687.9 282.2L688.2 296.7L688.4 273.3L688.7 266.0L689.0 368.9L689.3 275.7L689.6 255.2L689.9 255.2L690.1 255.2L690.4 215.7L690.7 327.7L691.0 303.3L691.3 249.9L691.5 274.5L691.8 304.4L692.1 246.0L692.4 308.5L692.7 202.0L692.9 331.9L693.2 304.5L693.5 278.5L693.8 393.3L694.1 343.6L694.4 338.8L694.6 325.6L694.9 325.6L695.2 275.9L695.5 354.4L695.8 334.0L696.0 258.2L696.3 322.7L696.6 276.6L696.9 250.7L697.2 310.0L697.5 255.1L697.7 288.5L698.0 324.9L698.3 267.9L698.6 268.8L698.9 220.0L699.1 308.8L699.4 310.4L699.7 276.2L700.0 270.4L700.3 258.2L700.6 213.7L700.8 277.4L701.1 312.0L701.4 246.6L701.7 401.3L702.0 315.4L702.2 301.0L702.5 233.3L702.8 367.1L703.1 281.4L703.4 281.4L703.7 317.3L703.9 256.8L704.2 306.0L704.5 268.5L704.8 305.4L705.1 331.6L705.3 187.7L705.6 275.5L705.9 325.5L706.2 271.9L706.5 279.5L706.8 300.0L707.0 323.4L707.3 311.3L707.6 324.6L707.9 315.6L708.2 315.6L708.4 268.8L708.7 408.9L709.0 282.3L709.3 306.3L709.6 310.8L709.8 313.0L710.1 268.1L710.4 256.7L710.7 256.7L711.0 353.4L711.3 294.7L711.5 294.7L711.8 321.5L712.1 239.7L712.4 196.5L712.7 196.5L712.9 365.3L713.2 287.3L713.5 318.1L713.8 368.4L714.1 297.1L714.4 283.3L714.6 239.1L714.9 359.1L715.2 335.9L715.5 274.4L715.8 274.4L716.0 314.8L716.3 325.9L716.6 344.9L716.9 324.3L717.2 265.3L717.5 307.9L717.7 251.8L718.0 251.8L718.3 302.9L718.6 292.9L718.9 295.1L719.1 326.3L719.4 268.4L719.7 223.7L720.0 223.7L720.3 322.9L720.6 322.9L720.8 355.0L721.1 334.7L721.4 334.7L721.7 353.0L722.0 347.4L722.2 304.4L722.5 309.7L722.8 334.7L723.1 323.6L723.4 288.4L723.7 256.9L723.9 385.0L724.2 315.2L724.5 309.9L724.8 279.6L725.1 243.3L725.3 334.7L725.6 294.1L725.9 317.3L726.2 257.7L726.5 291.5L726.7 287.5L727.0 330.3L727.3 279.0L727.6 279.0L727.9 302.0L728.2 316.9L728.4 218.0L728.7 326.0L729.0 231.2L729.3 310.3L729.6 310.3L729.8 310.3L730.1 287.7L730.4 296.5L730.7 293.3L731.0 278.4L731.3 332.3L731.5 319.0L731.8 306.4L732.1 254.8L732.4 266.7L732.7 240.7L732.9 286.5L733.2 279.5L733.5 338.7L733.8 201.7L734.1 277.0L734.4 263.9L734.6 322.7L734.9 282.0L735.2 282.0L735.5 327.2L735.8 244.4L736.0 288.5L736.3 265.4L736.6 378.9L736.9 236.4L737.2 236.4L737.5 338.6L737.7 319.8L738.0 261.6L738.3 265.1L738.6 276.7L738.9 343.6L739.1 281.8L739.4 344.9L739.7 267.3L740.0 267.3L740.3 295.2L740.6 314.1L740.8 332.9L741.1 302.6L741.4 270.8L741.7 295.8L742.0 296.5L742.2 261.1L742.5 298.1L742.8 264.9L743.1 264.9L743.4 264.9L743.6 259.0L743.9 259.0L744.2 259.0L744.5 259.0L744.8 314.8L745.1 215.0L745.3 340.1L745.6 294.0L745.9 294.0L746.2 343.9L746.5 343.9L746.7 294.0L747.0 388.8L747.3 287.1L747.6 287.1L747.9 282.6L748.2 213.2L748.4 251.8L748.7 302.5L749.0 338.0L749.3 255.3L749.6 385.7L749.8 244.5L750.1 244.5L750.4 266.6L750.7 372.0L751.0 318.6L751.3 256.0L751.5 212.9L751.8 223.1L752.1 231.4L752.4 302.4L752.7 227.9L752.9 264.4L753.2 264.4L753.5 266.4L753.8 350.1L754.1 323.4L754.4 335.8L754.6 320.4L754.9 247.2L755.2 282.1L755.5 274.0L755.8 247.8L756.0 311.7L756.3 243.1L756.6 263.3L756.9 267.8L757.2 267.8L757.5 268.0L757.7 325.1L758.0 279.5L758.3 294.3L758.6 271.4L758.9 271.4L759.1 323.2L759.4 323.2L759.7 323.2L760.0 247.1L760.3 302.8L760.5 290.9L760.8 356.5L761.1 236.9L761.4 274.4L761.7 280.8L762.0 267.2L762.2 326.5L762.5 326.5L762.8 350.5L763.1 350.5L763.4 297.8L763.6 297.8L763.9 299.7L764.2 258.9L764.5 253.0L764.8 267.2L765.1 276.7L765.3 228.6L765.6 272.0L765.9 252.8L766.2 314.6L766.5 289.1L766.7 289.7L767.0 257.1L767.3 308.9L767.6 318.0L767.9 310.1L768.2 310.1L768.4 343.7L768.7 321.4L769.0 302.9L769.3 256.0L769.6 203.4L769.8 277.0L770.1 325.6L770.4 241.0L770.7 275.3L771.0 275.3L771.3 353.4L771.5 289.6L771.8 373.3L772.1 245.4L772.4 262.7L772.7 300.5L772.9 273.5L773.2 273.5L773.5 273.5L773.8 235.5L774.1 300.9L774.4 284.0L774.6 284.0L774.9 307.4L775.2 315.8L775.5 298.7L775.8 284.7L776.0 321.2L776.3 284.5L776.6 243.0L776.9 243.0L777.2 243.0L777.4 276.9L777.7 269.5L778.0 342.7L778.3 305.2L778.6 255.4L778.9 302.1L779.1 298.6L779.4 329.7L779.7 311.8L780.0 289.9L780.3 296.1L780.5 296.1L780.8 280.6L781.1 339.7L781.4 298.3L781.7 330.4L782.0 252.6L782.2 292.3L782.5 256.8L782.8 256.8L783.1 382.9L783.4 261.9L783.6 271.2L783.9 270.0L784.2 270.0L784.5 335.6L784.8 314.7L785.1 293.3L785.3 293.3L785.6 195.3L785.9 220.8L786.2 343.0L786.5 348.0L786.7 348.0L787.0 272.9L787.3 244.6L787.6 266.8L787.9 266.8L788.2 311.5L788.4 350.2L788.7 350.2L789.0 303.2L789.3 309.1L789.6 309.1L789.8 328.2L790.1 321.6L790.4 291.1L790.7 317.9L791.0 317.9L791.3 297.2L791.5 297.2L791.8 212.6L792.1 319.0L792.4 210.2L792.7 309.0L792.9 268.1L793.2 279.7L793.5 306.1L793.8 277.9L794.1 389.1L794.3 311.3L794.6 267.9L794.9 344.4L795.2 332.8L795.5 302.7L795.8 273.3L796.0 283.3L796.3 250.4L796.6 279.4L796.9 295.9L797.2 310.7L797.4 217.5L797.7 349.4L798.0 349.4L798.3 282.4L798.6 396.9L798.9 370.2L799.1 370.2L799.4 320.7L799.7 307.1L800.0 342.3L800.3 342.3L800.5 276.2L800.8 325.6L801.1 271.9L801.4 260.0L801.7 294.3L802.0 289.5L802.2 346.1L802.5 299.1L802.8 384.4L803.1 288.0L803.4 299.0L803.6 314.9L803.9 293.6L804.2 293.6L804.5 228.5L804.8 262.6L805.1 316.7L805.3 327.4L805.6 327.4L805.9 293.4L806.2 264.7L806.5 256.9L806.7 291.0L807.0 260.7L807.3 322.1L807.6 294.4L807.9 287.4L808.2 228.1L808.4 306.5L808.7 306.5L809.0 232.5L809.3 232.5L809.6 255.7L809.8 377.8L810.1 377.8L810.4 323.9L810.7 323.9L811.0 323.9L811.2 353.0L811.5 353.8L811.8 258.7L812.1 329.9L812.4 294.9L812.7 325.5L812.9 334.9L813.2 345.3L813.5 296.3L813.8 317.1L814.1 328.5L814.3 267.6L814.6 322.5L814.9 293.0L815.2 296.2L815.5 320.6L815.8 318.0L816.0 318.0L816.3 318.0L816.6 324.6L816.9 285.6L817.2 285.6L817.4 295.9L817.7 282.8L818.0 311.8L818.3 342.1L818.6 311.0L818.9 304.3L819.1 294.0L819.4 320.3L819.7 310.2L820.0 246.9L820.3 331.1L820.5 331.1L820.8 321.5L821.1 270.7L821.4 336.5L821.7 272.5L822.0 272.5L822.2 357.4L822.5 311.0L822.8 311.0L823.1 297.2L823.4 236.5L823.6 346.7L823.9 253.1L824.2 280.2L824.5 319.1L824.8 276.7L825.1 203.0L825.3 351.8L825.6 318.8L825.9 276.1L826.2 276.1L826.5 276.1L826.7 237.5L827.0 237.5L827.3 315.9L827.6 315.9L827.9 344.8L828.1 336.1L828.4 272.4L828.7 270.9L829.0 301.5L829.3 296.5L829.6 283.6L829.8 297.8L830.1 312.7L830.4 343.1L830.7 283.8L831.0 226.1L831.2 357.6L831.5 236.0L831.8 338.9L832.1 186.8L832.4 307.1L832.7 346.9L832.9 352.1L833.2 315.5L833.5 283.8L833.8 297.2L834.1 297.4L834.3 359.8L834.6 296.0L834.9 292.3L835.2 294.6L835.5 306.4L835.8 307.1L836.0 276.1L836.3 288.1L836.6 303.1L836.9 303.1L837.2 279.2L837.4 293.8L837.7 312.3L838.0 326.0L838.3 293.3L838.6 293.3L838.9 331.4L839.1 278.4L839.4 280.0L839.7 275.4L840.0 351.0L840.3 355.2L840.5 304.3L840.8 356.7L841.1 262.7L841.4 326.4L841.7 311.1L842.0 272.0L842.2 273.2L842.5 276.8L842.8 319.4L843.1 319.4L843.4 319.4L843.6 380.1L843.9 343.5L844.2 343.5L844.5 340.3L844.8 299.0L845.0 299.0L845.3 229.7L845.6 307.6L845.9 246.3L846.2 273.5L846.5 216.0L846.7 266.0L847.0 276.6L847.3 248.6L847.6 327.2L847.9 357.1L848.1 326.4L848.4 324.9L848.7 279.3L849.0 248.9L849.3 264.4L849.6 199.2L849.8 331.3L850.1 326.8L850.4 309.2L850.7 309.2L851.0 253.2L851.2 253.2L851.5 298.0L851.8 222.5L852.1 301.7L852.4 228.8L852.7 352.1L852.9 262.8L853.2 223.7L853.5 285.9L853.8 296.4L854.1 270.0L854.3 326.8L854.6 326.8L854.9 384.9L855.2 321.3L855.5 175.8L855.8 175.8L856.0 175.8L856.3 347.8L856.6 347.8L856.9 316.7L857.2 252.4L857.4 235.8L857.7 300.5L858.0 300.4L858.3 209.3L858.6 209.3L858.9 259.7L859.1 352.9L859.4 352.9L859.7 280.1L860.0 345.5L860.3 348.1L860.5 348.1L860.8 281.4L861.1 385.6L861.4 244.4L861.7 347.4L861.9 302.4L862.2 269.0L862.5 244.1L862.8 354.6L863.1 314.6L863.4 260.4L863.6 259.4L863.9 322.8L864.2 304.3L864.5 274.2L864.8 292.3L865.0 288.5L865.3 283.9L865.6 228.9L865.9 350.5L866.2 408.1L866.5 203.1L866.7 219.3L867.0 264.2L867.3 293.2L867.6 347.6L867.9 273.0L868.1 332.8L868.4 255.9L868.7 251.5L869.0 329.3L869.3 311.1L869.6 327.7L869.8 274.8L870.1 274.3L870.4 249.7L870.7 302.2L871.0 279.1L871.2 229.6L871.5 339.0L871.8 316.8L872.1 316.8L872.4 316.8L872.7 311.0L872.9 278.3L873.2 278.3L873.5 323.5L873.8 263.6L874.1 288.0L874.3 369.1L874.6 245.0L874.9 245.0L875.2 301.0L875.5 300.8L875.8 301.5L876.0 307.7L876.3 214.4L876.6 271.5L876.9 263.5L877.2 239.2L877.4 275.7L877.7 290.1L878.0 330.5L878.3 219.4L878.6 284.9L878.8 277.2L879.1 286.2L879.4 269.0L879.7 264.1L880.0 264.1L880.3 264.1L880.5 272.0L880.8 313.0L881.1 390.6L881.4 326.6L881.7 289.3L881.9 289.3L882.2 190.2L882.5 286.7L882.8 301.4L883.1 325.0L883.4 312.5L883.6 272.0L883.9 328.3L884.2 282.7L884.5 257.8L884.8 316.3L885.0 284.6L885.3 305.8L885.6 290.2L885.9 320.1L886.2 277.8L886.5 196.5L886.7 332.5L887.0 245.1L887.3 317.6L887.6 348.6L887.9 330.1L888.1 317.3L888.4 332.7L888.7 367.5L889.0 315.3L889.3 240.9L889.6 298.0L889.8 331.5L890.1 240.7L890.4 240.7L890.7 236.7L891.0 287.6L891.2 283.4L891.5 230.6L891.8 290.1L892.1 318.3L892.4 287.3L892.7 287.3L892.9 253.3L893.2 271.3L893.5 306.0L893.8 306.0L894.1 276.6L894.3 338.6L894.6 259.7L894.9 254.8L895.2 302.4L895.5 311.1L895.7 309.4L896.0 263.0L896.3 317.9L896.6 317.9L896.9 318.2L897.2 307.7L897.4 270.5L897.7 287.2L898.0 301.4L898.3 322.9L898.6 318.2L898.8 283.4L899.1 347.6L899.4 311.9L899.7 339.3L900.0 314.1L900.3 314.1L900.5 320.3L900.8 299.9L901.1 306.3L901.4 284.5L901.7 297.4L901.9 297.4L902.2 297.4L902.5 301.5L902.8 301.5L903.1 331.5L903.4 307.5L903.6 307.5L903.9 297.0L904.2 297.0L904.5 279.9L904.8 292.6L905.0 292.6L905.3 279.7L905.6 301.0L905.9 319.7L906.2 319.7L906.5 306.8L906.7 256.5L907.0 213.0L907.3 273.9L907.6 323.6L907.9 335.6L908.1 312.3L908.4 312.3L908.7 334.1L909.0 304.6L909.3 304.6L909.6 306.9L909.8 210.1L910.1 281.8L910.4 305.8L910.7 323.3L911.0 378.6L911.2 331.2L911.5 351.1L911.8 351.1L912.1 351.1L912.4 351.1L912.6 285.8L912.9 352.3L913.2 275.2L913.5 280.6L913.8 303.9L914.1 316.6L914.3 291.7L914.6 278.8L914.9 255.8L915.2 272.7L915.5 336.3L915.7 324.6L916.0 274.4L916.3 211.9L916.6 334.3L916.9 257.6L917.2 242.8L917.4 332.5L917.7 360.0L918.0 261.3L918.3 391.9L918.6 312.2L918.8 273.6L919.1 273.0L919.4 268.2L919.7 330.7L920.0 286.5L920.3 312.8L920.5 344.9L920.8 327.2L921.1 257.7L921.4 257.7L921.7 257.7L921.9 257.7L922.2 257.7L922.5 288.4L922.8 273.4L923.1 257.9L923.4 261.3L923.6 332.3L923.9 312.7L924.2 330.0L924.5 284.8L924.8 299.0L925.0 253.9L925.3 290.0L925.6 331.7L925.9 331.7L926.2 349.3L926.5 321.8L926.7 321.8L927.0 253.6L927.3 211.7L927.6 211.7L927.9 350.8L928.1 331.0L928.4 289.1L928.7 335.1L929.0 364.2L929.3 326.1L929.5 294.3L929.8 294.3L930.1 305.3L930.4 327.4L930.7 306.3L931.0 312.5L931.2 289.3L931.5 243.2L931.8 237.9L932.1 248.9L932.4 329.2L932.6 256.8L932.9 267.1L933.2 353.0L933.5 241.1L933.8 321.6L934.1 316.3L934.3 214.2L934.6 400.8L934.9 231.3L935.2 231.3L935.5 231.3L935.7 363.4L936.0 304.9L936.3 227.5L936.6 332.4L936.9 345.1L937.2 291.8L937.4 326.1L937.7 239.5L938.0 248.8L938.3 261.5L938.6 289.4L938.8 318.0L939.1 263.7L939.4 292.0L939.7 281.7L940.0 299.6L940.3 321.0L940.5 305.4L940.8 249.5L941.1 337.9L941.4 233.4L941.7 296.0L941.9 339.8L942.2 267.7L942.5 232.5L942.8 263.7L943.1 384.7L943.4 239.0L943.6 327.9L943.9 248.0L944.2 359.3L944.5 315.0L944.8 273.8L945.0 267.3L945.3 242.9L945.6 326.2L945.9 242.1L946.2 341.8L946.4 286.6L946.7 286.6L947.0 230.0L947.3 277.1L947.6 330.8L947.9 306.1L948.1 311.3L948.4 281.6L948.7 261.8L949.0 298.3L949.3 288.9L949.5 252.4L949.8 322.6L950.1 273.5L950.4 273.5L950.7 272.4L951.0 275.8L951.2 342.5L951.5 351.5L951.8 351.5L952.1 347.9L952.4 349.7L952.6 239.0L952.9 279.0L953.2 279.0L953.5 334.1L953.8 268.5L954.1 308.0L954.3 308.0L954.6 291.2L954.9 278.6L955.2 232.3L955.5 244.4L955.7 277.3L956.0 283.3L956.3 304.6L956.6 269.0L956.9 359.3L957.2 218.1L957.4 287.8L957.7 279.9L958.0 394.7L958.3 253.1L958.6 219.8L958.8 232.7L959.1 293.3L959.4 299.3L959.7 267.5L960.0 299.5L960.3 267.6L960.5 290.4L960.8 290.4L961.1 290.4L961.4 232.1L961.7 303.3L961.9 303.3L962.2 303.3L962.5 246.4L962.8 375.5L963.1 307.5L963.3 373.0L963.6 296.6L963.9 264.2L964.2 253.7L964.5 213.1L964.8 347.1L965.0 334.5L965.3 334.5L965.6 334.5L965.9 334.5L966.2 277.4L966.4 318.4L966.7 208.8L967.0 270.8L967.3 314.7L967.6 358.7L967.9 274.7L968.1 280.2L968.4 269.3L968.7 281.5L969.0 315.2L969.3 269.3L969.5 337.7L969.8 261.0L970.1 298.1L970.4 263.9L970.7 298.4L971.0 336.4L971.2 372.0L971.5 372.0L971.8 250.9L972.1 294.1L972.4 309.7L972.6 275.8L972.9 312.0L973.2 293.5L973.5 337.4L973.8 335.3L974.1 268.6L974.3 312.9L974.6 331.8L974.9 328.6L975.2 328.6L975.5 248.5L975.7 330.7L976.0 389.7L976.3 335.6L976.6 335.6L976.9 335.6L977.2 296.4L977.4 266.8L977.7 306.9L978.0 276.2L978.3 327.1L978.6 286.8L978.8 260.6L979.1 211.3L979.4 242.4L979.7 319.1L980.0 331.2L980.2 359.0L980.5 319.3L980.8 252.0L981.1 252.0L981.4 333.9L981.7 333.1L981.9 280.4L982.2 273.5L982.5 301.0L982.8 315.2L983.1 209.1L983.3 252.8L983.6 249.3L983.9 249.7L984.2 379.4L984.5 307.6L984.8 327.8L985.0 246.0L985.3 373.4L985.6 210.0L985.9 296.7L986.2 327.8L986.4 248.5L986.7 310.6L987.0 310.6L987.3 332.7L987.6 393.7L987.9 393.7L988.1 262.3L988.4 302.4L988.7 289.5L989.0 269.1L989.3 317.5L989.5 329.9L989.8 272.1L990.1 359.6L990.4 275.6L990.7 239.2L991.0 239.2L991.2 239.2L991.5 323.1L991.8 325.6L992.1 288.6L992.4 337.0L992.6 293.9L992.9 322.7L993.2 402.6L993.5 202.4L993.8 308.9L994.1 308.9L994.3 274.6L994.6 267.1L994.9 267.1L995.2 264.8L995.5 413.3L995.7 280.9L996.0 280.9L996.3 287.1L996.6 293.5L996.9 293.5L997.1 342.5L997.4 372.1L997.7 237.2L998.0 247.5L998.3 335.9L998.6 250.6L998.8 250.6L999.1 265.6L999.4 265.6L999.7 295.1L1000.0 281.0L1000.2 380.4L1000.5 229.7L1000.8 291.9L1001.1 328.9L1001.4 233.9L1001.7 264.2L1001.9 223.7L1002.2 254.9L1002.5 214.7L1002.8 317.4L1003.1 236.3L1003.3 246.5L1003.6 387.3L1003.9 403.3L1004.2 285.4L1004.5 248.3L1004.8 331.3L1005.0 309.5L1005.3 328.4L1005.6 328.4L1005.9 217.6L1006.2 291.2L1006.4 291.2L1006.7 274.2L1007.0 320.3L1007.3 230.4L1007.6 284.2L1007.9 284.2L1008.1 367.3L1008.4 252.5L1008.7 252.5L1009.0 332.2L1009.3 359.0L1009.5 274.7L1009.8 358.4L1010.1 358.4L1010.4 300.5L1010.7 317.4L1011.0 253.1L1011.2 270.5L1011.5 272.2L1011.8 325.1L1012.1 325.1L1012.4 263.5L1012.6 293.0L1012.9 293.0L1013.2 285.7L1013.5 314.8L1013.8 251.6L1014.0 313.7L1014.3 394.0L1014.6 303.3L1014.9 328.8L1015.2 223.9L1015.5 292.8L1015.7 292.2L1016.0 362.8L1016.3 267.6L1016.6 267.6L1016.9 363.1L1017.1 305.3L1017.4 319.2L1017.7 205.5L1018.0 220.9L1018.3 314.8L1018.6 395.3L1018.8 294.2L1019.1 305.1L1019.4 376.0L1019.7 342.5L1020.0 221.7L1020.2 281.2L1020.5 364.3L1020.8 286.1L1021.1 245.3L1021.4 207.9L1021.7 262.0L1021.9 239.9L1022.2 279.6L1022.5 231.0L1022.8 231.0L1023.1 389.9L1023.3 332.2L1023.6 287.6L1023.9 347.3L1024.2 265.2L1024.5 283.5L1024.8 286.5L1025.0 286.5L1025.3 277.3L1025.6 379.0L1025.9 322.8L1026.2 322.8L1026.4 265.1L1026.7 338.0L1027.0 258.3L1027.3 259.9L1027.6 216.3L1027.9 216.3L1028.1 271.7L1028.4 271.7L1028.7 270.5L1029.0 306.4L1029.3 351.8L1029.5 306.1L1029.8 292.7L1030.1 219.7L1030.4 303.4L1030.7 323.2L1030.9 257.4L1031.2 324.6L1031.5 321.5L1031.8 283.7L1032.1 369.0L1032.4 296.7L1032.6 260.1L1032.9 253.6L1033.2 351.1L1033.5 234.7L1033.8 375.0L1034.0 253.2L1034.3 300.5L1034.6 307.0L1034.9 257.1L1035.2 304.8L1035.5 336.4L1035.7 214.8L1036.0 276.6L1036.3 276.6L1036.6 254.8L1036.9 316.1L1037.1 269.6L1037.4 275.9L1037.7 380.4L1038.0 273.5L1038.3 240.8L1038.6 305.9L1038.8 259.2L1039.1 260.1L1039.4 292.6L1039.7 331.5L1040.0 350.9L1040.2 350.9L1040.5 278.5L1040.8 319.4L1041.1 323.9L1041.4 272.7L1041.7 272.7L1041.9 243.9L1042.2 307.3L1042.5 338.1L1042.8 313.8L1043.1 303.4L1043.3 278.1L1043.6 334.9L1043.9 263.3L1044.2 245.3L1044.5 354.8L1044.8 354.8L1045.0 273.0L1045.3 291.8L1045.6 275.6L1045.9 265.3L1046.2 322.2L1046.4 322.2L1046.7 273.5L1047.0 265.4L1047.3 273.0L1047.6 273.0L1047.8 273.0L1048.1 299.7L1048.4 367.3L1048.7 354.4L1049.0 355.6L1049.3 237.8L1049.5 324.5L1049.8 337.4L1050.1 291.1L1050.4 417.8L1050.7 233.9L1050.9 297.0L1051.2 295.3L1051.5 361.8L1051.8 308.9L1052.1 316.9L1052.4 263.0L1052.6 279.3L1052.9 279.3L1053.2 330.1L1053.5 302.5L1053.8 353.7L1054.0 301.9L1054.3 294.3L1054.6 252.7L1054.9 252.7L1055.2 322.3L1055.5 306.7L1055.7 306.7L1056.0 326.3L1056.3 281.1L1056.6 268.5L1056.9 266.7L1057.1 338.7L1057.4 340.9L1057.7 411.4L1058.0 312.9L1058.3 187.2L1058.6 347.2L1058.8 250.4L1059.1 264.7L1059.4 321.1L1059.7 368.7L1060.0 395.8L1060.2 332.0L1060.5 375.3L1060.8 327.4L1061.1 242.6L1061.4 242.6L1061.7 325.1L1061.9 317.5L1062.2 263.6L1062.5 277.5L1062.8 277.5L1063.1 304.4L1063.3 283.3L1063.6 308.4L1063.9 271.8L1064.2 282.4L1064.5 296.2L1064.7 243.4L1065.0 296.9L1065.3 270.5L1065.6 265.4L1065.9 220.4L1066.2 220.4L1066.4 313.8L1066.7 295.1L1067.0 284.0L1067.3 299.8L1067.6 327.8L1067.8 275.8L1068.1 359.7L1068.4 350.3L1068.7 317.3L1069.0 253.0L1069.3 322.4L1069.5 285.3L1069.8 359.6L1070.1 242.9L1070.4 247.8L1070.7 247.8L1070.9 305.0L1071.2 333.8L1071.5 333.8L1071.8 372.0L1072.1 372.0L1072.4 279.2L1072.6 244.5L1072.9 240.2L1073.2 278.8L1073.5 218.8L1073.8 346.7L1074.0 273.2L1074.3 259.2L1074.6 285.1L1074.9 247.9L1075.2 358.4L1075.5 358.4L1075.7 289.6L1076.0 314.3L1076.3 331.9L1076.6 317.0L1076.9 317.0L1077.1 284.2L1077.4 284.2L1077.7 317.5L1078.0 362.5L1078.3 323.3L1078.6 330.4L1078.8 306.2L1079.1 273.6L1079.4 345.0L1079.7 299.9L1080.0 350.2L1080.2 308.0L1080.5 308.0L1080.8 308.0L1081.1 308.0L1081.4 254.7L1081.6 371.3L1081.9 287.0L1082.2 287.0L1082.5 273.2L1082.8 202.8L1083.1 202.8L1083.3 370.5L1083.6 287.5L1083.9 222.6L1084.2 382.8L1084.5 354.0L1084.7 274.0L1085.0 363.8L1085.3 194.7L1085.6 226.4L1085.9 226.2L1086.2 342.5L1086.4 326.7L1086.7 271.2L1087.0 278.7" stroke="#c4dcc6" />
 </g>
 <rect x="233.5" y="89.5" width="862" height="585" fill="none" stroke="#000" stroke-width="1"/>
 <g stroke="#000" stroke-width="1">
<line x1="229" y1="666.5" x2="233" y2="666.5"/>
<line x1="229" y1="643.5" x2="233" y2="643.5"/>
<line x1="229" y1="619.5" x2="233" y2="619.5"/>
<line x1="229" y1="596.5" x2="233" y2="596.5"/>
<line x1="226" y1="573.5" x2="233" y2="573.5"/>
<line x1="229" y1="550.5" x2="233" y2="550.5"/>
<line x1="229" y1="527.5" x2="233" y2="527.5"/>
<line x1="229" y1="504.5" x2="233" y2="504.5"/>
<line x1="229" y1="481.5" x2="233" y2="481.5"/>
<line x1="226" y1="458.5" x2="233" y2="458.5"/>
<line x1="229" y1="435.5" x2="233" y2="435.5"/>
<line x1="229" y1="412.5" x2="233" y2="412.5"/>
<line x1="229" y1="388.5" x2="233" y2="388.5"/>
<line x1="229" y1="365.5" x2="233" y2="365.5"/>
<line x1="226" y1="342.5" x2="233" y2="342.5"/>
<line x1="229" y1="319.5" x2="233" y2="319.5"/>
<line x1="229" y1="296.5" x2="233" y2="296.5"/>
<line x1="229" y1="273.5" x2="233" y2="273.5"/>
<line x1="229" y1="250.5" x2="233" y2="250.5"/>
<line x1="226" y1="227.5" x2="233" y2="227.5"/>
<line x1="229" y1="204.5" x2="233" y2="204.5"/>
<line x1="229" y1="181.5" x2="233" y2="181.5"/>
<line x1="229" y1="157.5" x2="233" y2="157.5"/>
<line x1="229" y1="134.5" x2="233" y2="134.5"/>
<line x1="226" y1="111.5" x2="233" y2="111.5"/>
<line x1="241.5" y1="674" x2="241.5" y2="681"/>
<line x1="269.5" y1="674" x2="269.5" y2="678"/>
<line x1="297.5" y1="674" x2="297.5" y2="678"/>
<line x1="326.5" y1="674" x2="326.5" y2="678"/>
<line x1="354.5" y1="674" x2="354.5" y2="678"/>
<line x1="382.5" y1="674" x2="382.5" y2="681"/>
<line x1="410.5" y1="674" x2="410.5" y2="678"/>
<line x1="438.5" y1="674" x2="438.5" y2="678"/>
<line x1="466.5" y1="674" x2="466.5" y2="678"/>
<line x1="495.5" y1="674" x2="495.5" y2="678"/>
<line x1="523.5" y1="674" x2="523.5" y2="681"/>
<line x1="551.5" y1="674" x2="551.5" y2="678"/>
<line x1="579.5" y1="674" x2="579.5" y2="678"/>
<line x1="607.5" y1="674" x2="607.5" y2="678"/>
<line x1="635.5" y1="674" x2="635.5" y2="678"/>
<line x1="664.5" y1="674" x2="664.5" y2="681"/>
<line x1="692.5" y1="674" x2="692.5" y2="678"/>
<line x1="720.5" y1="674" x2="720.5" y2="678"/>
<line x1="748.5" y1="674" x2="748.5" y2="678"/>
<line x1="776.5" y1="674" x2="776.5" y2="678"/>
<line x1="804.5" y1="674" x2="804.5" y2="681"/>
<line x1="833.5" y1="674" x2="833.5" y2="678"/>
<line x1="861.5" y1="674" x2="861.5" y2="678"/>
<line x1="889.5" y1="674" x2="889.5" y2="678"/>
<line x1="917.5" y1="674" x2="917.5" y2="678"/>
<line x1="945.5" y1="674" x2="945.5" y2="681"/>
<line x1="973.5" y1="674" x2="973.5" y2="678"/>
<line x1="1002.5" y1="674" x2="1002.5" y2="678"/>
<line x1="1030.5" y1="674" x2="1030.5" y2="678"/>
<line x1="1058.5" y1="674" x2="1058.5" y2="678"/>
<line x1="1086.5" y1="674" x2="1086.5" y2="681"/>
</g>
 <!-- legend -->
 <rect x="1011.5" y="97.5" width="76" height="106" fill="#fff" fill-opacity="0.72" stroke="#a0a0a0" stroke-width="1"/>
 <line x1="1019" y1="112.5" x2="1035" y2="112.5" stroke="#f38aea" stroke-width="1.5"/>
<text x="1040" y="116.9" font-size="11.1" fill="#000" font-family="Liberation Sans, sans-serif">Chain 1</text>
<line x1="1019" y1="127.5" x2="1035" y2="127.5" stroke="#88bb88" stroke-width="1.5"/>
<text x="1040" y="131.9" font-size="11.1" fill="#000" font-family="Liberation Sans, sans-serif">Chain 2</text>
<line x1="1019" y1="142.5" x2="1035" y2="142.5" stroke="#c69cea" stroke-width="1.5"/>
<text x="1040" y="146.9" font-size="11.1" fill="#000" font-family="Liberation Sans, sans-serif">Chain 3</text>
<line x1="1019" y1="157.5" x2="1035" y2="157.5" stroke="#a69fd6" stroke-width="1.5"/>
<text x="1040" y="161.9" font-size="11.1" fill="#000" font-family="Liberation Sans, sans-serif">Chain 4</text>
<line x1="1019" y1="172.5" x2="1035" y2="172.5" stroke="#a6989f" stroke-width="1.5"/>
<text x="1040" y="176.9" font-size="11.1" fill="#000" font-family="Liberation Sans, sans-serif">Chain 5</text>
<line x1="1019" y1="187.5" x2="1035" y2="187.5" stroke="#c4dcc6" stroke-width="1.5"/>
<text x="1040" y="191.9" font-size="11.1" fill="#000" font-family="Liberation Sans, sans-serif">Chain 6</text>
 <!-- toolbar -->
 
 <rect x="1111" y="81" width="20" height="20" fill="#a3c4ee"/>
 <path d="M1117,82.8 L1117,96 L1120.2,93 L1122.6,98.8 L1124.7,98 L1122.3,92.4 L1126.3,92 Z" fill="#000"/>
 <path d="M1118.6,125.5 L1118.4,122.7 L1115.3,120 L1113.1,117.2 L1112.9,115.5 L1114.5,114.3 L1116.4,115.1 L1117.2,116.2 L1116.4,113.4 L1115.3,110.3 L1116.4,108.6 L1117.9,109.2 L1119.3,112.7 L1119.8,108.9 L1121.2,107.5 L1122.6,108.4 L1123.1,112.7 L1124,109.2 L1125.3,108.4 L1126.5,109.4 L1126.7,113.7 L1128.1,111.5 L1129.6,111.7 L1129.6,114.4 L1128.4,117.9 L1126.7,122 L1126.5,125.5" fill="#fff" stroke="#000" stroke-width="1.3" stroke-linejoin="round"/>
 <circle cx="1118.9" cy="138.7" r="5.5" fill="none" stroke="#000" stroke-width="1.7"/>
 <path d="M1115.2,138.7 H1122.6 M1118.9,135 V142.4" stroke="#000" stroke-width="1.3"/>
 <path d="M1122.8,142.8 L1129.4,149.4" stroke="#000" stroke-width="2.6" stroke-linecap="round"/>
 <path d="M1111.2,161.5 V156.1 H1116.5 V158.9 H1114 V161.5 Z M1130.7,161.5 V156.1 H1125.3 V158.9 H1127.9 V161.5 Z M1111.2,170.3 V175.8 H1116.5 V173 H1114 V170.3 Z M1130.7,170.3 V175.8 H1125.3 V173 H1127.9 V170.3 Z" fill="#000"/>
 <path d="M1121,159.5 V164.6 M1121,167.4 V172.5 M1114.5,166 H1119.6 M1122.4,166 H1127.5" stroke="#444" stroke-width="1.3"/>
 <path d="M1121,156.6 L1122.8,159.2 L1121,161 L1119.2,159.2 Z M1121,175.4 L1122.8,172.8 L1121,171 L1119.2,172.8 Z M1111.6,166 L1114.2,164.2 L1116,166 L1114.2,167.8 Z M1130.4,166 L1127.8,164.2 L1126,166 L1127.8,167.8 Z" fill="#000"/>
 <rect x="1113.2" y="189" width="15.4" height="3.7" fill="#000"/>
 <rect x="1119.1" y="183.2" width="3.8" height="15.5" fill="#000"/>
 <path d="M1116.4,211 L1117.5,208.2 H1125 L1126,211 Z" fill="#000"/>
 <rect x="1111.2" y="210.9" width="19.7" height="13.2" rx="2.2" fill="#000"/>
 <circle cx="1121" cy="217.5" r="4.6" fill="none" stroke="#dfe3ee" stroke-width="1.6"/>
 <rect x="1113.6" y="212.3" width="1.6" height="1.6" fill="#c8cdd8"/>
 <path d="M1118.8,234.5 H1114 Q1112.5,234.5 1112.5,236 V248 Q1112.5,249.5 1114,249.5 H1125.6 Q1127.1,249.5 1127.1,248 V242.5" fill="none" stroke="#000" stroke-width="2.6"/>
 <path d="M1116,244.2 Q1117.5,234.8 1125.1,233.8 L1125,230.9 L1131.3,237.2 L1125.2,243.4 L1125.2,240.6 Q1119.5,239.8 1116,244.2 Z" fill="#000"/>
 <path d="M1121.00,258.70 L1122.20,258.80 L1123.29,256.47 L1126.12,257.64 L1125.24,260.06 L1126.16,260.84 L1126.94,261.76 L1129.36,260.88 L1130.53,263.71 L1128.20,264.80 L1128.30,266.00 L1128.20,267.20 L1130.53,268.29 L1129.36,271.12 L1126.94,270.24 L1126.16,271.16 L1125.24,271.94 L1126.12,274.36 L1123.29,275.53 L1122.20,273.20 L1121.00,273.30 L1119.80,273.20 L1118.71,275.53 L1115.88,274.36 L1116.76,271.94 L1115.84,271.16 L1115.06,270.24 L1112.64,271.12 L1111.47,268.29 L1113.80,267.20 L1113.70,266.00 L1113.80,264.80 L1111.47,263.71 L1112.64,260.88 L1115.06,261.76 L1115.84,260.84 L1116.76,260.06 L1115.88,257.64 L1118.71,256.47 L1119.80,258.80 Z M1117.20,266.00 a3.8,3.8 0 1,0 7.6,0 a3.8,3.8 0 1,0 -7.6,0 Z" fill="#000" fill-rule="evenodd"/>

<text x="25" y="15.5" font-size="11.7" text-anchor="start" fill="#fff" font-family="Liberation Sans, sans-serif" >Example Input Dataset</text>
<text x="191.5" y="15.5" font-size="11.7" text-anchor="start" fill="#fff" font-family="Liberation Sans, sans-serif" >Example Fitting Analysis</text>
<text x="367.5" y="15.5" font-size="11.5" text-anchor="start" fill="#000" font-family="Liberation Sans, sans-serif" >Example Bayesian MCMC</text>
<text x="20" y="51" font-size="11.7" text-anchor="start" fill="#000" font-family="Liberation Sans, sans-serif" >Frequency Results</text>
<text x="20" y="81" font-size="11.7" text-anchor="start" fill="#000" font-family="Liberation Sans, sans-serif" >Kernel Density</text>
<text x="20" y="111" font-size="11.7" text-anchor="start" fill="#000" font-family="Liberation Sans, sans-serif" >Histogram</text>
<text x="20" y="141" font-size="11.7" text-anchor="start" fill="#000" font-family="Liberation Sans, sans-serif" >Bivariate</text>
<text x="20" y="171" font-size="11.7" text-anchor="start" fill="#000" font-family="Liberation Sans, sans-serif" >Mean Likelihood</text>
<text x="20" y="201" font-size="11.7" text-anchor="start" fill="#000" font-family="Liberation Sans, sans-serif" >Autocorrelation</text>
<text x="20" y="231" font-size="11.7" text-anchor="start" fill="#000" font-family="Liberation Sans, sans-serif" >Markov Chain Traces</text>
<text x="159" y="45" font-size="11.7" text-anchor="start" fill="#000" font-family="Liberation Sans, sans-serif" >Select Parameter</text>
<text x="165.5" y="67.2" font-size="11.7" text-anchor="start" fill="#000" font-family="Liberation Sans, sans-serif" >Skew (of log) (γ)</text>
<text x="367" y="45" font-size="11.7" text-anchor="start" fill="#000" font-family="Liberation Sans, sans-serif" >Select Chain</text>
<text x="373.5" y="67.2" font-size="11.7" text-anchor="start" fill="#000" font-family="Liberation Sans, sans-serif" >All Chains</text>
<text x="595" y="66" font-size="12.1" text-anchor="start" fill="#000" font-family="Liberation Sans, sans-serif" >Include Warm Up</text>
<text x="0" y="0" font-size="12" text-anchor="end" fill="#000" font-family="Liberation Sans, sans-serif" transform="translate(222.3,115.8) scale(0.92,1)">0.5</text>
<text x="0" y="0" font-size="12" text-anchor="end" fill="#000" font-family="Liberation Sans, sans-serif" transform="translate(222.3,231.8) scale(0.92,1)">0</text>
<text x="0" y="0" font-size="12" text-anchor="end" fill="#000" font-family="Liberation Sans, sans-serif" transform="translate(222.3,346.8) scale(0.92,1)">-0.5</text>
<text x="0" y="0" font-size="12" text-anchor="end" fill="#000" font-family="Liberation Sans, sans-serif" transform="translate(222.3,462.8) scale(0.92,1)">-1</text>
<text x="0" y="0" font-size="12" text-anchor="end" fill="#000" font-family="Liberation Sans, sans-serif" transform="translate(222.3,577.8) scale(0.92,1)">-1.5</text>
<text x="0" y="0" font-size="12" text-anchor="middle" fill="#000" font-family="Liberation Sans, sans-serif" transform="translate(241.5,696.6) scale(0.9,1)">0</text>
<text x="0" y="0" font-size="12" text-anchor="middle" fill="#000" font-family="Liberation Sans, sans-serif" transform="translate(382.5,696.6) scale(0.9,1)">500</text>
<text x="0" y="0" font-size="12" text-anchor="middle" fill="#000" font-family="Liberation Sans, sans-serif" transform="translate(523.5,696.6) scale(0.9,1)">1,000</text>
<text x="0" y="0" font-size="12" text-anchor="middle" fill="#000" font-family="Liberation Sans, sans-serif" transform="translate(664.5,696.6) scale(0.9,1)">1,500</text>
<text x="0" y="0" font-size="12" text-anchor="middle" fill="#000" font-family="Liberation Sans, sans-serif" transform="translate(804.5,696.6) scale(0.9,1)">2,000</text>
<text x="0" y="0" font-size="12" text-anchor="middle" fill="#000" font-family="Liberation Sans, sans-serif" transform="translate(945.5,696.6) scale(0.9,1)">2,500</text>
<text x="0" y="0" font-size="12" text-anchor="middle" fill="#000" font-family="Liberation Sans, sans-serif" transform="translate(1086.5,696.6) scale(0.9,1)">3,000</text>
<text x="664.7" y="726.8" font-size="15.9" text-anchor="middle" fill="#000" font-family="Liberation Sans, sans-serif" >Evolution</text>
<text x="0" y="0" font-size="15.9" text-anchor="middle" fill="#000" font-family="Liberation Sans, sans-serif" transform="translate(188.2,381) rotate(-90)">Skew (of log) (γ)</text>
</svg>
</body></html>
